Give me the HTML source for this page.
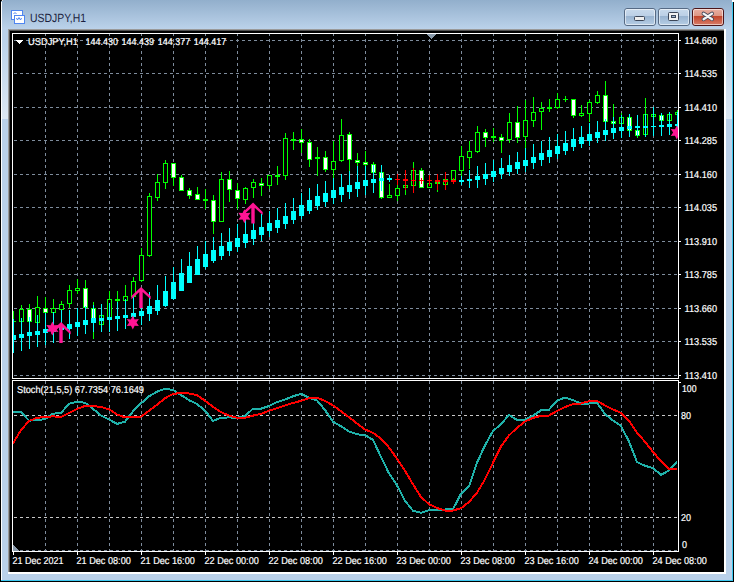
<!DOCTYPE html><html><head><meta charset="utf-8"><style>html,body{margin:0;padding:0;width:736px;height:582px;overflow:hidden;background:#fff}</style></head><body><svg width="736" height="582" viewBox="0 0 736 582" shape-rendering="crispEdges" style="position:absolute;left:0;top:0">
<defs>
<linearGradient id="tb" x1="0" y1="0" x2="0" y2="1">
 <stop offset="0" stop-color="#92AFCC"/><stop offset="1" stop-color="#BBD2EA"/>
</linearGradient>
<linearGradient id="side" x1="0" y1="0" x2="0" y2="1">
 <stop offset="0" stop-color="#BBD2EA"/><stop offset="1" stop-color="#DCE7F2"/>
</linearGradient>
<linearGradient id="btn" x1="0" y1="0" x2="0" y2="1">
 <stop offset="0" stop-color="#C9DAEC"/><stop offset="0.42" stop-color="#BCD0E6"/>
 <stop offset="0.45" stop-color="#98B3D0"/><stop offset="1" stop-color="#B8CFE6"/>
</linearGradient>
<linearGradient id="cbtn" x1="0" y1="0" x2="0" y2="1">
 <stop offset="0" stop-color="#E9B1A5"/><stop offset="0.42" stop-color="#DE9785"/>
 <stop offset="0.45" stop-color="#C2442A"/><stop offset="1" stop-color="#D9806C"/>
</linearGradient>
</defs>
<rect x="0" y="0" width="736" height="582" fill="#FFFFFF"/>
<rect x="0" y="0" width="734" height="582" fill="#BAD1EA"/>
<rect x="1" y="0" width="732" height="29" fill="url(#tb)"/>
<rect x="2" y="40" width="6" height="79" fill="url(#side)"/>
<rect x="726" y="40" width="6" height="79" fill="url(#side)"/>
<rect x="0" y="0" width="1" height="582" fill="#000000"/>
<rect x="1" y="2" width="1" height="579" fill="#FFFFFF"/>
<rect x="733" y="2" width="1" height="580" fill="#000000"/>
<rect x="732" y="2" width="1" height="579" fill="#3CC8F0"/>
<rect x="0" y="581" width="734" height="1" fill="#000000"/>
<rect x="1" y="580" width="732" height="1" fill="#3CC8F0"/>
<rect x="1" y="0" width="1" height="1" fill="#202020"/>
<rect x="2" y="0" width="1" height="1" fill="#E0E0E0"/>
<rect x="732" y="0" width="2" height="2" fill="#FFFFFF"/>
<rect x="8" y="29" width="718" height="545" fill="#FFFFFF"/>
<rect x="8" y="29" width="716" height="543" fill="#9A9A9A"/>
<rect x="9" y="30" width="715" height="542" fill="#505050"/>
<rect x="10" y="31" width="714" height="541" fill="#000000"/>
<g>
<rect x="11" y="10" width="12" height="10" fill="#4F86F0"/>
<rect x="12" y="11" width="10" height="8" fill="#FFFFFF"/>
<rect x="14" y="15" width="11" height="9" fill="#4F86F0"/>
<rect x="15" y="16" width="9" height="7" fill="#FFFFFF"/>
<path d="M13.5 14 l1.5 -1.5 l1.5 1.5 M16.5 18 l1 2 l1.5-2.5 l1.5 2.5 l1-2" stroke="#4F86F0" stroke-width="1" fill="none" shape-rendering="geometricPrecision"/>
</g>
<text x="30" y="22" font-family='"Liberation Sans", sans-serif' font-size="12" fill="#1B1F3E" textLength="56" lengthAdjust="spacingAndGlyphs" text-rendering="geometricPrecision">USDJPY,H1</text>
<rect x="624.5" y="8.5" width="31" height="17" rx="2.5" fill="url(#btn)" stroke="#566A84" stroke-width="1" shape-rendering="geometricPrecision"/>
<rect x="625.5" y="9.5" width="29" height="15" rx="1.5" fill="none" stroke="#FFFFFF" stroke-opacity="0.55" stroke-width="1" shape-rendering="geometricPrecision"/>
<rect x="658.5" y="8.5" width="31" height="17" rx="2.5" fill="url(#btn)" stroke="#566A84" stroke-width="1" shape-rendering="geometricPrecision"/>
<rect x="659.5" y="9.5" width="29" height="15" rx="1.5" fill="none" stroke="#FFFFFF" stroke-opacity="0.55" stroke-width="1" shape-rendering="geometricPrecision"/>
<rect x="692.5" y="8.5" width="31" height="17" rx="2.5" fill="url(#cbtn)" stroke="#4C1519" stroke-width="1" shape-rendering="geometricPrecision"/>
<rect x="693.5" y="9.5" width="29" height="15" rx="1.5" fill="none" stroke="#FFFFFF" stroke-opacity="0.55" stroke-width="1" shape-rendering="geometricPrecision"/>
<rect x="634.5" y="16.5" width="10" height="4" rx="1" fill="#EEEEEE" stroke="#3C4658" stroke-width="1" shape-rendering="geometricPrecision"/>
<rect x="668.5" y="12.5" width="10" height="8" rx="1" fill="#F2F2F2" stroke="#3C4658" stroke-width="1" shape-rendering="geometricPrecision"/>
<rect x="671" y="15" width="5" height="3" fill="#3C4658"/>
<rect x="672" y="16" width="3" height="1" fill="#9FB6D0"/>
<path d="M703.6 13.6 L712 19.2 M712 13.6 L703.6 19.2" stroke="#45485A" stroke-width="4.0" stroke-linecap="round" shape-rendering="geometricPrecision"/>
<path d="M703.6 13.6 L712 19.2 M712 13.6 L703.6 19.2" stroke="#F4F4F4" stroke-width="2.3" stroke-linecap="round" shape-rendering="geometricPrecision"/>
<rect x="12" y="33" width="667" height="1" fill="#FFFFFF"/>
<rect x="12" y="33" width="1" height="346" fill="#FFFFFF"/>
<rect x="678" y="33" width="1" height="346" fill="#FFFFFF"/>
<rect x="12" y="378" width="667" height="1" fill="#FFFFFF"/>
<rect x="12" y="380" width="667" height="1" fill="#FFFFFF"/>
<rect x="12" y="380" width="1" height="172" fill="#FFFFFF"/>
<rect x="678" y="380" width="1" height="172" fill="#FFFFFF"/>
<rect x="12" y="551" width="667" height="1" fill="#FFFFFF"/>
<rect x="14" y="40" width="3" height="1" fill="#7E8C9C"/>
<rect x="20" y="40" width="3" height="1" fill="#7E8C9C"/>
<rect x="26" y="40" width="3" height="1" fill="#7E8C9C"/>
<rect x="32" y="40" width="3" height="1" fill="#7E8C9C"/>
<rect x="38" y="40" width="3" height="1" fill="#7E8C9C"/>
<rect x="44" y="40" width="3" height="1" fill="#7E8C9C"/>
<rect x="50" y="40" width="3" height="1" fill="#7E8C9C"/>
<rect x="56" y="40" width="3" height="1" fill="#7E8C9C"/>
<rect x="62" y="40" width="3" height="1" fill="#7E8C9C"/>
<rect x="68" y="40" width="3" height="1" fill="#7E8C9C"/>
<rect x="74" y="40" width="3" height="1" fill="#7E8C9C"/>
<rect x="80" y="40" width="3" height="1" fill="#7E8C9C"/>
<rect x="86" y="40" width="3" height="1" fill="#7E8C9C"/>
<rect x="92" y="40" width="3" height="1" fill="#7E8C9C"/>
<rect x="98" y="40" width="3" height="1" fill="#7E8C9C"/>
<rect x="104" y="40" width="3" height="1" fill="#7E8C9C"/>
<rect x="110" y="40" width="3" height="1" fill="#7E8C9C"/>
<rect x="116" y="40" width="3" height="1" fill="#7E8C9C"/>
<rect x="122" y="40" width="3" height="1" fill="#7E8C9C"/>
<rect x="128" y="40" width="3" height="1" fill="#7E8C9C"/>
<rect x="134" y="40" width="3" height="1" fill="#7E8C9C"/>
<rect x="140" y="40" width="3" height="1" fill="#7E8C9C"/>
<rect x="146" y="40" width="3" height="1" fill="#7E8C9C"/>
<rect x="152" y="40" width="3" height="1" fill="#7E8C9C"/>
<rect x="158" y="40" width="3" height="1" fill="#7E8C9C"/>
<rect x="164" y="40" width="3" height="1" fill="#7E8C9C"/>
<rect x="170" y="40" width="3" height="1" fill="#7E8C9C"/>
<rect x="176" y="40" width="3" height="1" fill="#7E8C9C"/>
<rect x="182" y="40" width="3" height="1" fill="#7E8C9C"/>
<rect x="188" y="40" width="3" height="1" fill="#7E8C9C"/>
<rect x="194" y="40" width="3" height="1" fill="#7E8C9C"/>
<rect x="200" y="40" width="3" height="1" fill="#7E8C9C"/>
<rect x="206" y="40" width="3" height="1" fill="#7E8C9C"/>
<rect x="212" y="40" width="3" height="1" fill="#7E8C9C"/>
<rect x="218" y="40" width="3" height="1" fill="#7E8C9C"/>
<rect x="224" y="40" width="3" height="1" fill="#7E8C9C"/>
<rect x="230" y="40" width="3" height="1" fill="#7E8C9C"/>
<rect x="236" y="40" width="3" height="1" fill="#7E8C9C"/>
<rect x="242" y="40" width="3" height="1" fill="#7E8C9C"/>
<rect x="248" y="40" width="3" height="1" fill="#7E8C9C"/>
<rect x="254" y="40" width="3" height="1" fill="#7E8C9C"/>
<rect x="260" y="40" width="3" height="1" fill="#7E8C9C"/>
<rect x="266" y="40" width="3" height="1" fill="#7E8C9C"/>
<rect x="272" y="40" width="3" height="1" fill="#7E8C9C"/>
<rect x="278" y="40" width="3" height="1" fill="#7E8C9C"/>
<rect x="284" y="40" width="3" height="1" fill="#7E8C9C"/>
<rect x="290" y="40" width="3" height="1" fill="#7E8C9C"/>
<rect x="296" y="40" width="3" height="1" fill="#7E8C9C"/>
<rect x="302" y="40" width="3" height="1" fill="#7E8C9C"/>
<rect x="308" y="40" width="3" height="1" fill="#7E8C9C"/>
<rect x="314" y="40" width="3" height="1" fill="#7E8C9C"/>
<rect x="320" y="40" width="3" height="1" fill="#7E8C9C"/>
<rect x="326" y="40" width="3" height="1" fill="#7E8C9C"/>
<rect x="332" y="40" width="3" height="1" fill="#7E8C9C"/>
<rect x="338" y="40" width="3" height="1" fill="#7E8C9C"/>
<rect x="344" y="40" width="3" height="1" fill="#7E8C9C"/>
<rect x="350" y="40" width="3" height="1" fill="#7E8C9C"/>
<rect x="356" y="40" width="3" height="1" fill="#7E8C9C"/>
<rect x="362" y="40" width="3" height="1" fill="#7E8C9C"/>
<rect x="368" y="40" width="3" height="1" fill="#7E8C9C"/>
<rect x="374" y="40" width="3" height="1" fill="#7E8C9C"/>
<rect x="380" y="40" width="3" height="1" fill="#7E8C9C"/>
<rect x="386" y="40" width="3" height="1" fill="#7E8C9C"/>
<rect x="392" y="40" width="3" height="1" fill="#7E8C9C"/>
<rect x="398" y="40" width="3" height="1" fill="#7E8C9C"/>
<rect x="404" y="40" width="3" height="1" fill="#7E8C9C"/>
<rect x="410" y="40" width="3" height="1" fill="#7E8C9C"/>
<rect x="416" y="40" width="3" height="1" fill="#7E8C9C"/>
<rect x="422" y="40" width="3" height="1" fill="#7E8C9C"/>
<rect x="428" y="40" width="3" height="1" fill="#7E8C9C"/>
<rect x="434" y="40" width="3" height="1" fill="#7E8C9C"/>
<rect x="440" y="40" width="3" height="1" fill="#7E8C9C"/>
<rect x="446" y="40" width="3" height="1" fill="#7E8C9C"/>
<rect x="452" y="40" width="3" height="1" fill="#7E8C9C"/>
<rect x="458" y="40" width="3" height="1" fill="#7E8C9C"/>
<rect x="464" y="40" width="3" height="1" fill="#7E8C9C"/>
<rect x="470" y="40" width="3" height="1" fill="#7E8C9C"/>
<rect x="476" y="40" width="3" height="1" fill="#7E8C9C"/>
<rect x="482" y="40" width="3" height="1" fill="#7E8C9C"/>
<rect x="488" y="40" width="3" height="1" fill="#7E8C9C"/>
<rect x="494" y="40" width="3" height="1" fill="#7E8C9C"/>
<rect x="500" y="40" width="3" height="1" fill="#7E8C9C"/>
<rect x="506" y="40" width="3" height="1" fill="#7E8C9C"/>
<rect x="512" y="40" width="3" height="1" fill="#7E8C9C"/>
<rect x="518" y="40" width="3" height="1" fill="#7E8C9C"/>
<rect x="524" y="40" width="3" height="1" fill="#7E8C9C"/>
<rect x="530" y="40" width="3" height="1" fill="#7E8C9C"/>
<rect x="536" y="40" width="3" height="1" fill="#7E8C9C"/>
<rect x="542" y="40" width="3" height="1" fill="#7E8C9C"/>
<rect x="548" y="40" width="3" height="1" fill="#7E8C9C"/>
<rect x="554" y="40" width="3" height="1" fill="#7E8C9C"/>
<rect x="560" y="40" width="3" height="1" fill="#7E8C9C"/>
<rect x="566" y="40" width="3" height="1" fill="#7E8C9C"/>
<rect x="572" y="40" width="3" height="1" fill="#7E8C9C"/>
<rect x="578" y="40" width="3" height="1" fill="#7E8C9C"/>
<rect x="584" y="40" width="3" height="1" fill="#7E8C9C"/>
<rect x="590" y="40" width="3" height="1" fill="#7E8C9C"/>
<rect x="596" y="40" width="3" height="1" fill="#7E8C9C"/>
<rect x="602" y="40" width="3" height="1" fill="#7E8C9C"/>
<rect x="608" y="40" width="3" height="1" fill="#7E8C9C"/>
<rect x="614" y="40" width="3" height="1" fill="#7E8C9C"/>
<rect x="620" y="40" width="3" height="1" fill="#7E8C9C"/>
<rect x="626" y="40" width="3" height="1" fill="#7E8C9C"/>
<rect x="632" y="40" width="3" height="1" fill="#7E8C9C"/>
<rect x="638" y="40" width="3" height="1" fill="#7E8C9C"/>
<rect x="644" y="40" width="3" height="1" fill="#7E8C9C"/>
<rect x="650" y="40" width="3" height="1" fill="#7E8C9C"/>
<rect x="656" y="40" width="3" height="1" fill="#7E8C9C"/>
<rect x="662" y="40" width="3" height="1" fill="#7E8C9C"/>
<rect x="668" y="40" width="3" height="1" fill="#7E8C9C"/>
<rect x="674" y="40" width="3" height="1" fill="#7E8C9C"/>
<rect x="14" y="73" width="3" height="1" fill="#7E8C9C"/>
<rect x="20" y="73" width="3" height="1" fill="#7E8C9C"/>
<rect x="26" y="73" width="3" height="1" fill="#7E8C9C"/>
<rect x="32" y="73" width="3" height="1" fill="#7E8C9C"/>
<rect x="38" y="73" width="3" height="1" fill="#7E8C9C"/>
<rect x="44" y="73" width="3" height="1" fill="#7E8C9C"/>
<rect x="50" y="73" width="3" height="1" fill="#7E8C9C"/>
<rect x="56" y="73" width="3" height="1" fill="#7E8C9C"/>
<rect x="62" y="73" width="3" height="1" fill="#7E8C9C"/>
<rect x="68" y="73" width="3" height="1" fill="#7E8C9C"/>
<rect x="74" y="73" width="3" height="1" fill="#7E8C9C"/>
<rect x="80" y="73" width="3" height="1" fill="#7E8C9C"/>
<rect x="86" y="73" width="3" height="1" fill="#7E8C9C"/>
<rect x="92" y="73" width="3" height="1" fill="#7E8C9C"/>
<rect x="98" y="73" width="3" height="1" fill="#7E8C9C"/>
<rect x="104" y="73" width="3" height="1" fill="#7E8C9C"/>
<rect x="110" y="73" width="3" height="1" fill="#7E8C9C"/>
<rect x="116" y="73" width="3" height="1" fill="#7E8C9C"/>
<rect x="122" y="73" width="3" height="1" fill="#7E8C9C"/>
<rect x="128" y="73" width="3" height="1" fill="#7E8C9C"/>
<rect x="134" y="73" width="3" height="1" fill="#7E8C9C"/>
<rect x="140" y="73" width="3" height="1" fill="#7E8C9C"/>
<rect x="146" y="73" width="3" height="1" fill="#7E8C9C"/>
<rect x="152" y="73" width="3" height="1" fill="#7E8C9C"/>
<rect x="158" y="73" width="3" height="1" fill="#7E8C9C"/>
<rect x="164" y="73" width="3" height="1" fill="#7E8C9C"/>
<rect x="170" y="73" width="3" height="1" fill="#7E8C9C"/>
<rect x="176" y="73" width="3" height="1" fill="#7E8C9C"/>
<rect x="182" y="73" width="3" height="1" fill="#7E8C9C"/>
<rect x="188" y="73" width="3" height="1" fill="#7E8C9C"/>
<rect x="194" y="73" width="3" height="1" fill="#7E8C9C"/>
<rect x="200" y="73" width="3" height="1" fill="#7E8C9C"/>
<rect x="206" y="73" width="3" height="1" fill="#7E8C9C"/>
<rect x="212" y="73" width="3" height="1" fill="#7E8C9C"/>
<rect x="218" y="73" width="3" height="1" fill="#7E8C9C"/>
<rect x="224" y="73" width="3" height="1" fill="#7E8C9C"/>
<rect x="230" y="73" width="3" height="1" fill="#7E8C9C"/>
<rect x="236" y="73" width="3" height="1" fill="#7E8C9C"/>
<rect x="242" y="73" width="3" height="1" fill="#7E8C9C"/>
<rect x="248" y="73" width="3" height="1" fill="#7E8C9C"/>
<rect x="254" y="73" width="3" height="1" fill="#7E8C9C"/>
<rect x="260" y="73" width="3" height="1" fill="#7E8C9C"/>
<rect x="266" y="73" width="3" height="1" fill="#7E8C9C"/>
<rect x="272" y="73" width="3" height="1" fill="#7E8C9C"/>
<rect x="278" y="73" width="3" height="1" fill="#7E8C9C"/>
<rect x="284" y="73" width="3" height="1" fill="#7E8C9C"/>
<rect x="290" y="73" width="3" height="1" fill="#7E8C9C"/>
<rect x="296" y="73" width="3" height="1" fill="#7E8C9C"/>
<rect x="302" y="73" width="3" height="1" fill="#7E8C9C"/>
<rect x="308" y="73" width="3" height="1" fill="#7E8C9C"/>
<rect x="314" y="73" width="3" height="1" fill="#7E8C9C"/>
<rect x="320" y="73" width="3" height="1" fill="#7E8C9C"/>
<rect x="326" y="73" width="3" height="1" fill="#7E8C9C"/>
<rect x="332" y="73" width="3" height="1" fill="#7E8C9C"/>
<rect x="338" y="73" width="3" height="1" fill="#7E8C9C"/>
<rect x="344" y="73" width="3" height="1" fill="#7E8C9C"/>
<rect x="350" y="73" width="3" height="1" fill="#7E8C9C"/>
<rect x="356" y="73" width="3" height="1" fill="#7E8C9C"/>
<rect x="362" y="73" width="3" height="1" fill="#7E8C9C"/>
<rect x="368" y="73" width="3" height="1" fill="#7E8C9C"/>
<rect x="374" y="73" width="3" height="1" fill="#7E8C9C"/>
<rect x="380" y="73" width="3" height="1" fill="#7E8C9C"/>
<rect x="386" y="73" width="3" height="1" fill="#7E8C9C"/>
<rect x="392" y="73" width="3" height="1" fill="#7E8C9C"/>
<rect x="398" y="73" width="3" height="1" fill="#7E8C9C"/>
<rect x="404" y="73" width="3" height="1" fill="#7E8C9C"/>
<rect x="410" y="73" width="3" height="1" fill="#7E8C9C"/>
<rect x="416" y="73" width="3" height="1" fill="#7E8C9C"/>
<rect x="422" y="73" width="3" height="1" fill="#7E8C9C"/>
<rect x="428" y="73" width="3" height="1" fill="#7E8C9C"/>
<rect x="434" y="73" width="3" height="1" fill="#7E8C9C"/>
<rect x="440" y="73" width="3" height="1" fill="#7E8C9C"/>
<rect x="446" y="73" width="3" height="1" fill="#7E8C9C"/>
<rect x="452" y="73" width="3" height="1" fill="#7E8C9C"/>
<rect x="458" y="73" width="3" height="1" fill="#7E8C9C"/>
<rect x="464" y="73" width="3" height="1" fill="#7E8C9C"/>
<rect x="470" y="73" width="3" height="1" fill="#7E8C9C"/>
<rect x="476" y="73" width="3" height="1" fill="#7E8C9C"/>
<rect x="482" y="73" width="3" height="1" fill="#7E8C9C"/>
<rect x="488" y="73" width="3" height="1" fill="#7E8C9C"/>
<rect x="494" y="73" width="3" height="1" fill="#7E8C9C"/>
<rect x="500" y="73" width="3" height="1" fill="#7E8C9C"/>
<rect x="506" y="73" width="3" height="1" fill="#7E8C9C"/>
<rect x="512" y="73" width="3" height="1" fill="#7E8C9C"/>
<rect x="518" y="73" width="3" height="1" fill="#7E8C9C"/>
<rect x="524" y="73" width="3" height="1" fill="#7E8C9C"/>
<rect x="530" y="73" width="3" height="1" fill="#7E8C9C"/>
<rect x="536" y="73" width="3" height="1" fill="#7E8C9C"/>
<rect x="542" y="73" width="3" height="1" fill="#7E8C9C"/>
<rect x="548" y="73" width="3" height="1" fill="#7E8C9C"/>
<rect x="554" y="73" width="3" height="1" fill="#7E8C9C"/>
<rect x="560" y="73" width="3" height="1" fill="#7E8C9C"/>
<rect x="566" y="73" width="3" height="1" fill="#7E8C9C"/>
<rect x="572" y="73" width="3" height="1" fill="#7E8C9C"/>
<rect x="578" y="73" width="3" height="1" fill="#7E8C9C"/>
<rect x="584" y="73" width="3" height="1" fill="#7E8C9C"/>
<rect x="590" y="73" width="3" height="1" fill="#7E8C9C"/>
<rect x="596" y="73" width="3" height="1" fill="#7E8C9C"/>
<rect x="602" y="73" width="3" height="1" fill="#7E8C9C"/>
<rect x="608" y="73" width="3" height="1" fill="#7E8C9C"/>
<rect x="614" y="73" width="3" height="1" fill="#7E8C9C"/>
<rect x="620" y="73" width="3" height="1" fill="#7E8C9C"/>
<rect x="626" y="73" width="3" height="1" fill="#7E8C9C"/>
<rect x="632" y="73" width="3" height="1" fill="#7E8C9C"/>
<rect x="638" y="73" width="3" height="1" fill="#7E8C9C"/>
<rect x="644" y="73" width="3" height="1" fill="#7E8C9C"/>
<rect x="650" y="73" width="3" height="1" fill="#7E8C9C"/>
<rect x="656" y="73" width="3" height="1" fill="#7E8C9C"/>
<rect x="662" y="73" width="3" height="1" fill="#7E8C9C"/>
<rect x="668" y="73" width="3" height="1" fill="#7E8C9C"/>
<rect x="674" y="73" width="3" height="1" fill="#7E8C9C"/>
<rect x="14" y="107" width="3" height="1" fill="#7E8C9C"/>
<rect x="20" y="107" width="3" height="1" fill="#7E8C9C"/>
<rect x="26" y="107" width="3" height="1" fill="#7E8C9C"/>
<rect x="32" y="107" width="3" height="1" fill="#7E8C9C"/>
<rect x="38" y="107" width="3" height="1" fill="#7E8C9C"/>
<rect x="44" y="107" width="3" height="1" fill="#7E8C9C"/>
<rect x="50" y="107" width="3" height="1" fill="#7E8C9C"/>
<rect x="56" y="107" width="3" height="1" fill="#7E8C9C"/>
<rect x="62" y="107" width="3" height="1" fill="#7E8C9C"/>
<rect x="68" y="107" width="3" height="1" fill="#7E8C9C"/>
<rect x="74" y="107" width="3" height="1" fill="#7E8C9C"/>
<rect x="80" y="107" width="3" height="1" fill="#7E8C9C"/>
<rect x="86" y="107" width="3" height="1" fill="#7E8C9C"/>
<rect x="92" y="107" width="3" height="1" fill="#7E8C9C"/>
<rect x="98" y="107" width="3" height="1" fill="#7E8C9C"/>
<rect x="104" y="107" width="3" height="1" fill="#7E8C9C"/>
<rect x="110" y="107" width="3" height="1" fill="#7E8C9C"/>
<rect x="116" y="107" width="3" height="1" fill="#7E8C9C"/>
<rect x="122" y="107" width="3" height="1" fill="#7E8C9C"/>
<rect x="128" y="107" width="3" height="1" fill="#7E8C9C"/>
<rect x="134" y="107" width="3" height="1" fill="#7E8C9C"/>
<rect x="140" y="107" width="3" height="1" fill="#7E8C9C"/>
<rect x="146" y="107" width="3" height="1" fill="#7E8C9C"/>
<rect x="152" y="107" width="3" height="1" fill="#7E8C9C"/>
<rect x="158" y="107" width="3" height="1" fill="#7E8C9C"/>
<rect x="164" y="107" width="3" height="1" fill="#7E8C9C"/>
<rect x="170" y="107" width="3" height="1" fill="#7E8C9C"/>
<rect x="176" y="107" width="3" height="1" fill="#7E8C9C"/>
<rect x="182" y="107" width="3" height="1" fill="#7E8C9C"/>
<rect x="188" y="107" width="3" height="1" fill="#7E8C9C"/>
<rect x="194" y="107" width="3" height="1" fill="#7E8C9C"/>
<rect x="200" y="107" width="3" height="1" fill="#7E8C9C"/>
<rect x="206" y="107" width="3" height="1" fill="#7E8C9C"/>
<rect x="212" y="107" width="3" height="1" fill="#7E8C9C"/>
<rect x="218" y="107" width="3" height="1" fill="#7E8C9C"/>
<rect x="224" y="107" width="3" height="1" fill="#7E8C9C"/>
<rect x="230" y="107" width="3" height="1" fill="#7E8C9C"/>
<rect x="236" y="107" width="3" height="1" fill="#7E8C9C"/>
<rect x="242" y="107" width="3" height="1" fill="#7E8C9C"/>
<rect x="248" y="107" width="3" height="1" fill="#7E8C9C"/>
<rect x="254" y="107" width="3" height="1" fill="#7E8C9C"/>
<rect x="260" y="107" width="3" height="1" fill="#7E8C9C"/>
<rect x="266" y="107" width="3" height="1" fill="#7E8C9C"/>
<rect x="272" y="107" width="3" height="1" fill="#7E8C9C"/>
<rect x="278" y="107" width="3" height="1" fill="#7E8C9C"/>
<rect x="284" y="107" width="3" height="1" fill="#7E8C9C"/>
<rect x="290" y="107" width="3" height="1" fill="#7E8C9C"/>
<rect x="296" y="107" width="3" height="1" fill="#7E8C9C"/>
<rect x="302" y="107" width="3" height="1" fill="#7E8C9C"/>
<rect x="308" y="107" width="3" height="1" fill="#7E8C9C"/>
<rect x="314" y="107" width="3" height="1" fill="#7E8C9C"/>
<rect x="320" y="107" width="3" height="1" fill="#7E8C9C"/>
<rect x="326" y="107" width="3" height="1" fill="#7E8C9C"/>
<rect x="332" y="107" width="3" height="1" fill="#7E8C9C"/>
<rect x="338" y="107" width="3" height="1" fill="#7E8C9C"/>
<rect x="344" y="107" width="3" height="1" fill="#7E8C9C"/>
<rect x="350" y="107" width="3" height="1" fill="#7E8C9C"/>
<rect x="356" y="107" width="3" height="1" fill="#7E8C9C"/>
<rect x="362" y="107" width="3" height="1" fill="#7E8C9C"/>
<rect x="368" y="107" width="3" height="1" fill="#7E8C9C"/>
<rect x="374" y="107" width="3" height="1" fill="#7E8C9C"/>
<rect x="380" y="107" width="3" height="1" fill="#7E8C9C"/>
<rect x="386" y="107" width="3" height="1" fill="#7E8C9C"/>
<rect x="392" y="107" width="3" height="1" fill="#7E8C9C"/>
<rect x="398" y="107" width="3" height="1" fill="#7E8C9C"/>
<rect x="404" y="107" width="3" height="1" fill="#7E8C9C"/>
<rect x="410" y="107" width="3" height="1" fill="#7E8C9C"/>
<rect x="416" y="107" width="3" height="1" fill="#7E8C9C"/>
<rect x="422" y="107" width="3" height="1" fill="#7E8C9C"/>
<rect x="428" y="107" width="3" height="1" fill="#7E8C9C"/>
<rect x="434" y="107" width="3" height="1" fill="#7E8C9C"/>
<rect x="440" y="107" width="3" height="1" fill="#7E8C9C"/>
<rect x="446" y="107" width="3" height="1" fill="#7E8C9C"/>
<rect x="452" y="107" width="3" height="1" fill="#7E8C9C"/>
<rect x="458" y="107" width="3" height="1" fill="#7E8C9C"/>
<rect x="464" y="107" width="3" height="1" fill="#7E8C9C"/>
<rect x="470" y="107" width="3" height="1" fill="#7E8C9C"/>
<rect x="476" y="107" width="3" height="1" fill="#7E8C9C"/>
<rect x="482" y="107" width="3" height="1" fill="#7E8C9C"/>
<rect x="488" y="107" width="3" height="1" fill="#7E8C9C"/>
<rect x="494" y="107" width="3" height="1" fill="#7E8C9C"/>
<rect x="500" y="107" width="3" height="1" fill="#7E8C9C"/>
<rect x="506" y="107" width="3" height="1" fill="#7E8C9C"/>
<rect x="512" y="107" width="3" height="1" fill="#7E8C9C"/>
<rect x="518" y="107" width="3" height="1" fill="#7E8C9C"/>
<rect x="524" y="107" width="3" height="1" fill="#7E8C9C"/>
<rect x="530" y="107" width="3" height="1" fill="#7E8C9C"/>
<rect x="536" y="107" width="3" height="1" fill="#7E8C9C"/>
<rect x="542" y="107" width="3" height="1" fill="#7E8C9C"/>
<rect x="548" y="107" width="3" height="1" fill="#7E8C9C"/>
<rect x="554" y="107" width="3" height="1" fill="#7E8C9C"/>
<rect x="560" y="107" width="3" height="1" fill="#7E8C9C"/>
<rect x="566" y="107" width="3" height="1" fill="#7E8C9C"/>
<rect x="572" y="107" width="3" height="1" fill="#7E8C9C"/>
<rect x="578" y="107" width="3" height="1" fill="#7E8C9C"/>
<rect x="584" y="107" width="3" height="1" fill="#7E8C9C"/>
<rect x="590" y="107" width="3" height="1" fill="#7E8C9C"/>
<rect x="596" y="107" width="3" height="1" fill="#7E8C9C"/>
<rect x="602" y="107" width="3" height="1" fill="#7E8C9C"/>
<rect x="608" y="107" width="3" height="1" fill="#7E8C9C"/>
<rect x="614" y="107" width="3" height="1" fill="#7E8C9C"/>
<rect x="620" y="107" width="3" height="1" fill="#7E8C9C"/>
<rect x="626" y="107" width="3" height="1" fill="#7E8C9C"/>
<rect x="632" y="107" width="3" height="1" fill="#7E8C9C"/>
<rect x="638" y="107" width="3" height="1" fill="#7E8C9C"/>
<rect x="644" y="107" width="3" height="1" fill="#7E8C9C"/>
<rect x="650" y="107" width="3" height="1" fill="#7E8C9C"/>
<rect x="656" y="107" width="3" height="1" fill="#7E8C9C"/>
<rect x="662" y="107" width="3" height="1" fill="#7E8C9C"/>
<rect x="668" y="107" width="3" height="1" fill="#7E8C9C"/>
<rect x="674" y="107" width="3" height="1" fill="#7E8C9C"/>
<rect x="14" y="140" width="3" height="1" fill="#7E8C9C"/>
<rect x="20" y="140" width="3" height="1" fill="#7E8C9C"/>
<rect x="26" y="140" width="3" height="1" fill="#7E8C9C"/>
<rect x="32" y="140" width="3" height="1" fill="#7E8C9C"/>
<rect x="38" y="140" width="3" height="1" fill="#7E8C9C"/>
<rect x="44" y="140" width="3" height="1" fill="#7E8C9C"/>
<rect x="50" y="140" width="3" height="1" fill="#7E8C9C"/>
<rect x="56" y="140" width="3" height="1" fill="#7E8C9C"/>
<rect x="62" y="140" width="3" height="1" fill="#7E8C9C"/>
<rect x="68" y="140" width="3" height="1" fill="#7E8C9C"/>
<rect x="74" y="140" width="3" height="1" fill="#7E8C9C"/>
<rect x="80" y="140" width="3" height="1" fill="#7E8C9C"/>
<rect x="86" y="140" width="3" height="1" fill="#7E8C9C"/>
<rect x="92" y="140" width="3" height="1" fill="#7E8C9C"/>
<rect x="98" y="140" width="3" height="1" fill="#7E8C9C"/>
<rect x="104" y="140" width="3" height="1" fill="#7E8C9C"/>
<rect x="110" y="140" width="3" height="1" fill="#7E8C9C"/>
<rect x="116" y="140" width="3" height="1" fill="#7E8C9C"/>
<rect x="122" y="140" width="3" height="1" fill="#7E8C9C"/>
<rect x="128" y="140" width="3" height="1" fill="#7E8C9C"/>
<rect x="134" y="140" width="3" height="1" fill="#7E8C9C"/>
<rect x="140" y="140" width="3" height="1" fill="#7E8C9C"/>
<rect x="146" y="140" width="3" height="1" fill="#7E8C9C"/>
<rect x="152" y="140" width="3" height="1" fill="#7E8C9C"/>
<rect x="158" y="140" width="3" height="1" fill="#7E8C9C"/>
<rect x="164" y="140" width="3" height="1" fill="#7E8C9C"/>
<rect x="170" y="140" width="3" height="1" fill="#7E8C9C"/>
<rect x="176" y="140" width="3" height="1" fill="#7E8C9C"/>
<rect x="182" y="140" width="3" height="1" fill="#7E8C9C"/>
<rect x="188" y="140" width="3" height="1" fill="#7E8C9C"/>
<rect x="194" y="140" width="3" height="1" fill="#7E8C9C"/>
<rect x="200" y="140" width="3" height="1" fill="#7E8C9C"/>
<rect x="206" y="140" width="3" height="1" fill="#7E8C9C"/>
<rect x="212" y="140" width="3" height="1" fill="#7E8C9C"/>
<rect x="218" y="140" width="3" height="1" fill="#7E8C9C"/>
<rect x="224" y="140" width="3" height="1" fill="#7E8C9C"/>
<rect x="230" y="140" width="3" height="1" fill="#7E8C9C"/>
<rect x="236" y="140" width="3" height="1" fill="#7E8C9C"/>
<rect x="242" y="140" width="3" height="1" fill="#7E8C9C"/>
<rect x="248" y="140" width="3" height="1" fill="#7E8C9C"/>
<rect x="254" y="140" width="3" height="1" fill="#7E8C9C"/>
<rect x="260" y="140" width="3" height="1" fill="#7E8C9C"/>
<rect x="266" y="140" width="3" height="1" fill="#7E8C9C"/>
<rect x="272" y="140" width="3" height="1" fill="#7E8C9C"/>
<rect x="278" y="140" width="3" height="1" fill="#7E8C9C"/>
<rect x="284" y="140" width="3" height="1" fill="#7E8C9C"/>
<rect x="290" y="140" width="3" height="1" fill="#7E8C9C"/>
<rect x="296" y="140" width="3" height="1" fill="#7E8C9C"/>
<rect x="302" y="140" width="3" height="1" fill="#7E8C9C"/>
<rect x="308" y="140" width="3" height="1" fill="#7E8C9C"/>
<rect x="314" y="140" width="3" height="1" fill="#7E8C9C"/>
<rect x="320" y="140" width="3" height="1" fill="#7E8C9C"/>
<rect x="326" y="140" width="3" height="1" fill="#7E8C9C"/>
<rect x="332" y="140" width="3" height="1" fill="#7E8C9C"/>
<rect x="338" y="140" width="3" height="1" fill="#7E8C9C"/>
<rect x="344" y="140" width="3" height="1" fill="#7E8C9C"/>
<rect x="350" y="140" width="3" height="1" fill="#7E8C9C"/>
<rect x="356" y="140" width="3" height="1" fill="#7E8C9C"/>
<rect x="362" y="140" width="3" height="1" fill="#7E8C9C"/>
<rect x="368" y="140" width="3" height="1" fill="#7E8C9C"/>
<rect x="374" y="140" width="3" height="1" fill="#7E8C9C"/>
<rect x="380" y="140" width="3" height="1" fill="#7E8C9C"/>
<rect x="386" y="140" width="3" height="1" fill="#7E8C9C"/>
<rect x="392" y="140" width="3" height="1" fill="#7E8C9C"/>
<rect x="398" y="140" width="3" height="1" fill="#7E8C9C"/>
<rect x="404" y="140" width="3" height="1" fill="#7E8C9C"/>
<rect x="410" y="140" width="3" height="1" fill="#7E8C9C"/>
<rect x="416" y="140" width="3" height="1" fill="#7E8C9C"/>
<rect x="422" y="140" width="3" height="1" fill="#7E8C9C"/>
<rect x="428" y="140" width="3" height="1" fill="#7E8C9C"/>
<rect x="434" y="140" width="3" height="1" fill="#7E8C9C"/>
<rect x="440" y="140" width="3" height="1" fill="#7E8C9C"/>
<rect x="446" y="140" width="3" height="1" fill="#7E8C9C"/>
<rect x="452" y="140" width="3" height="1" fill="#7E8C9C"/>
<rect x="458" y="140" width="3" height="1" fill="#7E8C9C"/>
<rect x="464" y="140" width="3" height="1" fill="#7E8C9C"/>
<rect x="470" y="140" width="3" height="1" fill="#7E8C9C"/>
<rect x="476" y="140" width="3" height="1" fill="#7E8C9C"/>
<rect x="482" y="140" width="3" height="1" fill="#7E8C9C"/>
<rect x="488" y="140" width="3" height="1" fill="#7E8C9C"/>
<rect x="494" y="140" width="3" height="1" fill="#7E8C9C"/>
<rect x="500" y="140" width="3" height="1" fill="#7E8C9C"/>
<rect x="506" y="140" width="3" height="1" fill="#7E8C9C"/>
<rect x="512" y="140" width="3" height="1" fill="#7E8C9C"/>
<rect x="518" y="140" width="3" height="1" fill="#7E8C9C"/>
<rect x="524" y="140" width="3" height="1" fill="#7E8C9C"/>
<rect x="530" y="140" width="3" height="1" fill="#7E8C9C"/>
<rect x="536" y="140" width="3" height="1" fill="#7E8C9C"/>
<rect x="542" y="140" width="3" height="1" fill="#7E8C9C"/>
<rect x="548" y="140" width="3" height="1" fill="#7E8C9C"/>
<rect x="554" y="140" width="3" height="1" fill="#7E8C9C"/>
<rect x="560" y="140" width="3" height="1" fill="#7E8C9C"/>
<rect x="566" y="140" width="3" height="1" fill="#7E8C9C"/>
<rect x="572" y="140" width="3" height="1" fill="#7E8C9C"/>
<rect x="578" y="140" width="3" height="1" fill="#7E8C9C"/>
<rect x="584" y="140" width="3" height="1" fill="#7E8C9C"/>
<rect x="590" y="140" width="3" height="1" fill="#7E8C9C"/>
<rect x="596" y="140" width="3" height="1" fill="#7E8C9C"/>
<rect x="602" y="140" width="3" height="1" fill="#7E8C9C"/>
<rect x="608" y="140" width="3" height="1" fill="#7E8C9C"/>
<rect x="614" y="140" width="3" height="1" fill="#7E8C9C"/>
<rect x="620" y="140" width="3" height="1" fill="#7E8C9C"/>
<rect x="626" y="140" width="3" height="1" fill="#7E8C9C"/>
<rect x="632" y="140" width="3" height="1" fill="#7E8C9C"/>
<rect x="638" y="140" width="3" height="1" fill="#7E8C9C"/>
<rect x="644" y="140" width="3" height="1" fill="#7E8C9C"/>
<rect x="650" y="140" width="3" height="1" fill="#7E8C9C"/>
<rect x="656" y="140" width="3" height="1" fill="#7E8C9C"/>
<rect x="662" y="140" width="3" height="1" fill="#7E8C9C"/>
<rect x="668" y="140" width="3" height="1" fill="#7E8C9C"/>
<rect x="674" y="140" width="3" height="1" fill="#7E8C9C"/>
<rect x="14" y="174" width="3" height="1" fill="#7E8C9C"/>
<rect x="20" y="174" width="3" height="1" fill="#7E8C9C"/>
<rect x="26" y="174" width="3" height="1" fill="#7E8C9C"/>
<rect x="32" y="174" width="3" height="1" fill="#7E8C9C"/>
<rect x="38" y="174" width="3" height="1" fill="#7E8C9C"/>
<rect x="44" y="174" width="3" height="1" fill="#7E8C9C"/>
<rect x="50" y="174" width="3" height="1" fill="#7E8C9C"/>
<rect x="56" y="174" width="3" height="1" fill="#7E8C9C"/>
<rect x="62" y="174" width="3" height="1" fill="#7E8C9C"/>
<rect x="68" y="174" width="3" height="1" fill="#7E8C9C"/>
<rect x="74" y="174" width="3" height="1" fill="#7E8C9C"/>
<rect x="80" y="174" width="3" height="1" fill="#7E8C9C"/>
<rect x="86" y="174" width="3" height="1" fill="#7E8C9C"/>
<rect x="92" y="174" width="3" height="1" fill="#7E8C9C"/>
<rect x="98" y="174" width="3" height="1" fill="#7E8C9C"/>
<rect x="104" y="174" width="3" height="1" fill="#7E8C9C"/>
<rect x="110" y="174" width="3" height="1" fill="#7E8C9C"/>
<rect x="116" y="174" width="3" height="1" fill="#7E8C9C"/>
<rect x="122" y="174" width="3" height="1" fill="#7E8C9C"/>
<rect x="128" y="174" width="3" height="1" fill="#7E8C9C"/>
<rect x="134" y="174" width="3" height="1" fill="#7E8C9C"/>
<rect x="140" y="174" width="3" height="1" fill="#7E8C9C"/>
<rect x="146" y="174" width="3" height="1" fill="#7E8C9C"/>
<rect x="152" y="174" width="3" height="1" fill="#7E8C9C"/>
<rect x="158" y="174" width="3" height="1" fill="#7E8C9C"/>
<rect x="164" y="174" width="3" height="1" fill="#7E8C9C"/>
<rect x="170" y="174" width="3" height="1" fill="#7E8C9C"/>
<rect x="176" y="174" width="3" height="1" fill="#7E8C9C"/>
<rect x="182" y="174" width="3" height="1" fill="#7E8C9C"/>
<rect x="188" y="174" width="3" height="1" fill="#7E8C9C"/>
<rect x="194" y="174" width="3" height="1" fill="#7E8C9C"/>
<rect x="200" y="174" width="3" height="1" fill="#7E8C9C"/>
<rect x="206" y="174" width="3" height="1" fill="#7E8C9C"/>
<rect x="212" y="174" width="3" height="1" fill="#7E8C9C"/>
<rect x="218" y="174" width="3" height="1" fill="#7E8C9C"/>
<rect x="224" y="174" width="3" height="1" fill="#7E8C9C"/>
<rect x="230" y="174" width="3" height="1" fill="#7E8C9C"/>
<rect x="236" y="174" width="3" height="1" fill="#7E8C9C"/>
<rect x="242" y="174" width="3" height="1" fill="#7E8C9C"/>
<rect x="248" y="174" width="3" height="1" fill="#7E8C9C"/>
<rect x="254" y="174" width="3" height="1" fill="#7E8C9C"/>
<rect x="260" y="174" width="3" height="1" fill="#7E8C9C"/>
<rect x="266" y="174" width="3" height="1" fill="#7E8C9C"/>
<rect x="272" y="174" width="3" height="1" fill="#7E8C9C"/>
<rect x="278" y="174" width="3" height="1" fill="#7E8C9C"/>
<rect x="284" y="174" width="3" height="1" fill="#7E8C9C"/>
<rect x="290" y="174" width="3" height="1" fill="#7E8C9C"/>
<rect x="296" y="174" width="3" height="1" fill="#7E8C9C"/>
<rect x="302" y="174" width="3" height="1" fill="#7E8C9C"/>
<rect x="308" y="174" width="3" height="1" fill="#7E8C9C"/>
<rect x="314" y="174" width="3" height="1" fill="#7E8C9C"/>
<rect x="320" y="174" width="3" height="1" fill="#7E8C9C"/>
<rect x="326" y="174" width="3" height="1" fill="#7E8C9C"/>
<rect x="332" y="174" width="3" height="1" fill="#7E8C9C"/>
<rect x="338" y="174" width="3" height="1" fill="#7E8C9C"/>
<rect x="344" y="174" width="3" height="1" fill="#7E8C9C"/>
<rect x="350" y="174" width="3" height="1" fill="#7E8C9C"/>
<rect x="356" y="174" width="3" height="1" fill="#7E8C9C"/>
<rect x="362" y="174" width="3" height="1" fill="#7E8C9C"/>
<rect x="368" y="174" width="3" height="1" fill="#7E8C9C"/>
<rect x="374" y="174" width="3" height="1" fill="#7E8C9C"/>
<rect x="380" y="174" width="3" height="1" fill="#7E8C9C"/>
<rect x="386" y="174" width="3" height="1" fill="#7E8C9C"/>
<rect x="392" y="174" width="3" height="1" fill="#7E8C9C"/>
<rect x="398" y="174" width="3" height="1" fill="#7E8C9C"/>
<rect x="404" y="174" width="3" height="1" fill="#7E8C9C"/>
<rect x="410" y="174" width="3" height="1" fill="#7E8C9C"/>
<rect x="416" y="174" width="3" height="1" fill="#7E8C9C"/>
<rect x="422" y="174" width="3" height="1" fill="#7E8C9C"/>
<rect x="428" y="174" width="3" height="1" fill="#7E8C9C"/>
<rect x="434" y="174" width="3" height="1" fill="#7E8C9C"/>
<rect x="440" y="174" width="3" height="1" fill="#7E8C9C"/>
<rect x="446" y="174" width="3" height="1" fill="#7E8C9C"/>
<rect x="452" y="174" width="3" height="1" fill="#7E8C9C"/>
<rect x="458" y="174" width="3" height="1" fill="#7E8C9C"/>
<rect x="464" y="174" width="3" height="1" fill="#7E8C9C"/>
<rect x="470" y="174" width="3" height="1" fill="#7E8C9C"/>
<rect x="476" y="174" width="3" height="1" fill="#7E8C9C"/>
<rect x="482" y="174" width="3" height="1" fill="#7E8C9C"/>
<rect x="488" y="174" width="3" height="1" fill="#7E8C9C"/>
<rect x="494" y="174" width="3" height="1" fill="#7E8C9C"/>
<rect x="500" y="174" width="3" height="1" fill="#7E8C9C"/>
<rect x="506" y="174" width="3" height="1" fill="#7E8C9C"/>
<rect x="512" y="174" width="3" height="1" fill="#7E8C9C"/>
<rect x="518" y="174" width="3" height="1" fill="#7E8C9C"/>
<rect x="524" y="174" width="3" height="1" fill="#7E8C9C"/>
<rect x="530" y="174" width="3" height="1" fill="#7E8C9C"/>
<rect x="536" y="174" width="3" height="1" fill="#7E8C9C"/>
<rect x="542" y="174" width="3" height="1" fill="#7E8C9C"/>
<rect x="548" y="174" width="3" height="1" fill="#7E8C9C"/>
<rect x="554" y="174" width="3" height="1" fill="#7E8C9C"/>
<rect x="560" y="174" width="3" height="1" fill="#7E8C9C"/>
<rect x="566" y="174" width="3" height="1" fill="#7E8C9C"/>
<rect x="572" y="174" width="3" height="1" fill="#7E8C9C"/>
<rect x="578" y="174" width="3" height="1" fill="#7E8C9C"/>
<rect x="584" y="174" width="3" height="1" fill="#7E8C9C"/>
<rect x="590" y="174" width="3" height="1" fill="#7E8C9C"/>
<rect x="596" y="174" width="3" height="1" fill="#7E8C9C"/>
<rect x="602" y="174" width="3" height="1" fill="#7E8C9C"/>
<rect x="608" y="174" width="3" height="1" fill="#7E8C9C"/>
<rect x="614" y="174" width="3" height="1" fill="#7E8C9C"/>
<rect x="620" y="174" width="3" height="1" fill="#7E8C9C"/>
<rect x="626" y="174" width="3" height="1" fill="#7E8C9C"/>
<rect x="632" y="174" width="3" height="1" fill="#7E8C9C"/>
<rect x="638" y="174" width="3" height="1" fill="#7E8C9C"/>
<rect x="644" y="174" width="3" height="1" fill="#7E8C9C"/>
<rect x="650" y="174" width="3" height="1" fill="#7E8C9C"/>
<rect x="656" y="174" width="3" height="1" fill="#7E8C9C"/>
<rect x="662" y="174" width="3" height="1" fill="#7E8C9C"/>
<rect x="668" y="174" width="3" height="1" fill="#7E8C9C"/>
<rect x="674" y="174" width="3" height="1" fill="#7E8C9C"/>
<rect x="14" y="207" width="3" height="1" fill="#7E8C9C"/>
<rect x="20" y="207" width="3" height="1" fill="#7E8C9C"/>
<rect x="26" y="207" width="3" height="1" fill="#7E8C9C"/>
<rect x="32" y="207" width="3" height="1" fill="#7E8C9C"/>
<rect x="38" y="207" width="3" height="1" fill="#7E8C9C"/>
<rect x="44" y="207" width="3" height="1" fill="#7E8C9C"/>
<rect x="50" y="207" width="3" height="1" fill="#7E8C9C"/>
<rect x="56" y="207" width="3" height="1" fill="#7E8C9C"/>
<rect x="62" y="207" width="3" height="1" fill="#7E8C9C"/>
<rect x="68" y="207" width="3" height="1" fill="#7E8C9C"/>
<rect x="74" y="207" width="3" height="1" fill="#7E8C9C"/>
<rect x="80" y="207" width="3" height="1" fill="#7E8C9C"/>
<rect x="86" y="207" width="3" height="1" fill="#7E8C9C"/>
<rect x="92" y="207" width="3" height="1" fill="#7E8C9C"/>
<rect x="98" y="207" width="3" height="1" fill="#7E8C9C"/>
<rect x="104" y="207" width="3" height="1" fill="#7E8C9C"/>
<rect x="110" y="207" width="3" height="1" fill="#7E8C9C"/>
<rect x="116" y="207" width="3" height="1" fill="#7E8C9C"/>
<rect x="122" y="207" width="3" height="1" fill="#7E8C9C"/>
<rect x="128" y="207" width="3" height="1" fill="#7E8C9C"/>
<rect x="134" y="207" width="3" height="1" fill="#7E8C9C"/>
<rect x="140" y="207" width="3" height="1" fill="#7E8C9C"/>
<rect x="146" y="207" width="3" height="1" fill="#7E8C9C"/>
<rect x="152" y="207" width="3" height="1" fill="#7E8C9C"/>
<rect x="158" y="207" width="3" height="1" fill="#7E8C9C"/>
<rect x="164" y="207" width="3" height="1" fill="#7E8C9C"/>
<rect x="170" y="207" width="3" height="1" fill="#7E8C9C"/>
<rect x="176" y="207" width="3" height="1" fill="#7E8C9C"/>
<rect x="182" y="207" width="3" height="1" fill="#7E8C9C"/>
<rect x="188" y="207" width="3" height="1" fill="#7E8C9C"/>
<rect x="194" y="207" width="3" height="1" fill="#7E8C9C"/>
<rect x="200" y="207" width="3" height="1" fill="#7E8C9C"/>
<rect x="206" y="207" width="3" height="1" fill="#7E8C9C"/>
<rect x="212" y="207" width="3" height="1" fill="#7E8C9C"/>
<rect x="218" y="207" width="3" height="1" fill="#7E8C9C"/>
<rect x="224" y="207" width="3" height="1" fill="#7E8C9C"/>
<rect x="230" y="207" width="3" height="1" fill="#7E8C9C"/>
<rect x="236" y="207" width="3" height="1" fill="#7E8C9C"/>
<rect x="242" y="207" width="3" height="1" fill="#7E8C9C"/>
<rect x="248" y="207" width="3" height="1" fill="#7E8C9C"/>
<rect x="254" y="207" width="3" height="1" fill="#7E8C9C"/>
<rect x="260" y="207" width="3" height="1" fill="#7E8C9C"/>
<rect x="266" y="207" width="3" height="1" fill="#7E8C9C"/>
<rect x="272" y="207" width="3" height="1" fill="#7E8C9C"/>
<rect x="278" y="207" width="3" height="1" fill="#7E8C9C"/>
<rect x="284" y="207" width="3" height="1" fill="#7E8C9C"/>
<rect x="290" y="207" width="3" height="1" fill="#7E8C9C"/>
<rect x="296" y="207" width="3" height="1" fill="#7E8C9C"/>
<rect x="302" y="207" width="3" height="1" fill="#7E8C9C"/>
<rect x="308" y="207" width="3" height="1" fill="#7E8C9C"/>
<rect x="314" y="207" width="3" height="1" fill="#7E8C9C"/>
<rect x="320" y="207" width="3" height="1" fill="#7E8C9C"/>
<rect x="326" y="207" width="3" height="1" fill="#7E8C9C"/>
<rect x="332" y="207" width="3" height="1" fill="#7E8C9C"/>
<rect x="338" y="207" width="3" height="1" fill="#7E8C9C"/>
<rect x="344" y="207" width="3" height="1" fill="#7E8C9C"/>
<rect x="350" y="207" width="3" height="1" fill="#7E8C9C"/>
<rect x="356" y="207" width="3" height="1" fill="#7E8C9C"/>
<rect x="362" y="207" width="3" height="1" fill="#7E8C9C"/>
<rect x="368" y="207" width="3" height="1" fill="#7E8C9C"/>
<rect x="374" y="207" width="3" height="1" fill="#7E8C9C"/>
<rect x="380" y="207" width="3" height="1" fill="#7E8C9C"/>
<rect x="386" y="207" width="3" height="1" fill="#7E8C9C"/>
<rect x="392" y="207" width="3" height="1" fill="#7E8C9C"/>
<rect x="398" y="207" width="3" height="1" fill="#7E8C9C"/>
<rect x="404" y="207" width="3" height="1" fill="#7E8C9C"/>
<rect x="410" y="207" width="3" height="1" fill="#7E8C9C"/>
<rect x="416" y="207" width="3" height="1" fill="#7E8C9C"/>
<rect x="422" y="207" width="3" height="1" fill="#7E8C9C"/>
<rect x="428" y="207" width="3" height="1" fill="#7E8C9C"/>
<rect x="434" y="207" width="3" height="1" fill="#7E8C9C"/>
<rect x="440" y="207" width="3" height="1" fill="#7E8C9C"/>
<rect x="446" y="207" width="3" height="1" fill="#7E8C9C"/>
<rect x="452" y="207" width="3" height="1" fill="#7E8C9C"/>
<rect x="458" y="207" width="3" height="1" fill="#7E8C9C"/>
<rect x="464" y="207" width="3" height="1" fill="#7E8C9C"/>
<rect x="470" y="207" width="3" height="1" fill="#7E8C9C"/>
<rect x="476" y="207" width="3" height="1" fill="#7E8C9C"/>
<rect x="482" y="207" width="3" height="1" fill="#7E8C9C"/>
<rect x="488" y="207" width="3" height="1" fill="#7E8C9C"/>
<rect x="494" y="207" width="3" height="1" fill="#7E8C9C"/>
<rect x="500" y="207" width="3" height="1" fill="#7E8C9C"/>
<rect x="506" y="207" width="3" height="1" fill="#7E8C9C"/>
<rect x="512" y="207" width="3" height="1" fill="#7E8C9C"/>
<rect x="518" y="207" width="3" height="1" fill="#7E8C9C"/>
<rect x="524" y="207" width="3" height="1" fill="#7E8C9C"/>
<rect x="530" y="207" width="3" height="1" fill="#7E8C9C"/>
<rect x="536" y="207" width="3" height="1" fill="#7E8C9C"/>
<rect x="542" y="207" width="3" height="1" fill="#7E8C9C"/>
<rect x="548" y="207" width="3" height="1" fill="#7E8C9C"/>
<rect x="554" y="207" width="3" height="1" fill="#7E8C9C"/>
<rect x="560" y="207" width="3" height="1" fill="#7E8C9C"/>
<rect x="566" y="207" width="3" height="1" fill="#7E8C9C"/>
<rect x="572" y="207" width="3" height="1" fill="#7E8C9C"/>
<rect x="578" y="207" width="3" height="1" fill="#7E8C9C"/>
<rect x="584" y="207" width="3" height="1" fill="#7E8C9C"/>
<rect x="590" y="207" width="3" height="1" fill="#7E8C9C"/>
<rect x="596" y="207" width="3" height="1" fill="#7E8C9C"/>
<rect x="602" y="207" width="3" height="1" fill="#7E8C9C"/>
<rect x="608" y="207" width="3" height="1" fill="#7E8C9C"/>
<rect x="614" y="207" width="3" height="1" fill="#7E8C9C"/>
<rect x="620" y="207" width="3" height="1" fill="#7E8C9C"/>
<rect x="626" y="207" width="3" height="1" fill="#7E8C9C"/>
<rect x="632" y="207" width="3" height="1" fill="#7E8C9C"/>
<rect x="638" y="207" width="3" height="1" fill="#7E8C9C"/>
<rect x="644" y="207" width="3" height="1" fill="#7E8C9C"/>
<rect x="650" y="207" width="3" height="1" fill="#7E8C9C"/>
<rect x="656" y="207" width="3" height="1" fill="#7E8C9C"/>
<rect x="662" y="207" width="3" height="1" fill="#7E8C9C"/>
<rect x="668" y="207" width="3" height="1" fill="#7E8C9C"/>
<rect x="674" y="207" width="3" height="1" fill="#7E8C9C"/>
<rect x="14" y="241" width="3" height="1" fill="#7E8C9C"/>
<rect x="20" y="241" width="3" height="1" fill="#7E8C9C"/>
<rect x="26" y="241" width="3" height="1" fill="#7E8C9C"/>
<rect x="32" y="241" width="3" height="1" fill="#7E8C9C"/>
<rect x="38" y="241" width="3" height="1" fill="#7E8C9C"/>
<rect x="44" y="241" width="3" height="1" fill="#7E8C9C"/>
<rect x="50" y="241" width="3" height="1" fill="#7E8C9C"/>
<rect x="56" y="241" width="3" height="1" fill="#7E8C9C"/>
<rect x="62" y="241" width="3" height="1" fill="#7E8C9C"/>
<rect x="68" y="241" width="3" height="1" fill="#7E8C9C"/>
<rect x="74" y="241" width="3" height="1" fill="#7E8C9C"/>
<rect x="80" y="241" width="3" height="1" fill="#7E8C9C"/>
<rect x="86" y="241" width="3" height="1" fill="#7E8C9C"/>
<rect x="92" y="241" width="3" height="1" fill="#7E8C9C"/>
<rect x="98" y="241" width="3" height="1" fill="#7E8C9C"/>
<rect x="104" y="241" width="3" height="1" fill="#7E8C9C"/>
<rect x="110" y="241" width="3" height="1" fill="#7E8C9C"/>
<rect x="116" y="241" width="3" height="1" fill="#7E8C9C"/>
<rect x="122" y="241" width="3" height="1" fill="#7E8C9C"/>
<rect x="128" y="241" width="3" height="1" fill="#7E8C9C"/>
<rect x="134" y="241" width="3" height="1" fill="#7E8C9C"/>
<rect x="140" y="241" width="3" height="1" fill="#7E8C9C"/>
<rect x="146" y="241" width="3" height="1" fill="#7E8C9C"/>
<rect x="152" y="241" width="3" height="1" fill="#7E8C9C"/>
<rect x="158" y="241" width="3" height="1" fill="#7E8C9C"/>
<rect x="164" y="241" width="3" height="1" fill="#7E8C9C"/>
<rect x="170" y="241" width="3" height="1" fill="#7E8C9C"/>
<rect x="176" y="241" width="3" height="1" fill="#7E8C9C"/>
<rect x="182" y="241" width="3" height="1" fill="#7E8C9C"/>
<rect x="188" y="241" width="3" height="1" fill="#7E8C9C"/>
<rect x="194" y="241" width="3" height="1" fill="#7E8C9C"/>
<rect x="200" y="241" width="3" height="1" fill="#7E8C9C"/>
<rect x="206" y="241" width="3" height="1" fill="#7E8C9C"/>
<rect x="212" y="241" width="3" height="1" fill="#7E8C9C"/>
<rect x="218" y="241" width="3" height="1" fill="#7E8C9C"/>
<rect x="224" y="241" width="3" height="1" fill="#7E8C9C"/>
<rect x="230" y="241" width="3" height="1" fill="#7E8C9C"/>
<rect x="236" y="241" width="3" height="1" fill="#7E8C9C"/>
<rect x="242" y="241" width="3" height="1" fill="#7E8C9C"/>
<rect x="248" y="241" width="3" height="1" fill="#7E8C9C"/>
<rect x="254" y="241" width="3" height="1" fill="#7E8C9C"/>
<rect x="260" y="241" width="3" height="1" fill="#7E8C9C"/>
<rect x="266" y="241" width="3" height="1" fill="#7E8C9C"/>
<rect x="272" y="241" width="3" height="1" fill="#7E8C9C"/>
<rect x="278" y="241" width="3" height="1" fill="#7E8C9C"/>
<rect x="284" y="241" width="3" height="1" fill="#7E8C9C"/>
<rect x="290" y="241" width="3" height="1" fill="#7E8C9C"/>
<rect x="296" y="241" width="3" height="1" fill="#7E8C9C"/>
<rect x="302" y="241" width="3" height="1" fill="#7E8C9C"/>
<rect x="308" y="241" width="3" height="1" fill="#7E8C9C"/>
<rect x="314" y="241" width="3" height="1" fill="#7E8C9C"/>
<rect x="320" y="241" width="3" height="1" fill="#7E8C9C"/>
<rect x="326" y="241" width="3" height="1" fill="#7E8C9C"/>
<rect x="332" y="241" width="3" height="1" fill="#7E8C9C"/>
<rect x="338" y="241" width="3" height="1" fill="#7E8C9C"/>
<rect x="344" y="241" width="3" height="1" fill="#7E8C9C"/>
<rect x="350" y="241" width="3" height="1" fill="#7E8C9C"/>
<rect x="356" y="241" width="3" height="1" fill="#7E8C9C"/>
<rect x="362" y="241" width="3" height="1" fill="#7E8C9C"/>
<rect x="368" y="241" width="3" height="1" fill="#7E8C9C"/>
<rect x="374" y="241" width="3" height="1" fill="#7E8C9C"/>
<rect x="380" y="241" width="3" height="1" fill="#7E8C9C"/>
<rect x="386" y="241" width="3" height="1" fill="#7E8C9C"/>
<rect x="392" y="241" width="3" height="1" fill="#7E8C9C"/>
<rect x="398" y="241" width="3" height="1" fill="#7E8C9C"/>
<rect x="404" y="241" width="3" height="1" fill="#7E8C9C"/>
<rect x="410" y="241" width="3" height="1" fill="#7E8C9C"/>
<rect x="416" y="241" width="3" height="1" fill="#7E8C9C"/>
<rect x="422" y="241" width="3" height="1" fill="#7E8C9C"/>
<rect x="428" y="241" width="3" height="1" fill="#7E8C9C"/>
<rect x="434" y="241" width="3" height="1" fill="#7E8C9C"/>
<rect x="440" y="241" width="3" height="1" fill="#7E8C9C"/>
<rect x="446" y="241" width="3" height="1" fill="#7E8C9C"/>
<rect x="452" y="241" width="3" height="1" fill="#7E8C9C"/>
<rect x="458" y="241" width="3" height="1" fill="#7E8C9C"/>
<rect x="464" y="241" width="3" height="1" fill="#7E8C9C"/>
<rect x="470" y="241" width="3" height="1" fill="#7E8C9C"/>
<rect x="476" y="241" width="3" height="1" fill="#7E8C9C"/>
<rect x="482" y="241" width="3" height="1" fill="#7E8C9C"/>
<rect x="488" y="241" width="3" height="1" fill="#7E8C9C"/>
<rect x="494" y="241" width="3" height="1" fill="#7E8C9C"/>
<rect x="500" y="241" width="3" height="1" fill="#7E8C9C"/>
<rect x="506" y="241" width="3" height="1" fill="#7E8C9C"/>
<rect x="512" y="241" width="3" height="1" fill="#7E8C9C"/>
<rect x="518" y="241" width="3" height="1" fill="#7E8C9C"/>
<rect x="524" y="241" width="3" height="1" fill="#7E8C9C"/>
<rect x="530" y="241" width="3" height="1" fill="#7E8C9C"/>
<rect x="536" y="241" width="3" height="1" fill="#7E8C9C"/>
<rect x="542" y="241" width="3" height="1" fill="#7E8C9C"/>
<rect x="548" y="241" width="3" height="1" fill="#7E8C9C"/>
<rect x="554" y="241" width="3" height="1" fill="#7E8C9C"/>
<rect x="560" y="241" width="3" height="1" fill="#7E8C9C"/>
<rect x="566" y="241" width="3" height="1" fill="#7E8C9C"/>
<rect x="572" y="241" width="3" height="1" fill="#7E8C9C"/>
<rect x="578" y="241" width="3" height="1" fill="#7E8C9C"/>
<rect x="584" y="241" width="3" height="1" fill="#7E8C9C"/>
<rect x="590" y="241" width="3" height="1" fill="#7E8C9C"/>
<rect x="596" y="241" width="3" height="1" fill="#7E8C9C"/>
<rect x="602" y="241" width="3" height="1" fill="#7E8C9C"/>
<rect x="608" y="241" width="3" height="1" fill="#7E8C9C"/>
<rect x="614" y="241" width="3" height="1" fill="#7E8C9C"/>
<rect x="620" y="241" width="3" height="1" fill="#7E8C9C"/>
<rect x="626" y="241" width="3" height="1" fill="#7E8C9C"/>
<rect x="632" y="241" width="3" height="1" fill="#7E8C9C"/>
<rect x="638" y="241" width="3" height="1" fill="#7E8C9C"/>
<rect x="644" y="241" width="3" height="1" fill="#7E8C9C"/>
<rect x="650" y="241" width="3" height="1" fill="#7E8C9C"/>
<rect x="656" y="241" width="3" height="1" fill="#7E8C9C"/>
<rect x="662" y="241" width="3" height="1" fill="#7E8C9C"/>
<rect x="668" y="241" width="3" height="1" fill="#7E8C9C"/>
<rect x="674" y="241" width="3" height="1" fill="#7E8C9C"/>
<rect x="14" y="274" width="3" height="1" fill="#7E8C9C"/>
<rect x="20" y="274" width="3" height="1" fill="#7E8C9C"/>
<rect x="26" y="274" width="3" height="1" fill="#7E8C9C"/>
<rect x="32" y="274" width="3" height="1" fill="#7E8C9C"/>
<rect x="38" y="274" width="3" height="1" fill="#7E8C9C"/>
<rect x="44" y="274" width="3" height="1" fill="#7E8C9C"/>
<rect x="50" y="274" width="3" height="1" fill="#7E8C9C"/>
<rect x="56" y="274" width="3" height="1" fill="#7E8C9C"/>
<rect x="62" y="274" width="3" height="1" fill="#7E8C9C"/>
<rect x="68" y="274" width="3" height="1" fill="#7E8C9C"/>
<rect x="74" y="274" width="3" height="1" fill="#7E8C9C"/>
<rect x="80" y="274" width="3" height="1" fill="#7E8C9C"/>
<rect x="86" y="274" width="3" height="1" fill="#7E8C9C"/>
<rect x="92" y="274" width="3" height="1" fill="#7E8C9C"/>
<rect x="98" y="274" width="3" height="1" fill="#7E8C9C"/>
<rect x="104" y="274" width="3" height="1" fill="#7E8C9C"/>
<rect x="110" y="274" width="3" height="1" fill="#7E8C9C"/>
<rect x="116" y="274" width="3" height="1" fill="#7E8C9C"/>
<rect x="122" y="274" width="3" height="1" fill="#7E8C9C"/>
<rect x="128" y="274" width="3" height="1" fill="#7E8C9C"/>
<rect x="134" y="274" width="3" height="1" fill="#7E8C9C"/>
<rect x="140" y="274" width="3" height="1" fill="#7E8C9C"/>
<rect x="146" y="274" width="3" height="1" fill="#7E8C9C"/>
<rect x="152" y="274" width="3" height="1" fill="#7E8C9C"/>
<rect x="158" y="274" width="3" height="1" fill="#7E8C9C"/>
<rect x="164" y="274" width="3" height="1" fill="#7E8C9C"/>
<rect x="170" y="274" width="3" height="1" fill="#7E8C9C"/>
<rect x="176" y="274" width="3" height="1" fill="#7E8C9C"/>
<rect x="182" y="274" width="3" height="1" fill="#7E8C9C"/>
<rect x="188" y="274" width="3" height="1" fill="#7E8C9C"/>
<rect x="194" y="274" width="3" height="1" fill="#7E8C9C"/>
<rect x="200" y="274" width="3" height="1" fill="#7E8C9C"/>
<rect x="206" y="274" width="3" height="1" fill="#7E8C9C"/>
<rect x="212" y="274" width="3" height="1" fill="#7E8C9C"/>
<rect x="218" y="274" width="3" height="1" fill="#7E8C9C"/>
<rect x="224" y="274" width="3" height="1" fill="#7E8C9C"/>
<rect x="230" y="274" width="3" height="1" fill="#7E8C9C"/>
<rect x="236" y="274" width="3" height="1" fill="#7E8C9C"/>
<rect x="242" y="274" width="3" height="1" fill="#7E8C9C"/>
<rect x="248" y="274" width="3" height="1" fill="#7E8C9C"/>
<rect x="254" y="274" width="3" height="1" fill="#7E8C9C"/>
<rect x="260" y="274" width="3" height="1" fill="#7E8C9C"/>
<rect x="266" y="274" width="3" height="1" fill="#7E8C9C"/>
<rect x="272" y="274" width="3" height="1" fill="#7E8C9C"/>
<rect x="278" y="274" width="3" height="1" fill="#7E8C9C"/>
<rect x="284" y="274" width="3" height="1" fill="#7E8C9C"/>
<rect x="290" y="274" width="3" height="1" fill="#7E8C9C"/>
<rect x="296" y="274" width="3" height="1" fill="#7E8C9C"/>
<rect x="302" y="274" width="3" height="1" fill="#7E8C9C"/>
<rect x="308" y="274" width="3" height="1" fill="#7E8C9C"/>
<rect x="314" y="274" width="3" height="1" fill="#7E8C9C"/>
<rect x="320" y="274" width="3" height="1" fill="#7E8C9C"/>
<rect x="326" y="274" width="3" height="1" fill="#7E8C9C"/>
<rect x="332" y="274" width="3" height="1" fill="#7E8C9C"/>
<rect x="338" y="274" width="3" height="1" fill="#7E8C9C"/>
<rect x="344" y="274" width="3" height="1" fill="#7E8C9C"/>
<rect x="350" y="274" width="3" height="1" fill="#7E8C9C"/>
<rect x="356" y="274" width="3" height="1" fill="#7E8C9C"/>
<rect x="362" y="274" width="3" height="1" fill="#7E8C9C"/>
<rect x="368" y="274" width="3" height="1" fill="#7E8C9C"/>
<rect x="374" y="274" width="3" height="1" fill="#7E8C9C"/>
<rect x="380" y="274" width="3" height="1" fill="#7E8C9C"/>
<rect x="386" y="274" width="3" height="1" fill="#7E8C9C"/>
<rect x="392" y="274" width="3" height="1" fill="#7E8C9C"/>
<rect x="398" y="274" width="3" height="1" fill="#7E8C9C"/>
<rect x="404" y="274" width="3" height="1" fill="#7E8C9C"/>
<rect x="410" y="274" width="3" height="1" fill="#7E8C9C"/>
<rect x="416" y="274" width="3" height="1" fill="#7E8C9C"/>
<rect x="422" y="274" width="3" height="1" fill="#7E8C9C"/>
<rect x="428" y="274" width="3" height="1" fill="#7E8C9C"/>
<rect x="434" y="274" width="3" height="1" fill="#7E8C9C"/>
<rect x="440" y="274" width="3" height="1" fill="#7E8C9C"/>
<rect x="446" y="274" width="3" height="1" fill="#7E8C9C"/>
<rect x="452" y="274" width="3" height="1" fill="#7E8C9C"/>
<rect x="458" y="274" width="3" height="1" fill="#7E8C9C"/>
<rect x="464" y="274" width="3" height="1" fill="#7E8C9C"/>
<rect x="470" y="274" width="3" height="1" fill="#7E8C9C"/>
<rect x="476" y="274" width="3" height="1" fill="#7E8C9C"/>
<rect x="482" y="274" width="3" height="1" fill="#7E8C9C"/>
<rect x="488" y="274" width="3" height="1" fill="#7E8C9C"/>
<rect x="494" y="274" width="3" height="1" fill="#7E8C9C"/>
<rect x="500" y="274" width="3" height="1" fill="#7E8C9C"/>
<rect x="506" y="274" width="3" height="1" fill="#7E8C9C"/>
<rect x="512" y="274" width="3" height="1" fill="#7E8C9C"/>
<rect x="518" y="274" width="3" height="1" fill="#7E8C9C"/>
<rect x="524" y="274" width="3" height="1" fill="#7E8C9C"/>
<rect x="530" y="274" width="3" height="1" fill="#7E8C9C"/>
<rect x="536" y="274" width="3" height="1" fill="#7E8C9C"/>
<rect x="542" y="274" width="3" height="1" fill="#7E8C9C"/>
<rect x="548" y="274" width="3" height="1" fill="#7E8C9C"/>
<rect x="554" y="274" width="3" height="1" fill="#7E8C9C"/>
<rect x="560" y="274" width="3" height="1" fill="#7E8C9C"/>
<rect x="566" y="274" width="3" height="1" fill="#7E8C9C"/>
<rect x="572" y="274" width="3" height="1" fill="#7E8C9C"/>
<rect x="578" y="274" width="3" height="1" fill="#7E8C9C"/>
<rect x="584" y="274" width="3" height="1" fill="#7E8C9C"/>
<rect x="590" y="274" width="3" height="1" fill="#7E8C9C"/>
<rect x="596" y="274" width="3" height="1" fill="#7E8C9C"/>
<rect x="602" y="274" width="3" height="1" fill="#7E8C9C"/>
<rect x="608" y="274" width="3" height="1" fill="#7E8C9C"/>
<rect x="614" y="274" width="3" height="1" fill="#7E8C9C"/>
<rect x="620" y="274" width="3" height="1" fill="#7E8C9C"/>
<rect x="626" y="274" width="3" height="1" fill="#7E8C9C"/>
<rect x="632" y="274" width="3" height="1" fill="#7E8C9C"/>
<rect x="638" y="274" width="3" height="1" fill="#7E8C9C"/>
<rect x="644" y="274" width="3" height="1" fill="#7E8C9C"/>
<rect x="650" y="274" width="3" height="1" fill="#7E8C9C"/>
<rect x="656" y="274" width="3" height="1" fill="#7E8C9C"/>
<rect x="662" y="274" width="3" height="1" fill="#7E8C9C"/>
<rect x="668" y="274" width="3" height="1" fill="#7E8C9C"/>
<rect x="674" y="274" width="3" height="1" fill="#7E8C9C"/>
<rect x="14" y="308" width="3" height="1" fill="#7E8C9C"/>
<rect x="20" y="308" width="3" height="1" fill="#7E8C9C"/>
<rect x="26" y="308" width="3" height="1" fill="#7E8C9C"/>
<rect x="32" y="308" width="3" height="1" fill="#7E8C9C"/>
<rect x="38" y="308" width="3" height="1" fill="#7E8C9C"/>
<rect x="44" y="308" width="3" height="1" fill="#7E8C9C"/>
<rect x="50" y="308" width="3" height="1" fill="#7E8C9C"/>
<rect x="56" y="308" width="3" height="1" fill="#7E8C9C"/>
<rect x="62" y="308" width="3" height="1" fill="#7E8C9C"/>
<rect x="68" y="308" width="3" height="1" fill="#7E8C9C"/>
<rect x="74" y="308" width="3" height="1" fill="#7E8C9C"/>
<rect x="80" y="308" width="3" height="1" fill="#7E8C9C"/>
<rect x="86" y="308" width="3" height="1" fill="#7E8C9C"/>
<rect x="92" y="308" width="3" height="1" fill="#7E8C9C"/>
<rect x="98" y="308" width="3" height="1" fill="#7E8C9C"/>
<rect x="104" y="308" width="3" height="1" fill="#7E8C9C"/>
<rect x="110" y="308" width="3" height="1" fill="#7E8C9C"/>
<rect x="116" y="308" width="3" height="1" fill="#7E8C9C"/>
<rect x="122" y="308" width="3" height="1" fill="#7E8C9C"/>
<rect x="128" y="308" width="3" height="1" fill="#7E8C9C"/>
<rect x="134" y="308" width="3" height="1" fill="#7E8C9C"/>
<rect x="140" y="308" width="3" height="1" fill="#7E8C9C"/>
<rect x="146" y="308" width="3" height="1" fill="#7E8C9C"/>
<rect x="152" y="308" width="3" height="1" fill="#7E8C9C"/>
<rect x="158" y="308" width="3" height="1" fill="#7E8C9C"/>
<rect x="164" y="308" width="3" height="1" fill="#7E8C9C"/>
<rect x="170" y="308" width="3" height="1" fill="#7E8C9C"/>
<rect x="176" y="308" width="3" height="1" fill="#7E8C9C"/>
<rect x="182" y="308" width="3" height="1" fill="#7E8C9C"/>
<rect x="188" y="308" width="3" height="1" fill="#7E8C9C"/>
<rect x="194" y="308" width="3" height="1" fill="#7E8C9C"/>
<rect x="200" y="308" width="3" height="1" fill="#7E8C9C"/>
<rect x="206" y="308" width="3" height="1" fill="#7E8C9C"/>
<rect x="212" y="308" width="3" height="1" fill="#7E8C9C"/>
<rect x="218" y="308" width="3" height="1" fill="#7E8C9C"/>
<rect x="224" y="308" width="3" height="1" fill="#7E8C9C"/>
<rect x="230" y="308" width="3" height="1" fill="#7E8C9C"/>
<rect x="236" y="308" width="3" height="1" fill="#7E8C9C"/>
<rect x="242" y="308" width="3" height="1" fill="#7E8C9C"/>
<rect x="248" y="308" width="3" height="1" fill="#7E8C9C"/>
<rect x="254" y="308" width="3" height="1" fill="#7E8C9C"/>
<rect x="260" y="308" width="3" height="1" fill="#7E8C9C"/>
<rect x="266" y="308" width="3" height="1" fill="#7E8C9C"/>
<rect x="272" y="308" width="3" height="1" fill="#7E8C9C"/>
<rect x="278" y="308" width="3" height="1" fill="#7E8C9C"/>
<rect x="284" y="308" width="3" height="1" fill="#7E8C9C"/>
<rect x="290" y="308" width="3" height="1" fill="#7E8C9C"/>
<rect x="296" y="308" width="3" height="1" fill="#7E8C9C"/>
<rect x="302" y="308" width="3" height="1" fill="#7E8C9C"/>
<rect x="308" y="308" width="3" height="1" fill="#7E8C9C"/>
<rect x="314" y="308" width="3" height="1" fill="#7E8C9C"/>
<rect x="320" y="308" width="3" height="1" fill="#7E8C9C"/>
<rect x="326" y="308" width="3" height="1" fill="#7E8C9C"/>
<rect x="332" y="308" width="3" height="1" fill="#7E8C9C"/>
<rect x="338" y="308" width="3" height="1" fill="#7E8C9C"/>
<rect x="344" y="308" width="3" height="1" fill="#7E8C9C"/>
<rect x="350" y="308" width="3" height="1" fill="#7E8C9C"/>
<rect x="356" y="308" width="3" height="1" fill="#7E8C9C"/>
<rect x="362" y="308" width="3" height="1" fill="#7E8C9C"/>
<rect x="368" y="308" width="3" height="1" fill="#7E8C9C"/>
<rect x="374" y="308" width="3" height="1" fill="#7E8C9C"/>
<rect x="380" y="308" width="3" height="1" fill="#7E8C9C"/>
<rect x="386" y="308" width="3" height="1" fill="#7E8C9C"/>
<rect x="392" y="308" width="3" height="1" fill="#7E8C9C"/>
<rect x="398" y="308" width="3" height="1" fill="#7E8C9C"/>
<rect x="404" y="308" width="3" height="1" fill="#7E8C9C"/>
<rect x="410" y="308" width="3" height="1" fill="#7E8C9C"/>
<rect x="416" y="308" width="3" height="1" fill="#7E8C9C"/>
<rect x="422" y="308" width="3" height="1" fill="#7E8C9C"/>
<rect x="428" y="308" width="3" height="1" fill="#7E8C9C"/>
<rect x="434" y="308" width="3" height="1" fill="#7E8C9C"/>
<rect x="440" y="308" width="3" height="1" fill="#7E8C9C"/>
<rect x="446" y="308" width="3" height="1" fill="#7E8C9C"/>
<rect x="452" y="308" width="3" height="1" fill="#7E8C9C"/>
<rect x="458" y="308" width="3" height="1" fill="#7E8C9C"/>
<rect x="464" y="308" width="3" height="1" fill="#7E8C9C"/>
<rect x="470" y="308" width="3" height="1" fill="#7E8C9C"/>
<rect x="476" y="308" width="3" height="1" fill="#7E8C9C"/>
<rect x="482" y="308" width="3" height="1" fill="#7E8C9C"/>
<rect x="488" y="308" width="3" height="1" fill="#7E8C9C"/>
<rect x="494" y="308" width="3" height="1" fill="#7E8C9C"/>
<rect x="500" y="308" width="3" height="1" fill="#7E8C9C"/>
<rect x="506" y="308" width="3" height="1" fill="#7E8C9C"/>
<rect x="512" y="308" width="3" height="1" fill="#7E8C9C"/>
<rect x="518" y="308" width="3" height="1" fill="#7E8C9C"/>
<rect x="524" y="308" width="3" height="1" fill="#7E8C9C"/>
<rect x="530" y="308" width="3" height="1" fill="#7E8C9C"/>
<rect x="536" y="308" width="3" height="1" fill="#7E8C9C"/>
<rect x="542" y="308" width="3" height="1" fill="#7E8C9C"/>
<rect x="548" y="308" width="3" height="1" fill="#7E8C9C"/>
<rect x="554" y="308" width="3" height="1" fill="#7E8C9C"/>
<rect x="560" y="308" width="3" height="1" fill="#7E8C9C"/>
<rect x="566" y="308" width="3" height="1" fill="#7E8C9C"/>
<rect x="572" y="308" width="3" height="1" fill="#7E8C9C"/>
<rect x="578" y="308" width="3" height="1" fill="#7E8C9C"/>
<rect x="584" y="308" width="3" height="1" fill="#7E8C9C"/>
<rect x="590" y="308" width="3" height="1" fill="#7E8C9C"/>
<rect x="596" y="308" width="3" height="1" fill="#7E8C9C"/>
<rect x="602" y="308" width="3" height="1" fill="#7E8C9C"/>
<rect x="608" y="308" width="3" height="1" fill="#7E8C9C"/>
<rect x="614" y="308" width="3" height="1" fill="#7E8C9C"/>
<rect x="620" y="308" width="3" height="1" fill="#7E8C9C"/>
<rect x="626" y="308" width="3" height="1" fill="#7E8C9C"/>
<rect x="632" y="308" width="3" height="1" fill="#7E8C9C"/>
<rect x="638" y="308" width="3" height="1" fill="#7E8C9C"/>
<rect x="644" y="308" width="3" height="1" fill="#7E8C9C"/>
<rect x="650" y="308" width="3" height="1" fill="#7E8C9C"/>
<rect x="656" y="308" width="3" height="1" fill="#7E8C9C"/>
<rect x="662" y="308" width="3" height="1" fill="#7E8C9C"/>
<rect x="668" y="308" width="3" height="1" fill="#7E8C9C"/>
<rect x="674" y="308" width="3" height="1" fill="#7E8C9C"/>
<rect x="14" y="341" width="3" height="1" fill="#7E8C9C"/>
<rect x="20" y="341" width="3" height="1" fill="#7E8C9C"/>
<rect x="26" y="341" width="3" height="1" fill="#7E8C9C"/>
<rect x="32" y="341" width="3" height="1" fill="#7E8C9C"/>
<rect x="38" y="341" width="3" height="1" fill="#7E8C9C"/>
<rect x="44" y="341" width="3" height="1" fill="#7E8C9C"/>
<rect x="50" y="341" width="3" height="1" fill="#7E8C9C"/>
<rect x="56" y="341" width="3" height="1" fill="#7E8C9C"/>
<rect x="62" y="341" width="3" height="1" fill="#7E8C9C"/>
<rect x="68" y="341" width="3" height="1" fill="#7E8C9C"/>
<rect x="74" y="341" width="3" height="1" fill="#7E8C9C"/>
<rect x="80" y="341" width="3" height="1" fill="#7E8C9C"/>
<rect x="86" y="341" width="3" height="1" fill="#7E8C9C"/>
<rect x="92" y="341" width="3" height="1" fill="#7E8C9C"/>
<rect x="98" y="341" width="3" height="1" fill="#7E8C9C"/>
<rect x="104" y="341" width="3" height="1" fill="#7E8C9C"/>
<rect x="110" y="341" width="3" height="1" fill="#7E8C9C"/>
<rect x="116" y="341" width="3" height="1" fill="#7E8C9C"/>
<rect x="122" y="341" width="3" height="1" fill="#7E8C9C"/>
<rect x="128" y="341" width="3" height="1" fill="#7E8C9C"/>
<rect x="134" y="341" width="3" height="1" fill="#7E8C9C"/>
<rect x="140" y="341" width="3" height="1" fill="#7E8C9C"/>
<rect x="146" y="341" width="3" height="1" fill="#7E8C9C"/>
<rect x="152" y="341" width="3" height="1" fill="#7E8C9C"/>
<rect x="158" y="341" width="3" height="1" fill="#7E8C9C"/>
<rect x="164" y="341" width="3" height="1" fill="#7E8C9C"/>
<rect x="170" y="341" width="3" height="1" fill="#7E8C9C"/>
<rect x="176" y="341" width="3" height="1" fill="#7E8C9C"/>
<rect x="182" y="341" width="3" height="1" fill="#7E8C9C"/>
<rect x="188" y="341" width="3" height="1" fill="#7E8C9C"/>
<rect x="194" y="341" width="3" height="1" fill="#7E8C9C"/>
<rect x="200" y="341" width="3" height="1" fill="#7E8C9C"/>
<rect x="206" y="341" width="3" height="1" fill="#7E8C9C"/>
<rect x="212" y="341" width="3" height="1" fill="#7E8C9C"/>
<rect x="218" y="341" width="3" height="1" fill="#7E8C9C"/>
<rect x="224" y="341" width="3" height="1" fill="#7E8C9C"/>
<rect x="230" y="341" width="3" height="1" fill="#7E8C9C"/>
<rect x="236" y="341" width="3" height="1" fill="#7E8C9C"/>
<rect x="242" y="341" width="3" height="1" fill="#7E8C9C"/>
<rect x="248" y="341" width="3" height="1" fill="#7E8C9C"/>
<rect x="254" y="341" width="3" height="1" fill="#7E8C9C"/>
<rect x="260" y="341" width="3" height="1" fill="#7E8C9C"/>
<rect x="266" y="341" width="3" height="1" fill="#7E8C9C"/>
<rect x="272" y="341" width="3" height="1" fill="#7E8C9C"/>
<rect x="278" y="341" width="3" height="1" fill="#7E8C9C"/>
<rect x="284" y="341" width="3" height="1" fill="#7E8C9C"/>
<rect x="290" y="341" width="3" height="1" fill="#7E8C9C"/>
<rect x="296" y="341" width="3" height="1" fill="#7E8C9C"/>
<rect x="302" y="341" width="3" height="1" fill="#7E8C9C"/>
<rect x="308" y="341" width="3" height="1" fill="#7E8C9C"/>
<rect x="314" y="341" width="3" height="1" fill="#7E8C9C"/>
<rect x="320" y="341" width="3" height="1" fill="#7E8C9C"/>
<rect x="326" y="341" width="3" height="1" fill="#7E8C9C"/>
<rect x="332" y="341" width="3" height="1" fill="#7E8C9C"/>
<rect x="338" y="341" width="3" height="1" fill="#7E8C9C"/>
<rect x="344" y="341" width="3" height="1" fill="#7E8C9C"/>
<rect x="350" y="341" width="3" height="1" fill="#7E8C9C"/>
<rect x="356" y="341" width="3" height="1" fill="#7E8C9C"/>
<rect x="362" y="341" width="3" height="1" fill="#7E8C9C"/>
<rect x="368" y="341" width="3" height="1" fill="#7E8C9C"/>
<rect x="374" y="341" width="3" height="1" fill="#7E8C9C"/>
<rect x="380" y="341" width="3" height="1" fill="#7E8C9C"/>
<rect x="386" y="341" width="3" height="1" fill="#7E8C9C"/>
<rect x="392" y="341" width="3" height="1" fill="#7E8C9C"/>
<rect x="398" y="341" width="3" height="1" fill="#7E8C9C"/>
<rect x="404" y="341" width="3" height="1" fill="#7E8C9C"/>
<rect x="410" y="341" width="3" height="1" fill="#7E8C9C"/>
<rect x="416" y="341" width="3" height="1" fill="#7E8C9C"/>
<rect x="422" y="341" width="3" height="1" fill="#7E8C9C"/>
<rect x="428" y="341" width="3" height="1" fill="#7E8C9C"/>
<rect x="434" y="341" width="3" height="1" fill="#7E8C9C"/>
<rect x="440" y="341" width="3" height="1" fill="#7E8C9C"/>
<rect x="446" y="341" width="3" height="1" fill="#7E8C9C"/>
<rect x="452" y="341" width="3" height="1" fill="#7E8C9C"/>
<rect x="458" y="341" width="3" height="1" fill="#7E8C9C"/>
<rect x="464" y="341" width="3" height="1" fill="#7E8C9C"/>
<rect x="470" y="341" width="3" height="1" fill="#7E8C9C"/>
<rect x="476" y="341" width="3" height="1" fill="#7E8C9C"/>
<rect x="482" y="341" width="3" height="1" fill="#7E8C9C"/>
<rect x="488" y="341" width="3" height="1" fill="#7E8C9C"/>
<rect x="494" y="341" width="3" height="1" fill="#7E8C9C"/>
<rect x="500" y="341" width="3" height="1" fill="#7E8C9C"/>
<rect x="506" y="341" width="3" height="1" fill="#7E8C9C"/>
<rect x="512" y="341" width="3" height="1" fill="#7E8C9C"/>
<rect x="518" y="341" width="3" height="1" fill="#7E8C9C"/>
<rect x="524" y="341" width="3" height="1" fill="#7E8C9C"/>
<rect x="530" y="341" width="3" height="1" fill="#7E8C9C"/>
<rect x="536" y="341" width="3" height="1" fill="#7E8C9C"/>
<rect x="542" y="341" width="3" height="1" fill="#7E8C9C"/>
<rect x="548" y="341" width="3" height="1" fill="#7E8C9C"/>
<rect x="554" y="341" width="3" height="1" fill="#7E8C9C"/>
<rect x="560" y="341" width="3" height="1" fill="#7E8C9C"/>
<rect x="566" y="341" width="3" height="1" fill="#7E8C9C"/>
<rect x="572" y="341" width="3" height="1" fill="#7E8C9C"/>
<rect x="578" y="341" width="3" height="1" fill="#7E8C9C"/>
<rect x="584" y="341" width="3" height="1" fill="#7E8C9C"/>
<rect x="590" y="341" width="3" height="1" fill="#7E8C9C"/>
<rect x="596" y="341" width="3" height="1" fill="#7E8C9C"/>
<rect x="602" y="341" width="3" height="1" fill="#7E8C9C"/>
<rect x="608" y="341" width="3" height="1" fill="#7E8C9C"/>
<rect x="614" y="341" width="3" height="1" fill="#7E8C9C"/>
<rect x="620" y="341" width="3" height="1" fill="#7E8C9C"/>
<rect x="626" y="341" width="3" height="1" fill="#7E8C9C"/>
<rect x="632" y="341" width="3" height="1" fill="#7E8C9C"/>
<rect x="638" y="341" width="3" height="1" fill="#7E8C9C"/>
<rect x="644" y="341" width="3" height="1" fill="#7E8C9C"/>
<rect x="650" y="341" width="3" height="1" fill="#7E8C9C"/>
<rect x="656" y="341" width="3" height="1" fill="#7E8C9C"/>
<rect x="662" y="341" width="3" height="1" fill="#7E8C9C"/>
<rect x="668" y="341" width="3" height="1" fill="#7E8C9C"/>
<rect x="674" y="341" width="3" height="1" fill="#7E8C9C"/>
<rect x="14" y="375" width="3" height="1" fill="#7E8C9C"/>
<rect x="20" y="375" width="3" height="1" fill="#7E8C9C"/>
<rect x="26" y="375" width="3" height="1" fill="#7E8C9C"/>
<rect x="32" y="375" width="3" height="1" fill="#7E8C9C"/>
<rect x="38" y="375" width="3" height="1" fill="#7E8C9C"/>
<rect x="44" y="375" width="3" height="1" fill="#7E8C9C"/>
<rect x="50" y="375" width="3" height="1" fill="#7E8C9C"/>
<rect x="56" y="375" width="3" height="1" fill="#7E8C9C"/>
<rect x="62" y="375" width="3" height="1" fill="#7E8C9C"/>
<rect x="68" y="375" width="3" height="1" fill="#7E8C9C"/>
<rect x="74" y="375" width="3" height="1" fill="#7E8C9C"/>
<rect x="80" y="375" width="3" height="1" fill="#7E8C9C"/>
<rect x="86" y="375" width="3" height="1" fill="#7E8C9C"/>
<rect x="92" y="375" width="3" height="1" fill="#7E8C9C"/>
<rect x="98" y="375" width="3" height="1" fill="#7E8C9C"/>
<rect x="104" y="375" width="3" height="1" fill="#7E8C9C"/>
<rect x="110" y="375" width="3" height="1" fill="#7E8C9C"/>
<rect x="116" y="375" width="3" height="1" fill="#7E8C9C"/>
<rect x="122" y="375" width="3" height="1" fill="#7E8C9C"/>
<rect x="128" y="375" width="3" height="1" fill="#7E8C9C"/>
<rect x="134" y="375" width="3" height="1" fill="#7E8C9C"/>
<rect x="140" y="375" width="3" height="1" fill="#7E8C9C"/>
<rect x="146" y="375" width="3" height="1" fill="#7E8C9C"/>
<rect x="152" y="375" width="3" height="1" fill="#7E8C9C"/>
<rect x="158" y="375" width="3" height="1" fill="#7E8C9C"/>
<rect x="164" y="375" width="3" height="1" fill="#7E8C9C"/>
<rect x="170" y="375" width="3" height="1" fill="#7E8C9C"/>
<rect x="176" y="375" width="3" height="1" fill="#7E8C9C"/>
<rect x="182" y="375" width="3" height="1" fill="#7E8C9C"/>
<rect x="188" y="375" width="3" height="1" fill="#7E8C9C"/>
<rect x="194" y="375" width="3" height="1" fill="#7E8C9C"/>
<rect x="200" y="375" width="3" height="1" fill="#7E8C9C"/>
<rect x="206" y="375" width="3" height="1" fill="#7E8C9C"/>
<rect x="212" y="375" width="3" height="1" fill="#7E8C9C"/>
<rect x="218" y="375" width="3" height="1" fill="#7E8C9C"/>
<rect x="224" y="375" width="3" height="1" fill="#7E8C9C"/>
<rect x="230" y="375" width="3" height="1" fill="#7E8C9C"/>
<rect x="236" y="375" width="3" height="1" fill="#7E8C9C"/>
<rect x="242" y="375" width="3" height="1" fill="#7E8C9C"/>
<rect x="248" y="375" width="3" height="1" fill="#7E8C9C"/>
<rect x="254" y="375" width="3" height="1" fill="#7E8C9C"/>
<rect x="260" y="375" width="3" height="1" fill="#7E8C9C"/>
<rect x="266" y="375" width="3" height="1" fill="#7E8C9C"/>
<rect x="272" y="375" width="3" height="1" fill="#7E8C9C"/>
<rect x="278" y="375" width="3" height="1" fill="#7E8C9C"/>
<rect x="284" y="375" width="3" height="1" fill="#7E8C9C"/>
<rect x="290" y="375" width="3" height="1" fill="#7E8C9C"/>
<rect x="296" y="375" width="3" height="1" fill="#7E8C9C"/>
<rect x="302" y="375" width="3" height="1" fill="#7E8C9C"/>
<rect x="308" y="375" width="3" height="1" fill="#7E8C9C"/>
<rect x="314" y="375" width="3" height="1" fill="#7E8C9C"/>
<rect x="320" y="375" width="3" height="1" fill="#7E8C9C"/>
<rect x="326" y="375" width="3" height="1" fill="#7E8C9C"/>
<rect x="332" y="375" width="3" height="1" fill="#7E8C9C"/>
<rect x="338" y="375" width="3" height="1" fill="#7E8C9C"/>
<rect x="344" y="375" width="3" height="1" fill="#7E8C9C"/>
<rect x="350" y="375" width="3" height="1" fill="#7E8C9C"/>
<rect x="356" y="375" width="3" height="1" fill="#7E8C9C"/>
<rect x="362" y="375" width="3" height="1" fill="#7E8C9C"/>
<rect x="368" y="375" width="3" height="1" fill="#7E8C9C"/>
<rect x="374" y="375" width="3" height="1" fill="#7E8C9C"/>
<rect x="380" y="375" width="3" height="1" fill="#7E8C9C"/>
<rect x="386" y="375" width="3" height="1" fill="#7E8C9C"/>
<rect x="392" y="375" width="3" height="1" fill="#7E8C9C"/>
<rect x="398" y="375" width="3" height="1" fill="#7E8C9C"/>
<rect x="404" y="375" width="3" height="1" fill="#7E8C9C"/>
<rect x="410" y="375" width="3" height="1" fill="#7E8C9C"/>
<rect x="416" y="375" width="3" height="1" fill="#7E8C9C"/>
<rect x="422" y="375" width="3" height="1" fill="#7E8C9C"/>
<rect x="428" y="375" width="3" height="1" fill="#7E8C9C"/>
<rect x="434" y="375" width="3" height="1" fill="#7E8C9C"/>
<rect x="440" y="375" width="3" height="1" fill="#7E8C9C"/>
<rect x="446" y="375" width="3" height="1" fill="#7E8C9C"/>
<rect x="452" y="375" width="3" height="1" fill="#7E8C9C"/>
<rect x="458" y="375" width="3" height="1" fill="#7E8C9C"/>
<rect x="464" y="375" width="3" height="1" fill="#7E8C9C"/>
<rect x="470" y="375" width="3" height="1" fill="#7E8C9C"/>
<rect x="476" y="375" width="3" height="1" fill="#7E8C9C"/>
<rect x="482" y="375" width="3" height="1" fill="#7E8C9C"/>
<rect x="488" y="375" width="3" height="1" fill="#7E8C9C"/>
<rect x="494" y="375" width="3" height="1" fill="#7E8C9C"/>
<rect x="500" y="375" width="3" height="1" fill="#7E8C9C"/>
<rect x="506" y="375" width="3" height="1" fill="#7E8C9C"/>
<rect x="512" y="375" width="3" height="1" fill="#7E8C9C"/>
<rect x="518" y="375" width="3" height="1" fill="#7E8C9C"/>
<rect x="524" y="375" width="3" height="1" fill="#7E8C9C"/>
<rect x="530" y="375" width="3" height="1" fill="#7E8C9C"/>
<rect x="536" y="375" width="3" height="1" fill="#7E8C9C"/>
<rect x="542" y="375" width="3" height="1" fill="#7E8C9C"/>
<rect x="548" y="375" width="3" height="1" fill="#7E8C9C"/>
<rect x="554" y="375" width="3" height="1" fill="#7E8C9C"/>
<rect x="560" y="375" width="3" height="1" fill="#7E8C9C"/>
<rect x="566" y="375" width="3" height="1" fill="#7E8C9C"/>
<rect x="572" y="375" width="3" height="1" fill="#7E8C9C"/>
<rect x="578" y="375" width="3" height="1" fill="#7E8C9C"/>
<rect x="584" y="375" width="3" height="1" fill="#7E8C9C"/>
<rect x="590" y="375" width="3" height="1" fill="#7E8C9C"/>
<rect x="596" y="375" width="3" height="1" fill="#7E8C9C"/>
<rect x="602" y="375" width="3" height="1" fill="#7E8C9C"/>
<rect x="608" y="375" width="3" height="1" fill="#7E8C9C"/>
<rect x="614" y="375" width="3" height="1" fill="#7E8C9C"/>
<rect x="620" y="375" width="3" height="1" fill="#7E8C9C"/>
<rect x="626" y="375" width="3" height="1" fill="#7E8C9C"/>
<rect x="632" y="375" width="3" height="1" fill="#7E8C9C"/>
<rect x="638" y="375" width="3" height="1" fill="#7E8C9C"/>
<rect x="644" y="375" width="3" height="1" fill="#7E8C9C"/>
<rect x="650" y="375" width="3" height="1" fill="#7E8C9C"/>
<rect x="656" y="375" width="3" height="1" fill="#7E8C9C"/>
<rect x="662" y="375" width="3" height="1" fill="#7E8C9C"/>
<rect x="668" y="375" width="3" height="1" fill="#7E8C9C"/>
<rect x="674" y="375" width="3" height="1" fill="#7E8C9C"/>
<rect x="45" y="34" width="1" height="2" fill="#7E8C9C"/>
<rect x="45" y="39" width="1" height="3" fill="#7E8C9C"/>
<rect x="45" y="45" width="1" height="3" fill="#7E8C9C"/>
<rect x="45" y="51" width="1" height="3" fill="#7E8C9C"/>
<rect x="45" y="57" width="1" height="3" fill="#7E8C9C"/>
<rect x="45" y="63" width="1" height="3" fill="#7E8C9C"/>
<rect x="45" y="69" width="1" height="3" fill="#7E8C9C"/>
<rect x="45" y="75" width="1" height="3" fill="#7E8C9C"/>
<rect x="45" y="81" width="1" height="3" fill="#7E8C9C"/>
<rect x="45" y="87" width="1" height="3" fill="#7E8C9C"/>
<rect x="45" y="93" width="1" height="3" fill="#7E8C9C"/>
<rect x="45" y="99" width="1" height="3" fill="#7E8C9C"/>
<rect x="45" y="105" width="1" height="3" fill="#7E8C9C"/>
<rect x="45" y="111" width="1" height="3" fill="#7E8C9C"/>
<rect x="45" y="117" width="1" height="3" fill="#7E8C9C"/>
<rect x="45" y="123" width="1" height="3" fill="#7E8C9C"/>
<rect x="45" y="129" width="1" height="3" fill="#7E8C9C"/>
<rect x="45" y="135" width="1" height="3" fill="#7E8C9C"/>
<rect x="45" y="141" width="1" height="3" fill="#7E8C9C"/>
<rect x="45" y="147" width="1" height="3" fill="#7E8C9C"/>
<rect x="45" y="153" width="1" height="3" fill="#7E8C9C"/>
<rect x="45" y="159" width="1" height="3" fill="#7E8C9C"/>
<rect x="45" y="165" width="1" height="3" fill="#7E8C9C"/>
<rect x="45" y="171" width="1" height="3" fill="#7E8C9C"/>
<rect x="45" y="177" width="1" height="3" fill="#7E8C9C"/>
<rect x="45" y="183" width="1" height="3" fill="#7E8C9C"/>
<rect x="45" y="189" width="1" height="3" fill="#7E8C9C"/>
<rect x="45" y="195" width="1" height="3" fill="#7E8C9C"/>
<rect x="45" y="201" width="1" height="3" fill="#7E8C9C"/>
<rect x="45" y="207" width="1" height="3" fill="#7E8C9C"/>
<rect x="45" y="213" width="1" height="3" fill="#7E8C9C"/>
<rect x="45" y="219" width="1" height="3" fill="#7E8C9C"/>
<rect x="45" y="225" width="1" height="3" fill="#7E8C9C"/>
<rect x="45" y="231" width="1" height="3" fill="#7E8C9C"/>
<rect x="45" y="237" width="1" height="3" fill="#7E8C9C"/>
<rect x="45" y="243" width="1" height="3" fill="#7E8C9C"/>
<rect x="45" y="249" width="1" height="3" fill="#7E8C9C"/>
<rect x="45" y="255" width="1" height="3" fill="#7E8C9C"/>
<rect x="45" y="261" width="1" height="3" fill="#7E8C9C"/>
<rect x="45" y="267" width="1" height="3" fill="#7E8C9C"/>
<rect x="45" y="273" width="1" height="3" fill="#7E8C9C"/>
<rect x="45" y="279" width="1" height="3" fill="#7E8C9C"/>
<rect x="45" y="285" width="1" height="3" fill="#7E8C9C"/>
<rect x="45" y="291" width="1" height="3" fill="#7E8C9C"/>
<rect x="45" y="297" width="1" height="3" fill="#7E8C9C"/>
<rect x="45" y="303" width="1" height="3" fill="#7E8C9C"/>
<rect x="45" y="309" width="1" height="3" fill="#7E8C9C"/>
<rect x="45" y="315" width="1" height="3" fill="#7E8C9C"/>
<rect x="45" y="321" width="1" height="3" fill="#7E8C9C"/>
<rect x="45" y="327" width="1" height="3" fill="#7E8C9C"/>
<rect x="45" y="333" width="1" height="3" fill="#7E8C9C"/>
<rect x="45" y="339" width="1" height="3" fill="#7E8C9C"/>
<rect x="45" y="345" width="1" height="3" fill="#7E8C9C"/>
<rect x="45" y="351" width="1" height="3" fill="#7E8C9C"/>
<rect x="45" y="357" width="1" height="3" fill="#7E8C9C"/>
<rect x="45" y="363" width="1" height="3" fill="#7E8C9C"/>
<rect x="45" y="369" width="1" height="3" fill="#7E8C9C"/>
<rect x="45" y="375" width="1" height="3" fill="#7E8C9C"/>
<rect x="45" y="381" width="1" height="3" fill="#7E8C9C"/>
<rect x="45" y="387" width="1" height="3" fill="#7E8C9C"/>
<rect x="45" y="393" width="1" height="3" fill="#7E8C9C"/>
<rect x="45" y="399" width="1" height="3" fill="#7E8C9C"/>
<rect x="45" y="405" width="1" height="3" fill="#7E8C9C"/>
<rect x="45" y="411" width="1" height="3" fill="#7E8C9C"/>
<rect x="45" y="417" width="1" height="3" fill="#7E8C9C"/>
<rect x="45" y="423" width="1" height="3" fill="#7E8C9C"/>
<rect x="45" y="429" width="1" height="3" fill="#7E8C9C"/>
<rect x="45" y="435" width="1" height="3" fill="#7E8C9C"/>
<rect x="45" y="441" width="1" height="3" fill="#7E8C9C"/>
<rect x="45" y="447" width="1" height="3" fill="#7E8C9C"/>
<rect x="45" y="453" width="1" height="3" fill="#7E8C9C"/>
<rect x="45" y="459" width="1" height="3" fill="#7E8C9C"/>
<rect x="45" y="465" width="1" height="3" fill="#7E8C9C"/>
<rect x="45" y="471" width="1" height="3" fill="#7E8C9C"/>
<rect x="45" y="477" width="1" height="3" fill="#7E8C9C"/>
<rect x="45" y="483" width="1" height="3" fill="#7E8C9C"/>
<rect x="45" y="489" width="1" height="3" fill="#7E8C9C"/>
<rect x="45" y="495" width="1" height="3" fill="#7E8C9C"/>
<rect x="45" y="501" width="1" height="3" fill="#7E8C9C"/>
<rect x="45" y="507" width="1" height="3" fill="#7E8C9C"/>
<rect x="45" y="513" width="1" height="3" fill="#7E8C9C"/>
<rect x="45" y="519" width="1" height="3" fill="#7E8C9C"/>
<rect x="45" y="525" width="1" height="3" fill="#7E8C9C"/>
<rect x="45" y="531" width="1" height="3" fill="#7E8C9C"/>
<rect x="45" y="537" width="1" height="3" fill="#7E8C9C"/>
<rect x="45" y="543" width="1" height="3" fill="#7E8C9C"/>
<rect x="45" y="549" width="1" height="2" fill="#7E8C9C"/>
<rect x="77" y="34" width="1" height="2" fill="#7E8C9C"/>
<rect x="77" y="39" width="1" height="3" fill="#7E8C9C"/>
<rect x="77" y="45" width="1" height="3" fill="#7E8C9C"/>
<rect x="77" y="51" width="1" height="3" fill="#7E8C9C"/>
<rect x="77" y="57" width="1" height="3" fill="#7E8C9C"/>
<rect x="77" y="63" width="1" height="3" fill="#7E8C9C"/>
<rect x="77" y="69" width="1" height="3" fill="#7E8C9C"/>
<rect x="77" y="75" width="1" height="3" fill="#7E8C9C"/>
<rect x="77" y="81" width="1" height="3" fill="#7E8C9C"/>
<rect x="77" y="87" width="1" height="3" fill="#7E8C9C"/>
<rect x="77" y="93" width="1" height="3" fill="#7E8C9C"/>
<rect x="77" y="99" width="1" height="3" fill="#7E8C9C"/>
<rect x="77" y="105" width="1" height="3" fill="#7E8C9C"/>
<rect x="77" y="111" width="1" height="3" fill="#7E8C9C"/>
<rect x="77" y="117" width="1" height="3" fill="#7E8C9C"/>
<rect x="77" y="123" width="1" height="3" fill="#7E8C9C"/>
<rect x="77" y="129" width="1" height="3" fill="#7E8C9C"/>
<rect x="77" y="135" width="1" height="3" fill="#7E8C9C"/>
<rect x="77" y="141" width="1" height="3" fill="#7E8C9C"/>
<rect x="77" y="147" width="1" height="3" fill="#7E8C9C"/>
<rect x="77" y="153" width="1" height="3" fill="#7E8C9C"/>
<rect x="77" y="159" width="1" height="3" fill="#7E8C9C"/>
<rect x="77" y="165" width="1" height="3" fill="#7E8C9C"/>
<rect x="77" y="171" width="1" height="3" fill="#7E8C9C"/>
<rect x="77" y="177" width="1" height="3" fill="#7E8C9C"/>
<rect x="77" y="183" width="1" height="3" fill="#7E8C9C"/>
<rect x="77" y="189" width="1" height="3" fill="#7E8C9C"/>
<rect x="77" y="195" width="1" height="3" fill="#7E8C9C"/>
<rect x="77" y="201" width="1" height="3" fill="#7E8C9C"/>
<rect x="77" y="207" width="1" height="3" fill="#7E8C9C"/>
<rect x="77" y="213" width="1" height="3" fill="#7E8C9C"/>
<rect x="77" y="219" width="1" height="3" fill="#7E8C9C"/>
<rect x="77" y="225" width="1" height="3" fill="#7E8C9C"/>
<rect x="77" y="231" width="1" height="3" fill="#7E8C9C"/>
<rect x="77" y="237" width="1" height="3" fill="#7E8C9C"/>
<rect x="77" y="243" width="1" height="3" fill="#7E8C9C"/>
<rect x="77" y="249" width="1" height="3" fill="#7E8C9C"/>
<rect x="77" y="255" width="1" height="3" fill="#7E8C9C"/>
<rect x="77" y="261" width="1" height="3" fill="#7E8C9C"/>
<rect x="77" y="267" width="1" height="3" fill="#7E8C9C"/>
<rect x="77" y="273" width="1" height="3" fill="#7E8C9C"/>
<rect x="77" y="279" width="1" height="3" fill="#7E8C9C"/>
<rect x="77" y="285" width="1" height="3" fill="#7E8C9C"/>
<rect x="77" y="291" width="1" height="3" fill="#7E8C9C"/>
<rect x="77" y="297" width="1" height="3" fill="#7E8C9C"/>
<rect x="77" y="303" width="1" height="3" fill="#7E8C9C"/>
<rect x="77" y="309" width="1" height="3" fill="#7E8C9C"/>
<rect x="77" y="315" width="1" height="3" fill="#7E8C9C"/>
<rect x="77" y="321" width="1" height="3" fill="#7E8C9C"/>
<rect x="77" y="327" width="1" height="3" fill="#7E8C9C"/>
<rect x="77" y="333" width="1" height="3" fill="#7E8C9C"/>
<rect x="77" y="339" width="1" height="3" fill="#7E8C9C"/>
<rect x="77" y="345" width="1" height="3" fill="#7E8C9C"/>
<rect x="77" y="351" width="1" height="3" fill="#7E8C9C"/>
<rect x="77" y="357" width="1" height="3" fill="#7E8C9C"/>
<rect x="77" y="363" width="1" height="3" fill="#7E8C9C"/>
<rect x="77" y="369" width="1" height="3" fill="#7E8C9C"/>
<rect x="77" y="375" width="1" height="3" fill="#7E8C9C"/>
<rect x="77" y="381" width="1" height="3" fill="#7E8C9C"/>
<rect x="77" y="387" width="1" height="3" fill="#7E8C9C"/>
<rect x="77" y="393" width="1" height="3" fill="#7E8C9C"/>
<rect x="77" y="399" width="1" height="3" fill="#7E8C9C"/>
<rect x="77" y="405" width="1" height="3" fill="#7E8C9C"/>
<rect x="77" y="411" width="1" height="3" fill="#7E8C9C"/>
<rect x="77" y="417" width="1" height="3" fill="#7E8C9C"/>
<rect x="77" y="423" width="1" height="3" fill="#7E8C9C"/>
<rect x="77" y="429" width="1" height="3" fill="#7E8C9C"/>
<rect x="77" y="435" width="1" height="3" fill="#7E8C9C"/>
<rect x="77" y="441" width="1" height="3" fill="#7E8C9C"/>
<rect x="77" y="447" width="1" height="3" fill="#7E8C9C"/>
<rect x="77" y="453" width="1" height="3" fill="#7E8C9C"/>
<rect x="77" y="459" width="1" height="3" fill="#7E8C9C"/>
<rect x="77" y="465" width="1" height="3" fill="#7E8C9C"/>
<rect x="77" y="471" width="1" height="3" fill="#7E8C9C"/>
<rect x="77" y="477" width="1" height="3" fill="#7E8C9C"/>
<rect x="77" y="483" width="1" height="3" fill="#7E8C9C"/>
<rect x="77" y="489" width="1" height="3" fill="#7E8C9C"/>
<rect x="77" y="495" width="1" height="3" fill="#7E8C9C"/>
<rect x="77" y="501" width="1" height="3" fill="#7E8C9C"/>
<rect x="77" y="507" width="1" height="3" fill="#7E8C9C"/>
<rect x="77" y="513" width="1" height="3" fill="#7E8C9C"/>
<rect x="77" y="519" width="1" height="3" fill="#7E8C9C"/>
<rect x="77" y="525" width="1" height="3" fill="#7E8C9C"/>
<rect x="77" y="531" width="1" height="3" fill="#7E8C9C"/>
<rect x="77" y="537" width="1" height="3" fill="#7E8C9C"/>
<rect x="77" y="543" width="1" height="3" fill="#7E8C9C"/>
<rect x="77" y="549" width="1" height="2" fill="#7E8C9C"/>
<rect x="109" y="34" width="1" height="2" fill="#7E8C9C"/>
<rect x="109" y="39" width="1" height="3" fill="#7E8C9C"/>
<rect x="109" y="45" width="1" height="3" fill="#7E8C9C"/>
<rect x="109" y="51" width="1" height="3" fill="#7E8C9C"/>
<rect x="109" y="57" width="1" height="3" fill="#7E8C9C"/>
<rect x="109" y="63" width="1" height="3" fill="#7E8C9C"/>
<rect x="109" y="69" width="1" height="3" fill="#7E8C9C"/>
<rect x="109" y="75" width="1" height="3" fill="#7E8C9C"/>
<rect x="109" y="81" width="1" height="3" fill="#7E8C9C"/>
<rect x="109" y="87" width="1" height="3" fill="#7E8C9C"/>
<rect x="109" y="93" width="1" height="3" fill="#7E8C9C"/>
<rect x="109" y="99" width="1" height="3" fill="#7E8C9C"/>
<rect x="109" y="105" width="1" height="3" fill="#7E8C9C"/>
<rect x="109" y="111" width="1" height="3" fill="#7E8C9C"/>
<rect x="109" y="117" width="1" height="3" fill="#7E8C9C"/>
<rect x="109" y="123" width="1" height="3" fill="#7E8C9C"/>
<rect x="109" y="129" width="1" height="3" fill="#7E8C9C"/>
<rect x="109" y="135" width="1" height="3" fill="#7E8C9C"/>
<rect x="109" y="141" width="1" height="3" fill="#7E8C9C"/>
<rect x="109" y="147" width="1" height="3" fill="#7E8C9C"/>
<rect x="109" y="153" width="1" height="3" fill="#7E8C9C"/>
<rect x="109" y="159" width="1" height="3" fill="#7E8C9C"/>
<rect x="109" y="165" width="1" height="3" fill="#7E8C9C"/>
<rect x="109" y="171" width="1" height="3" fill="#7E8C9C"/>
<rect x="109" y="177" width="1" height="3" fill="#7E8C9C"/>
<rect x="109" y="183" width="1" height="3" fill="#7E8C9C"/>
<rect x="109" y="189" width="1" height="3" fill="#7E8C9C"/>
<rect x="109" y="195" width="1" height="3" fill="#7E8C9C"/>
<rect x="109" y="201" width="1" height="3" fill="#7E8C9C"/>
<rect x="109" y="207" width="1" height="3" fill="#7E8C9C"/>
<rect x="109" y="213" width="1" height="3" fill="#7E8C9C"/>
<rect x="109" y="219" width="1" height="3" fill="#7E8C9C"/>
<rect x="109" y="225" width="1" height="3" fill="#7E8C9C"/>
<rect x="109" y="231" width="1" height="3" fill="#7E8C9C"/>
<rect x="109" y="237" width="1" height="3" fill="#7E8C9C"/>
<rect x="109" y="243" width="1" height="3" fill="#7E8C9C"/>
<rect x="109" y="249" width="1" height="3" fill="#7E8C9C"/>
<rect x="109" y="255" width="1" height="3" fill="#7E8C9C"/>
<rect x="109" y="261" width="1" height="3" fill="#7E8C9C"/>
<rect x="109" y="267" width="1" height="3" fill="#7E8C9C"/>
<rect x="109" y="273" width="1" height="3" fill="#7E8C9C"/>
<rect x="109" y="279" width="1" height="3" fill="#7E8C9C"/>
<rect x="109" y="285" width="1" height="3" fill="#7E8C9C"/>
<rect x="109" y="291" width="1" height="3" fill="#7E8C9C"/>
<rect x="109" y="297" width="1" height="3" fill="#7E8C9C"/>
<rect x="109" y="303" width="1" height="3" fill="#7E8C9C"/>
<rect x="109" y="309" width="1" height="3" fill="#7E8C9C"/>
<rect x="109" y="315" width="1" height="3" fill="#7E8C9C"/>
<rect x="109" y="321" width="1" height="3" fill="#7E8C9C"/>
<rect x="109" y="327" width="1" height="3" fill="#7E8C9C"/>
<rect x="109" y="333" width="1" height="3" fill="#7E8C9C"/>
<rect x="109" y="339" width="1" height="3" fill="#7E8C9C"/>
<rect x="109" y="345" width="1" height="3" fill="#7E8C9C"/>
<rect x="109" y="351" width="1" height="3" fill="#7E8C9C"/>
<rect x="109" y="357" width="1" height="3" fill="#7E8C9C"/>
<rect x="109" y="363" width="1" height="3" fill="#7E8C9C"/>
<rect x="109" y="369" width="1" height="3" fill="#7E8C9C"/>
<rect x="109" y="375" width="1" height="3" fill="#7E8C9C"/>
<rect x="109" y="381" width="1" height="3" fill="#7E8C9C"/>
<rect x="109" y="387" width="1" height="3" fill="#7E8C9C"/>
<rect x="109" y="393" width="1" height="3" fill="#7E8C9C"/>
<rect x="109" y="399" width="1" height="3" fill="#7E8C9C"/>
<rect x="109" y="405" width="1" height="3" fill="#7E8C9C"/>
<rect x="109" y="411" width="1" height="3" fill="#7E8C9C"/>
<rect x="109" y="417" width="1" height="3" fill="#7E8C9C"/>
<rect x="109" y="423" width="1" height="3" fill="#7E8C9C"/>
<rect x="109" y="429" width="1" height="3" fill="#7E8C9C"/>
<rect x="109" y="435" width="1" height="3" fill="#7E8C9C"/>
<rect x="109" y="441" width="1" height="3" fill="#7E8C9C"/>
<rect x="109" y="447" width="1" height="3" fill="#7E8C9C"/>
<rect x="109" y="453" width="1" height="3" fill="#7E8C9C"/>
<rect x="109" y="459" width="1" height="3" fill="#7E8C9C"/>
<rect x="109" y="465" width="1" height="3" fill="#7E8C9C"/>
<rect x="109" y="471" width="1" height="3" fill="#7E8C9C"/>
<rect x="109" y="477" width="1" height="3" fill="#7E8C9C"/>
<rect x="109" y="483" width="1" height="3" fill="#7E8C9C"/>
<rect x="109" y="489" width="1" height="3" fill="#7E8C9C"/>
<rect x="109" y="495" width="1" height="3" fill="#7E8C9C"/>
<rect x="109" y="501" width="1" height="3" fill="#7E8C9C"/>
<rect x="109" y="507" width="1" height="3" fill="#7E8C9C"/>
<rect x="109" y="513" width="1" height="3" fill="#7E8C9C"/>
<rect x="109" y="519" width="1" height="3" fill="#7E8C9C"/>
<rect x="109" y="525" width="1" height="3" fill="#7E8C9C"/>
<rect x="109" y="531" width="1" height="3" fill="#7E8C9C"/>
<rect x="109" y="537" width="1" height="3" fill="#7E8C9C"/>
<rect x="109" y="543" width="1" height="3" fill="#7E8C9C"/>
<rect x="109" y="549" width="1" height="2" fill="#7E8C9C"/>
<rect x="141" y="34" width="1" height="2" fill="#7E8C9C"/>
<rect x="141" y="39" width="1" height="3" fill="#7E8C9C"/>
<rect x="141" y="45" width="1" height="3" fill="#7E8C9C"/>
<rect x="141" y="51" width="1" height="3" fill="#7E8C9C"/>
<rect x="141" y="57" width="1" height="3" fill="#7E8C9C"/>
<rect x="141" y="63" width="1" height="3" fill="#7E8C9C"/>
<rect x="141" y="69" width="1" height="3" fill="#7E8C9C"/>
<rect x="141" y="75" width="1" height="3" fill="#7E8C9C"/>
<rect x="141" y="81" width="1" height="3" fill="#7E8C9C"/>
<rect x="141" y="87" width="1" height="3" fill="#7E8C9C"/>
<rect x="141" y="93" width="1" height="3" fill="#7E8C9C"/>
<rect x="141" y="99" width="1" height="3" fill="#7E8C9C"/>
<rect x="141" y="105" width="1" height="3" fill="#7E8C9C"/>
<rect x="141" y="111" width="1" height="3" fill="#7E8C9C"/>
<rect x="141" y="117" width="1" height="3" fill="#7E8C9C"/>
<rect x="141" y="123" width="1" height="3" fill="#7E8C9C"/>
<rect x="141" y="129" width="1" height="3" fill="#7E8C9C"/>
<rect x="141" y="135" width="1" height="3" fill="#7E8C9C"/>
<rect x="141" y="141" width="1" height="3" fill="#7E8C9C"/>
<rect x="141" y="147" width="1" height="3" fill="#7E8C9C"/>
<rect x="141" y="153" width="1" height="3" fill="#7E8C9C"/>
<rect x="141" y="159" width="1" height="3" fill="#7E8C9C"/>
<rect x="141" y="165" width="1" height="3" fill="#7E8C9C"/>
<rect x="141" y="171" width="1" height="3" fill="#7E8C9C"/>
<rect x="141" y="177" width="1" height="3" fill="#7E8C9C"/>
<rect x="141" y="183" width="1" height="3" fill="#7E8C9C"/>
<rect x="141" y="189" width="1" height="3" fill="#7E8C9C"/>
<rect x="141" y="195" width="1" height="3" fill="#7E8C9C"/>
<rect x="141" y="201" width="1" height="3" fill="#7E8C9C"/>
<rect x="141" y="207" width="1" height="3" fill="#7E8C9C"/>
<rect x="141" y="213" width="1" height="3" fill="#7E8C9C"/>
<rect x="141" y="219" width="1" height="3" fill="#7E8C9C"/>
<rect x="141" y="225" width="1" height="3" fill="#7E8C9C"/>
<rect x="141" y="231" width="1" height="3" fill="#7E8C9C"/>
<rect x="141" y="237" width="1" height="3" fill="#7E8C9C"/>
<rect x="141" y="243" width="1" height="3" fill="#7E8C9C"/>
<rect x="141" y="249" width="1" height="3" fill="#7E8C9C"/>
<rect x="141" y="255" width="1" height="3" fill="#7E8C9C"/>
<rect x="141" y="261" width="1" height="3" fill="#7E8C9C"/>
<rect x="141" y="267" width="1" height="3" fill="#7E8C9C"/>
<rect x="141" y="273" width="1" height="3" fill="#7E8C9C"/>
<rect x="141" y="279" width="1" height="3" fill="#7E8C9C"/>
<rect x="141" y="285" width="1" height="3" fill="#7E8C9C"/>
<rect x="141" y="291" width="1" height="3" fill="#7E8C9C"/>
<rect x="141" y="297" width="1" height="3" fill="#7E8C9C"/>
<rect x="141" y="303" width="1" height="3" fill="#7E8C9C"/>
<rect x="141" y="309" width="1" height="3" fill="#7E8C9C"/>
<rect x="141" y="315" width="1" height="3" fill="#7E8C9C"/>
<rect x="141" y="321" width="1" height="3" fill="#7E8C9C"/>
<rect x="141" y="327" width="1" height="3" fill="#7E8C9C"/>
<rect x="141" y="333" width="1" height="3" fill="#7E8C9C"/>
<rect x="141" y="339" width="1" height="3" fill="#7E8C9C"/>
<rect x="141" y="345" width="1" height="3" fill="#7E8C9C"/>
<rect x="141" y="351" width="1" height="3" fill="#7E8C9C"/>
<rect x="141" y="357" width="1" height="3" fill="#7E8C9C"/>
<rect x="141" y="363" width="1" height="3" fill="#7E8C9C"/>
<rect x="141" y="369" width="1" height="3" fill="#7E8C9C"/>
<rect x="141" y="375" width="1" height="3" fill="#7E8C9C"/>
<rect x="141" y="381" width="1" height="3" fill="#7E8C9C"/>
<rect x="141" y="387" width="1" height="3" fill="#7E8C9C"/>
<rect x="141" y="393" width="1" height="3" fill="#7E8C9C"/>
<rect x="141" y="399" width="1" height="3" fill="#7E8C9C"/>
<rect x="141" y="405" width="1" height="3" fill="#7E8C9C"/>
<rect x="141" y="411" width="1" height="3" fill="#7E8C9C"/>
<rect x="141" y="417" width="1" height="3" fill="#7E8C9C"/>
<rect x="141" y="423" width="1" height="3" fill="#7E8C9C"/>
<rect x="141" y="429" width="1" height="3" fill="#7E8C9C"/>
<rect x="141" y="435" width="1" height="3" fill="#7E8C9C"/>
<rect x="141" y="441" width="1" height="3" fill="#7E8C9C"/>
<rect x="141" y="447" width="1" height="3" fill="#7E8C9C"/>
<rect x="141" y="453" width="1" height="3" fill="#7E8C9C"/>
<rect x="141" y="459" width="1" height="3" fill="#7E8C9C"/>
<rect x="141" y="465" width="1" height="3" fill="#7E8C9C"/>
<rect x="141" y="471" width="1" height="3" fill="#7E8C9C"/>
<rect x="141" y="477" width="1" height="3" fill="#7E8C9C"/>
<rect x="141" y="483" width="1" height="3" fill="#7E8C9C"/>
<rect x="141" y="489" width="1" height="3" fill="#7E8C9C"/>
<rect x="141" y="495" width="1" height="3" fill="#7E8C9C"/>
<rect x="141" y="501" width="1" height="3" fill="#7E8C9C"/>
<rect x="141" y="507" width="1" height="3" fill="#7E8C9C"/>
<rect x="141" y="513" width="1" height="3" fill="#7E8C9C"/>
<rect x="141" y="519" width="1" height="3" fill="#7E8C9C"/>
<rect x="141" y="525" width="1" height="3" fill="#7E8C9C"/>
<rect x="141" y="531" width="1" height="3" fill="#7E8C9C"/>
<rect x="141" y="537" width="1" height="3" fill="#7E8C9C"/>
<rect x="141" y="543" width="1" height="3" fill="#7E8C9C"/>
<rect x="141" y="549" width="1" height="2" fill="#7E8C9C"/>
<rect x="173" y="34" width="1" height="2" fill="#7E8C9C"/>
<rect x="173" y="39" width="1" height="3" fill="#7E8C9C"/>
<rect x="173" y="45" width="1" height="3" fill="#7E8C9C"/>
<rect x="173" y="51" width="1" height="3" fill="#7E8C9C"/>
<rect x="173" y="57" width="1" height="3" fill="#7E8C9C"/>
<rect x="173" y="63" width="1" height="3" fill="#7E8C9C"/>
<rect x="173" y="69" width="1" height="3" fill="#7E8C9C"/>
<rect x="173" y="75" width="1" height="3" fill="#7E8C9C"/>
<rect x="173" y="81" width="1" height="3" fill="#7E8C9C"/>
<rect x="173" y="87" width="1" height="3" fill="#7E8C9C"/>
<rect x="173" y="93" width="1" height="3" fill="#7E8C9C"/>
<rect x="173" y="99" width="1" height="3" fill="#7E8C9C"/>
<rect x="173" y="105" width="1" height="3" fill="#7E8C9C"/>
<rect x="173" y="111" width="1" height="3" fill="#7E8C9C"/>
<rect x="173" y="117" width="1" height="3" fill="#7E8C9C"/>
<rect x="173" y="123" width="1" height="3" fill="#7E8C9C"/>
<rect x="173" y="129" width="1" height="3" fill="#7E8C9C"/>
<rect x="173" y="135" width="1" height="3" fill="#7E8C9C"/>
<rect x="173" y="141" width="1" height="3" fill="#7E8C9C"/>
<rect x="173" y="147" width="1" height="3" fill="#7E8C9C"/>
<rect x="173" y="153" width="1" height="3" fill="#7E8C9C"/>
<rect x="173" y="159" width="1" height="3" fill="#7E8C9C"/>
<rect x="173" y="165" width="1" height="3" fill="#7E8C9C"/>
<rect x="173" y="171" width="1" height="3" fill="#7E8C9C"/>
<rect x="173" y="177" width="1" height="3" fill="#7E8C9C"/>
<rect x="173" y="183" width="1" height="3" fill="#7E8C9C"/>
<rect x="173" y="189" width="1" height="3" fill="#7E8C9C"/>
<rect x="173" y="195" width="1" height="3" fill="#7E8C9C"/>
<rect x="173" y="201" width="1" height="3" fill="#7E8C9C"/>
<rect x="173" y="207" width="1" height="3" fill="#7E8C9C"/>
<rect x="173" y="213" width="1" height="3" fill="#7E8C9C"/>
<rect x="173" y="219" width="1" height="3" fill="#7E8C9C"/>
<rect x="173" y="225" width="1" height="3" fill="#7E8C9C"/>
<rect x="173" y="231" width="1" height="3" fill="#7E8C9C"/>
<rect x="173" y="237" width="1" height="3" fill="#7E8C9C"/>
<rect x="173" y="243" width="1" height="3" fill="#7E8C9C"/>
<rect x="173" y="249" width="1" height="3" fill="#7E8C9C"/>
<rect x="173" y="255" width="1" height="3" fill="#7E8C9C"/>
<rect x="173" y="261" width="1" height="3" fill="#7E8C9C"/>
<rect x="173" y="267" width="1" height="3" fill="#7E8C9C"/>
<rect x="173" y="273" width="1" height="3" fill="#7E8C9C"/>
<rect x="173" y="279" width="1" height="3" fill="#7E8C9C"/>
<rect x="173" y="285" width="1" height="3" fill="#7E8C9C"/>
<rect x="173" y="291" width="1" height="3" fill="#7E8C9C"/>
<rect x="173" y="297" width="1" height="3" fill="#7E8C9C"/>
<rect x="173" y="303" width="1" height="3" fill="#7E8C9C"/>
<rect x="173" y="309" width="1" height="3" fill="#7E8C9C"/>
<rect x="173" y="315" width="1" height="3" fill="#7E8C9C"/>
<rect x="173" y="321" width="1" height="3" fill="#7E8C9C"/>
<rect x="173" y="327" width="1" height="3" fill="#7E8C9C"/>
<rect x="173" y="333" width="1" height="3" fill="#7E8C9C"/>
<rect x="173" y="339" width="1" height="3" fill="#7E8C9C"/>
<rect x="173" y="345" width="1" height="3" fill="#7E8C9C"/>
<rect x="173" y="351" width="1" height="3" fill="#7E8C9C"/>
<rect x="173" y="357" width="1" height="3" fill="#7E8C9C"/>
<rect x="173" y="363" width="1" height="3" fill="#7E8C9C"/>
<rect x="173" y="369" width="1" height="3" fill="#7E8C9C"/>
<rect x="173" y="375" width="1" height="3" fill="#7E8C9C"/>
<rect x="173" y="381" width="1" height="3" fill="#7E8C9C"/>
<rect x="173" y="387" width="1" height="3" fill="#7E8C9C"/>
<rect x="173" y="393" width="1" height="3" fill="#7E8C9C"/>
<rect x="173" y="399" width="1" height="3" fill="#7E8C9C"/>
<rect x="173" y="405" width="1" height="3" fill="#7E8C9C"/>
<rect x="173" y="411" width="1" height="3" fill="#7E8C9C"/>
<rect x="173" y="417" width="1" height="3" fill="#7E8C9C"/>
<rect x="173" y="423" width="1" height="3" fill="#7E8C9C"/>
<rect x="173" y="429" width="1" height="3" fill="#7E8C9C"/>
<rect x="173" y="435" width="1" height="3" fill="#7E8C9C"/>
<rect x="173" y="441" width="1" height="3" fill="#7E8C9C"/>
<rect x="173" y="447" width="1" height="3" fill="#7E8C9C"/>
<rect x="173" y="453" width="1" height="3" fill="#7E8C9C"/>
<rect x="173" y="459" width="1" height="3" fill="#7E8C9C"/>
<rect x="173" y="465" width="1" height="3" fill="#7E8C9C"/>
<rect x="173" y="471" width="1" height="3" fill="#7E8C9C"/>
<rect x="173" y="477" width="1" height="3" fill="#7E8C9C"/>
<rect x="173" y="483" width="1" height="3" fill="#7E8C9C"/>
<rect x="173" y="489" width="1" height="3" fill="#7E8C9C"/>
<rect x="173" y="495" width="1" height="3" fill="#7E8C9C"/>
<rect x="173" y="501" width="1" height="3" fill="#7E8C9C"/>
<rect x="173" y="507" width="1" height="3" fill="#7E8C9C"/>
<rect x="173" y="513" width="1" height="3" fill="#7E8C9C"/>
<rect x="173" y="519" width="1" height="3" fill="#7E8C9C"/>
<rect x="173" y="525" width="1" height="3" fill="#7E8C9C"/>
<rect x="173" y="531" width="1" height="3" fill="#7E8C9C"/>
<rect x="173" y="537" width="1" height="3" fill="#7E8C9C"/>
<rect x="173" y="543" width="1" height="3" fill="#7E8C9C"/>
<rect x="173" y="549" width="1" height="2" fill="#7E8C9C"/>
<rect x="205" y="34" width="1" height="2" fill="#7E8C9C"/>
<rect x="205" y="39" width="1" height="3" fill="#7E8C9C"/>
<rect x="205" y="45" width="1" height="3" fill="#7E8C9C"/>
<rect x="205" y="51" width="1" height="3" fill="#7E8C9C"/>
<rect x="205" y="57" width="1" height="3" fill="#7E8C9C"/>
<rect x="205" y="63" width="1" height="3" fill="#7E8C9C"/>
<rect x="205" y="69" width="1" height="3" fill="#7E8C9C"/>
<rect x="205" y="75" width="1" height="3" fill="#7E8C9C"/>
<rect x="205" y="81" width="1" height="3" fill="#7E8C9C"/>
<rect x="205" y="87" width="1" height="3" fill="#7E8C9C"/>
<rect x="205" y="93" width="1" height="3" fill="#7E8C9C"/>
<rect x="205" y="99" width="1" height="3" fill="#7E8C9C"/>
<rect x="205" y="105" width="1" height="3" fill="#7E8C9C"/>
<rect x="205" y="111" width="1" height="3" fill="#7E8C9C"/>
<rect x="205" y="117" width="1" height="3" fill="#7E8C9C"/>
<rect x="205" y="123" width="1" height="3" fill="#7E8C9C"/>
<rect x="205" y="129" width="1" height="3" fill="#7E8C9C"/>
<rect x="205" y="135" width="1" height="3" fill="#7E8C9C"/>
<rect x="205" y="141" width="1" height="3" fill="#7E8C9C"/>
<rect x="205" y="147" width="1" height="3" fill="#7E8C9C"/>
<rect x="205" y="153" width="1" height="3" fill="#7E8C9C"/>
<rect x="205" y="159" width="1" height="3" fill="#7E8C9C"/>
<rect x="205" y="165" width="1" height="3" fill="#7E8C9C"/>
<rect x="205" y="171" width="1" height="3" fill="#7E8C9C"/>
<rect x="205" y="177" width="1" height="3" fill="#7E8C9C"/>
<rect x="205" y="183" width="1" height="3" fill="#7E8C9C"/>
<rect x="205" y="189" width="1" height="3" fill="#7E8C9C"/>
<rect x="205" y="195" width="1" height="3" fill="#7E8C9C"/>
<rect x="205" y="201" width="1" height="3" fill="#7E8C9C"/>
<rect x="205" y="207" width="1" height="3" fill="#7E8C9C"/>
<rect x="205" y="213" width="1" height="3" fill="#7E8C9C"/>
<rect x="205" y="219" width="1" height="3" fill="#7E8C9C"/>
<rect x="205" y="225" width="1" height="3" fill="#7E8C9C"/>
<rect x="205" y="231" width="1" height="3" fill="#7E8C9C"/>
<rect x="205" y="237" width="1" height="3" fill="#7E8C9C"/>
<rect x="205" y="243" width="1" height="3" fill="#7E8C9C"/>
<rect x="205" y="249" width="1" height="3" fill="#7E8C9C"/>
<rect x="205" y="255" width="1" height="3" fill="#7E8C9C"/>
<rect x="205" y="261" width="1" height="3" fill="#7E8C9C"/>
<rect x="205" y="267" width="1" height="3" fill="#7E8C9C"/>
<rect x="205" y="273" width="1" height="3" fill="#7E8C9C"/>
<rect x="205" y="279" width="1" height="3" fill="#7E8C9C"/>
<rect x="205" y="285" width="1" height="3" fill="#7E8C9C"/>
<rect x="205" y="291" width="1" height="3" fill="#7E8C9C"/>
<rect x="205" y="297" width="1" height="3" fill="#7E8C9C"/>
<rect x="205" y="303" width="1" height="3" fill="#7E8C9C"/>
<rect x="205" y="309" width="1" height="3" fill="#7E8C9C"/>
<rect x="205" y="315" width="1" height="3" fill="#7E8C9C"/>
<rect x="205" y="321" width="1" height="3" fill="#7E8C9C"/>
<rect x="205" y="327" width="1" height="3" fill="#7E8C9C"/>
<rect x="205" y="333" width="1" height="3" fill="#7E8C9C"/>
<rect x="205" y="339" width="1" height="3" fill="#7E8C9C"/>
<rect x="205" y="345" width="1" height="3" fill="#7E8C9C"/>
<rect x="205" y="351" width="1" height="3" fill="#7E8C9C"/>
<rect x="205" y="357" width="1" height="3" fill="#7E8C9C"/>
<rect x="205" y="363" width="1" height="3" fill="#7E8C9C"/>
<rect x="205" y="369" width="1" height="3" fill="#7E8C9C"/>
<rect x="205" y="375" width="1" height="3" fill="#7E8C9C"/>
<rect x="205" y="381" width="1" height="3" fill="#7E8C9C"/>
<rect x="205" y="387" width="1" height="3" fill="#7E8C9C"/>
<rect x="205" y="393" width="1" height="3" fill="#7E8C9C"/>
<rect x="205" y="399" width="1" height="3" fill="#7E8C9C"/>
<rect x="205" y="405" width="1" height="3" fill="#7E8C9C"/>
<rect x="205" y="411" width="1" height="3" fill="#7E8C9C"/>
<rect x="205" y="417" width="1" height="3" fill="#7E8C9C"/>
<rect x="205" y="423" width="1" height="3" fill="#7E8C9C"/>
<rect x="205" y="429" width="1" height="3" fill="#7E8C9C"/>
<rect x="205" y="435" width="1" height="3" fill="#7E8C9C"/>
<rect x="205" y="441" width="1" height="3" fill="#7E8C9C"/>
<rect x="205" y="447" width="1" height="3" fill="#7E8C9C"/>
<rect x="205" y="453" width="1" height="3" fill="#7E8C9C"/>
<rect x="205" y="459" width="1" height="3" fill="#7E8C9C"/>
<rect x="205" y="465" width="1" height="3" fill="#7E8C9C"/>
<rect x="205" y="471" width="1" height="3" fill="#7E8C9C"/>
<rect x="205" y="477" width="1" height="3" fill="#7E8C9C"/>
<rect x="205" y="483" width="1" height="3" fill="#7E8C9C"/>
<rect x="205" y="489" width="1" height="3" fill="#7E8C9C"/>
<rect x="205" y="495" width="1" height="3" fill="#7E8C9C"/>
<rect x="205" y="501" width="1" height="3" fill="#7E8C9C"/>
<rect x="205" y="507" width="1" height="3" fill="#7E8C9C"/>
<rect x="205" y="513" width="1" height="3" fill="#7E8C9C"/>
<rect x="205" y="519" width="1" height="3" fill="#7E8C9C"/>
<rect x="205" y="525" width="1" height="3" fill="#7E8C9C"/>
<rect x="205" y="531" width="1" height="3" fill="#7E8C9C"/>
<rect x="205" y="537" width="1" height="3" fill="#7E8C9C"/>
<rect x="205" y="543" width="1" height="3" fill="#7E8C9C"/>
<rect x="205" y="549" width="1" height="2" fill="#7E8C9C"/>
<rect x="237" y="34" width="1" height="2" fill="#7E8C9C"/>
<rect x="237" y="39" width="1" height="3" fill="#7E8C9C"/>
<rect x="237" y="45" width="1" height="3" fill="#7E8C9C"/>
<rect x="237" y="51" width="1" height="3" fill="#7E8C9C"/>
<rect x="237" y="57" width="1" height="3" fill="#7E8C9C"/>
<rect x="237" y="63" width="1" height="3" fill="#7E8C9C"/>
<rect x="237" y="69" width="1" height="3" fill="#7E8C9C"/>
<rect x="237" y="75" width="1" height="3" fill="#7E8C9C"/>
<rect x="237" y="81" width="1" height="3" fill="#7E8C9C"/>
<rect x="237" y="87" width="1" height="3" fill="#7E8C9C"/>
<rect x="237" y="93" width="1" height="3" fill="#7E8C9C"/>
<rect x="237" y="99" width="1" height="3" fill="#7E8C9C"/>
<rect x="237" y="105" width="1" height="3" fill="#7E8C9C"/>
<rect x="237" y="111" width="1" height="3" fill="#7E8C9C"/>
<rect x="237" y="117" width="1" height="3" fill="#7E8C9C"/>
<rect x="237" y="123" width="1" height="3" fill="#7E8C9C"/>
<rect x="237" y="129" width="1" height="3" fill="#7E8C9C"/>
<rect x="237" y="135" width="1" height="3" fill="#7E8C9C"/>
<rect x="237" y="141" width="1" height="3" fill="#7E8C9C"/>
<rect x="237" y="147" width="1" height="3" fill="#7E8C9C"/>
<rect x="237" y="153" width="1" height="3" fill="#7E8C9C"/>
<rect x="237" y="159" width="1" height="3" fill="#7E8C9C"/>
<rect x="237" y="165" width="1" height="3" fill="#7E8C9C"/>
<rect x="237" y="171" width="1" height="3" fill="#7E8C9C"/>
<rect x="237" y="177" width="1" height="3" fill="#7E8C9C"/>
<rect x="237" y="183" width="1" height="3" fill="#7E8C9C"/>
<rect x="237" y="189" width="1" height="3" fill="#7E8C9C"/>
<rect x="237" y="195" width="1" height="3" fill="#7E8C9C"/>
<rect x="237" y="201" width="1" height="3" fill="#7E8C9C"/>
<rect x="237" y="207" width="1" height="3" fill="#7E8C9C"/>
<rect x="237" y="213" width="1" height="3" fill="#7E8C9C"/>
<rect x="237" y="219" width="1" height="3" fill="#7E8C9C"/>
<rect x="237" y="225" width="1" height="3" fill="#7E8C9C"/>
<rect x="237" y="231" width="1" height="3" fill="#7E8C9C"/>
<rect x="237" y="237" width="1" height="3" fill="#7E8C9C"/>
<rect x="237" y="243" width="1" height="3" fill="#7E8C9C"/>
<rect x="237" y="249" width="1" height="3" fill="#7E8C9C"/>
<rect x="237" y="255" width="1" height="3" fill="#7E8C9C"/>
<rect x="237" y="261" width="1" height="3" fill="#7E8C9C"/>
<rect x="237" y="267" width="1" height="3" fill="#7E8C9C"/>
<rect x="237" y="273" width="1" height="3" fill="#7E8C9C"/>
<rect x="237" y="279" width="1" height="3" fill="#7E8C9C"/>
<rect x="237" y="285" width="1" height="3" fill="#7E8C9C"/>
<rect x="237" y="291" width="1" height="3" fill="#7E8C9C"/>
<rect x="237" y="297" width="1" height="3" fill="#7E8C9C"/>
<rect x="237" y="303" width="1" height="3" fill="#7E8C9C"/>
<rect x="237" y="309" width="1" height="3" fill="#7E8C9C"/>
<rect x="237" y="315" width="1" height="3" fill="#7E8C9C"/>
<rect x="237" y="321" width="1" height="3" fill="#7E8C9C"/>
<rect x="237" y="327" width="1" height="3" fill="#7E8C9C"/>
<rect x="237" y="333" width="1" height="3" fill="#7E8C9C"/>
<rect x="237" y="339" width="1" height="3" fill="#7E8C9C"/>
<rect x="237" y="345" width="1" height="3" fill="#7E8C9C"/>
<rect x="237" y="351" width="1" height="3" fill="#7E8C9C"/>
<rect x="237" y="357" width="1" height="3" fill="#7E8C9C"/>
<rect x="237" y="363" width="1" height="3" fill="#7E8C9C"/>
<rect x="237" y="369" width="1" height="3" fill="#7E8C9C"/>
<rect x="237" y="375" width="1" height="3" fill="#7E8C9C"/>
<rect x="237" y="381" width="1" height="3" fill="#7E8C9C"/>
<rect x="237" y="387" width="1" height="3" fill="#7E8C9C"/>
<rect x="237" y="393" width="1" height="3" fill="#7E8C9C"/>
<rect x="237" y="399" width="1" height="3" fill="#7E8C9C"/>
<rect x="237" y="405" width="1" height="3" fill="#7E8C9C"/>
<rect x="237" y="411" width="1" height="3" fill="#7E8C9C"/>
<rect x="237" y="417" width="1" height="3" fill="#7E8C9C"/>
<rect x="237" y="423" width="1" height="3" fill="#7E8C9C"/>
<rect x="237" y="429" width="1" height="3" fill="#7E8C9C"/>
<rect x="237" y="435" width="1" height="3" fill="#7E8C9C"/>
<rect x="237" y="441" width="1" height="3" fill="#7E8C9C"/>
<rect x="237" y="447" width="1" height="3" fill="#7E8C9C"/>
<rect x="237" y="453" width="1" height="3" fill="#7E8C9C"/>
<rect x="237" y="459" width="1" height="3" fill="#7E8C9C"/>
<rect x="237" y="465" width="1" height="3" fill="#7E8C9C"/>
<rect x="237" y="471" width="1" height="3" fill="#7E8C9C"/>
<rect x="237" y="477" width="1" height="3" fill="#7E8C9C"/>
<rect x="237" y="483" width="1" height="3" fill="#7E8C9C"/>
<rect x="237" y="489" width="1" height="3" fill="#7E8C9C"/>
<rect x="237" y="495" width="1" height="3" fill="#7E8C9C"/>
<rect x="237" y="501" width="1" height="3" fill="#7E8C9C"/>
<rect x="237" y="507" width="1" height="3" fill="#7E8C9C"/>
<rect x="237" y="513" width="1" height="3" fill="#7E8C9C"/>
<rect x="237" y="519" width="1" height="3" fill="#7E8C9C"/>
<rect x="237" y="525" width="1" height="3" fill="#7E8C9C"/>
<rect x="237" y="531" width="1" height="3" fill="#7E8C9C"/>
<rect x="237" y="537" width="1" height="3" fill="#7E8C9C"/>
<rect x="237" y="543" width="1" height="3" fill="#7E8C9C"/>
<rect x="237" y="549" width="1" height="2" fill="#7E8C9C"/>
<rect x="269" y="34" width="1" height="2" fill="#7E8C9C"/>
<rect x="269" y="39" width="1" height="3" fill="#7E8C9C"/>
<rect x="269" y="45" width="1" height="3" fill="#7E8C9C"/>
<rect x="269" y="51" width="1" height="3" fill="#7E8C9C"/>
<rect x="269" y="57" width="1" height="3" fill="#7E8C9C"/>
<rect x="269" y="63" width="1" height="3" fill="#7E8C9C"/>
<rect x="269" y="69" width="1" height="3" fill="#7E8C9C"/>
<rect x="269" y="75" width="1" height="3" fill="#7E8C9C"/>
<rect x="269" y="81" width="1" height="3" fill="#7E8C9C"/>
<rect x="269" y="87" width="1" height="3" fill="#7E8C9C"/>
<rect x="269" y="93" width="1" height="3" fill="#7E8C9C"/>
<rect x="269" y="99" width="1" height="3" fill="#7E8C9C"/>
<rect x="269" y="105" width="1" height="3" fill="#7E8C9C"/>
<rect x="269" y="111" width="1" height="3" fill="#7E8C9C"/>
<rect x="269" y="117" width="1" height="3" fill="#7E8C9C"/>
<rect x="269" y="123" width="1" height="3" fill="#7E8C9C"/>
<rect x="269" y="129" width="1" height="3" fill="#7E8C9C"/>
<rect x="269" y="135" width="1" height="3" fill="#7E8C9C"/>
<rect x="269" y="141" width="1" height="3" fill="#7E8C9C"/>
<rect x="269" y="147" width="1" height="3" fill="#7E8C9C"/>
<rect x="269" y="153" width="1" height="3" fill="#7E8C9C"/>
<rect x="269" y="159" width="1" height="3" fill="#7E8C9C"/>
<rect x="269" y="165" width="1" height="3" fill="#7E8C9C"/>
<rect x="269" y="171" width="1" height="3" fill="#7E8C9C"/>
<rect x="269" y="177" width="1" height="3" fill="#7E8C9C"/>
<rect x="269" y="183" width="1" height="3" fill="#7E8C9C"/>
<rect x="269" y="189" width="1" height="3" fill="#7E8C9C"/>
<rect x="269" y="195" width="1" height="3" fill="#7E8C9C"/>
<rect x="269" y="201" width="1" height="3" fill="#7E8C9C"/>
<rect x="269" y="207" width="1" height="3" fill="#7E8C9C"/>
<rect x="269" y="213" width="1" height="3" fill="#7E8C9C"/>
<rect x="269" y="219" width="1" height="3" fill="#7E8C9C"/>
<rect x="269" y="225" width="1" height="3" fill="#7E8C9C"/>
<rect x="269" y="231" width="1" height="3" fill="#7E8C9C"/>
<rect x="269" y="237" width="1" height="3" fill="#7E8C9C"/>
<rect x="269" y="243" width="1" height="3" fill="#7E8C9C"/>
<rect x="269" y="249" width="1" height="3" fill="#7E8C9C"/>
<rect x="269" y="255" width="1" height="3" fill="#7E8C9C"/>
<rect x="269" y="261" width="1" height="3" fill="#7E8C9C"/>
<rect x="269" y="267" width="1" height="3" fill="#7E8C9C"/>
<rect x="269" y="273" width="1" height="3" fill="#7E8C9C"/>
<rect x="269" y="279" width="1" height="3" fill="#7E8C9C"/>
<rect x="269" y="285" width="1" height="3" fill="#7E8C9C"/>
<rect x="269" y="291" width="1" height="3" fill="#7E8C9C"/>
<rect x="269" y="297" width="1" height="3" fill="#7E8C9C"/>
<rect x="269" y="303" width="1" height="3" fill="#7E8C9C"/>
<rect x="269" y="309" width="1" height="3" fill="#7E8C9C"/>
<rect x="269" y="315" width="1" height="3" fill="#7E8C9C"/>
<rect x="269" y="321" width="1" height="3" fill="#7E8C9C"/>
<rect x="269" y="327" width="1" height="3" fill="#7E8C9C"/>
<rect x="269" y="333" width="1" height="3" fill="#7E8C9C"/>
<rect x="269" y="339" width="1" height="3" fill="#7E8C9C"/>
<rect x="269" y="345" width="1" height="3" fill="#7E8C9C"/>
<rect x="269" y="351" width="1" height="3" fill="#7E8C9C"/>
<rect x="269" y="357" width="1" height="3" fill="#7E8C9C"/>
<rect x="269" y="363" width="1" height="3" fill="#7E8C9C"/>
<rect x="269" y="369" width="1" height="3" fill="#7E8C9C"/>
<rect x="269" y="375" width="1" height="3" fill="#7E8C9C"/>
<rect x="269" y="381" width="1" height="3" fill="#7E8C9C"/>
<rect x="269" y="387" width="1" height="3" fill="#7E8C9C"/>
<rect x="269" y="393" width="1" height="3" fill="#7E8C9C"/>
<rect x="269" y="399" width="1" height="3" fill="#7E8C9C"/>
<rect x="269" y="405" width="1" height="3" fill="#7E8C9C"/>
<rect x="269" y="411" width="1" height="3" fill="#7E8C9C"/>
<rect x="269" y="417" width="1" height="3" fill="#7E8C9C"/>
<rect x="269" y="423" width="1" height="3" fill="#7E8C9C"/>
<rect x="269" y="429" width="1" height="3" fill="#7E8C9C"/>
<rect x="269" y="435" width="1" height="3" fill="#7E8C9C"/>
<rect x="269" y="441" width="1" height="3" fill="#7E8C9C"/>
<rect x="269" y="447" width="1" height="3" fill="#7E8C9C"/>
<rect x="269" y="453" width="1" height="3" fill="#7E8C9C"/>
<rect x="269" y="459" width="1" height="3" fill="#7E8C9C"/>
<rect x="269" y="465" width="1" height="3" fill="#7E8C9C"/>
<rect x="269" y="471" width="1" height="3" fill="#7E8C9C"/>
<rect x="269" y="477" width="1" height="3" fill="#7E8C9C"/>
<rect x="269" y="483" width="1" height="3" fill="#7E8C9C"/>
<rect x="269" y="489" width="1" height="3" fill="#7E8C9C"/>
<rect x="269" y="495" width="1" height="3" fill="#7E8C9C"/>
<rect x="269" y="501" width="1" height="3" fill="#7E8C9C"/>
<rect x="269" y="507" width="1" height="3" fill="#7E8C9C"/>
<rect x="269" y="513" width="1" height="3" fill="#7E8C9C"/>
<rect x="269" y="519" width="1" height="3" fill="#7E8C9C"/>
<rect x="269" y="525" width="1" height="3" fill="#7E8C9C"/>
<rect x="269" y="531" width="1" height="3" fill="#7E8C9C"/>
<rect x="269" y="537" width="1" height="3" fill="#7E8C9C"/>
<rect x="269" y="543" width="1" height="3" fill="#7E8C9C"/>
<rect x="269" y="549" width="1" height="2" fill="#7E8C9C"/>
<rect x="301" y="34" width="1" height="2" fill="#7E8C9C"/>
<rect x="301" y="39" width="1" height="3" fill="#7E8C9C"/>
<rect x="301" y="45" width="1" height="3" fill="#7E8C9C"/>
<rect x="301" y="51" width="1" height="3" fill="#7E8C9C"/>
<rect x="301" y="57" width="1" height="3" fill="#7E8C9C"/>
<rect x="301" y="63" width="1" height="3" fill="#7E8C9C"/>
<rect x="301" y="69" width="1" height="3" fill="#7E8C9C"/>
<rect x="301" y="75" width="1" height="3" fill="#7E8C9C"/>
<rect x="301" y="81" width="1" height="3" fill="#7E8C9C"/>
<rect x="301" y="87" width="1" height="3" fill="#7E8C9C"/>
<rect x="301" y="93" width="1" height="3" fill="#7E8C9C"/>
<rect x="301" y="99" width="1" height="3" fill="#7E8C9C"/>
<rect x="301" y="105" width="1" height="3" fill="#7E8C9C"/>
<rect x="301" y="111" width="1" height="3" fill="#7E8C9C"/>
<rect x="301" y="117" width="1" height="3" fill="#7E8C9C"/>
<rect x="301" y="123" width="1" height="3" fill="#7E8C9C"/>
<rect x="301" y="129" width="1" height="3" fill="#7E8C9C"/>
<rect x="301" y="135" width="1" height="3" fill="#7E8C9C"/>
<rect x="301" y="141" width="1" height="3" fill="#7E8C9C"/>
<rect x="301" y="147" width="1" height="3" fill="#7E8C9C"/>
<rect x="301" y="153" width="1" height="3" fill="#7E8C9C"/>
<rect x="301" y="159" width="1" height="3" fill="#7E8C9C"/>
<rect x="301" y="165" width="1" height="3" fill="#7E8C9C"/>
<rect x="301" y="171" width="1" height="3" fill="#7E8C9C"/>
<rect x="301" y="177" width="1" height="3" fill="#7E8C9C"/>
<rect x="301" y="183" width="1" height="3" fill="#7E8C9C"/>
<rect x="301" y="189" width="1" height="3" fill="#7E8C9C"/>
<rect x="301" y="195" width="1" height="3" fill="#7E8C9C"/>
<rect x="301" y="201" width="1" height="3" fill="#7E8C9C"/>
<rect x="301" y="207" width="1" height="3" fill="#7E8C9C"/>
<rect x="301" y="213" width="1" height="3" fill="#7E8C9C"/>
<rect x="301" y="219" width="1" height="3" fill="#7E8C9C"/>
<rect x="301" y="225" width="1" height="3" fill="#7E8C9C"/>
<rect x="301" y="231" width="1" height="3" fill="#7E8C9C"/>
<rect x="301" y="237" width="1" height="3" fill="#7E8C9C"/>
<rect x="301" y="243" width="1" height="3" fill="#7E8C9C"/>
<rect x="301" y="249" width="1" height="3" fill="#7E8C9C"/>
<rect x="301" y="255" width="1" height="3" fill="#7E8C9C"/>
<rect x="301" y="261" width="1" height="3" fill="#7E8C9C"/>
<rect x="301" y="267" width="1" height="3" fill="#7E8C9C"/>
<rect x="301" y="273" width="1" height="3" fill="#7E8C9C"/>
<rect x="301" y="279" width="1" height="3" fill="#7E8C9C"/>
<rect x="301" y="285" width="1" height="3" fill="#7E8C9C"/>
<rect x="301" y="291" width="1" height="3" fill="#7E8C9C"/>
<rect x="301" y="297" width="1" height="3" fill="#7E8C9C"/>
<rect x="301" y="303" width="1" height="3" fill="#7E8C9C"/>
<rect x="301" y="309" width="1" height="3" fill="#7E8C9C"/>
<rect x="301" y="315" width="1" height="3" fill="#7E8C9C"/>
<rect x="301" y="321" width="1" height="3" fill="#7E8C9C"/>
<rect x="301" y="327" width="1" height="3" fill="#7E8C9C"/>
<rect x="301" y="333" width="1" height="3" fill="#7E8C9C"/>
<rect x="301" y="339" width="1" height="3" fill="#7E8C9C"/>
<rect x="301" y="345" width="1" height="3" fill="#7E8C9C"/>
<rect x="301" y="351" width="1" height="3" fill="#7E8C9C"/>
<rect x="301" y="357" width="1" height="3" fill="#7E8C9C"/>
<rect x="301" y="363" width="1" height="3" fill="#7E8C9C"/>
<rect x="301" y="369" width="1" height="3" fill="#7E8C9C"/>
<rect x="301" y="375" width="1" height="3" fill="#7E8C9C"/>
<rect x="301" y="381" width="1" height="3" fill="#7E8C9C"/>
<rect x="301" y="387" width="1" height="3" fill="#7E8C9C"/>
<rect x="301" y="393" width="1" height="3" fill="#7E8C9C"/>
<rect x="301" y="399" width="1" height="3" fill="#7E8C9C"/>
<rect x="301" y="405" width="1" height="3" fill="#7E8C9C"/>
<rect x="301" y="411" width="1" height="3" fill="#7E8C9C"/>
<rect x="301" y="417" width="1" height="3" fill="#7E8C9C"/>
<rect x="301" y="423" width="1" height="3" fill="#7E8C9C"/>
<rect x="301" y="429" width="1" height="3" fill="#7E8C9C"/>
<rect x="301" y="435" width="1" height="3" fill="#7E8C9C"/>
<rect x="301" y="441" width="1" height="3" fill="#7E8C9C"/>
<rect x="301" y="447" width="1" height="3" fill="#7E8C9C"/>
<rect x="301" y="453" width="1" height="3" fill="#7E8C9C"/>
<rect x="301" y="459" width="1" height="3" fill="#7E8C9C"/>
<rect x="301" y="465" width="1" height="3" fill="#7E8C9C"/>
<rect x="301" y="471" width="1" height="3" fill="#7E8C9C"/>
<rect x="301" y="477" width="1" height="3" fill="#7E8C9C"/>
<rect x="301" y="483" width="1" height="3" fill="#7E8C9C"/>
<rect x="301" y="489" width="1" height="3" fill="#7E8C9C"/>
<rect x="301" y="495" width="1" height="3" fill="#7E8C9C"/>
<rect x="301" y="501" width="1" height="3" fill="#7E8C9C"/>
<rect x="301" y="507" width="1" height="3" fill="#7E8C9C"/>
<rect x="301" y="513" width="1" height="3" fill="#7E8C9C"/>
<rect x="301" y="519" width="1" height="3" fill="#7E8C9C"/>
<rect x="301" y="525" width="1" height="3" fill="#7E8C9C"/>
<rect x="301" y="531" width="1" height="3" fill="#7E8C9C"/>
<rect x="301" y="537" width="1" height="3" fill="#7E8C9C"/>
<rect x="301" y="543" width="1" height="3" fill="#7E8C9C"/>
<rect x="301" y="549" width="1" height="2" fill="#7E8C9C"/>
<rect x="333" y="34" width="1" height="2" fill="#7E8C9C"/>
<rect x="333" y="39" width="1" height="3" fill="#7E8C9C"/>
<rect x="333" y="45" width="1" height="3" fill="#7E8C9C"/>
<rect x="333" y="51" width="1" height="3" fill="#7E8C9C"/>
<rect x="333" y="57" width="1" height="3" fill="#7E8C9C"/>
<rect x="333" y="63" width="1" height="3" fill="#7E8C9C"/>
<rect x="333" y="69" width="1" height="3" fill="#7E8C9C"/>
<rect x="333" y="75" width="1" height="3" fill="#7E8C9C"/>
<rect x="333" y="81" width="1" height="3" fill="#7E8C9C"/>
<rect x="333" y="87" width="1" height="3" fill="#7E8C9C"/>
<rect x="333" y="93" width="1" height="3" fill="#7E8C9C"/>
<rect x="333" y="99" width="1" height="3" fill="#7E8C9C"/>
<rect x="333" y="105" width="1" height="3" fill="#7E8C9C"/>
<rect x="333" y="111" width="1" height="3" fill="#7E8C9C"/>
<rect x="333" y="117" width="1" height="3" fill="#7E8C9C"/>
<rect x="333" y="123" width="1" height="3" fill="#7E8C9C"/>
<rect x="333" y="129" width="1" height="3" fill="#7E8C9C"/>
<rect x="333" y="135" width="1" height="3" fill="#7E8C9C"/>
<rect x="333" y="141" width="1" height="3" fill="#7E8C9C"/>
<rect x="333" y="147" width="1" height="3" fill="#7E8C9C"/>
<rect x="333" y="153" width="1" height="3" fill="#7E8C9C"/>
<rect x="333" y="159" width="1" height="3" fill="#7E8C9C"/>
<rect x="333" y="165" width="1" height="3" fill="#7E8C9C"/>
<rect x="333" y="171" width="1" height="3" fill="#7E8C9C"/>
<rect x="333" y="177" width="1" height="3" fill="#7E8C9C"/>
<rect x="333" y="183" width="1" height="3" fill="#7E8C9C"/>
<rect x="333" y="189" width="1" height="3" fill="#7E8C9C"/>
<rect x="333" y="195" width="1" height="3" fill="#7E8C9C"/>
<rect x="333" y="201" width="1" height="3" fill="#7E8C9C"/>
<rect x="333" y="207" width="1" height="3" fill="#7E8C9C"/>
<rect x="333" y="213" width="1" height="3" fill="#7E8C9C"/>
<rect x="333" y="219" width="1" height="3" fill="#7E8C9C"/>
<rect x="333" y="225" width="1" height="3" fill="#7E8C9C"/>
<rect x="333" y="231" width="1" height="3" fill="#7E8C9C"/>
<rect x="333" y="237" width="1" height="3" fill="#7E8C9C"/>
<rect x="333" y="243" width="1" height="3" fill="#7E8C9C"/>
<rect x="333" y="249" width="1" height="3" fill="#7E8C9C"/>
<rect x="333" y="255" width="1" height="3" fill="#7E8C9C"/>
<rect x="333" y="261" width="1" height="3" fill="#7E8C9C"/>
<rect x="333" y="267" width="1" height="3" fill="#7E8C9C"/>
<rect x="333" y="273" width="1" height="3" fill="#7E8C9C"/>
<rect x="333" y="279" width="1" height="3" fill="#7E8C9C"/>
<rect x="333" y="285" width="1" height="3" fill="#7E8C9C"/>
<rect x="333" y="291" width="1" height="3" fill="#7E8C9C"/>
<rect x="333" y="297" width="1" height="3" fill="#7E8C9C"/>
<rect x="333" y="303" width="1" height="3" fill="#7E8C9C"/>
<rect x="333" y="309" width="1" height="3" fill="#7E8C9C"/>
<rect x="333" y="315" width="1" height="3" fill="#7E8C9C"/>
<rect x="333" y="321" width="1" height="3" fill="#7E8C9C"/>
<rect x="333" y="327" width="1" height="3" fill="#7E8C9C"/>
<rect x="333" y="333" width="1" height="3" fill="#7E8C9C"/>
<rect x="333" y="339" width="1" height="3" fill="#7E8C9C"/>
<rect x="333" y="345" width="1" height="3" fill="#7E8C9C"/>
<rect x="333" y="351" width="1" height="3" fill="#7E8C9C"/>
<rect x="333" y="357" width="1" height="3" fill="#7E8C9C"/>
<rect x="333" y="363" width="1" height="3" fill="#7E8C9C"/>
<rect x="333" y="369" width="1" height="3" fill="#7E8C9C"/>
<rect x="333" y="375" width="1" height="3" fill="#7E8C9C"/>
<rect x="333" y="381" width="1" height="3" fill="#7E8C9C"/>
<rect x="333" y="387" width="1" height="3" fill="#7E8C9C"/>
<rect x="333" y="393" width="1" height="3" fill="#7E8C9C"/>
<rect x="333" y="399" width="1" height="3" fill="#7E8C9C"/>
<rect x="333" y="405" width="1" height="3" fill="#7E8C9C"/>
<rect x="333" y="411" width="1" height="3" fill="#7E8C9C"/>
<rect x="333" y="417" width="1" height="3" fill="#7E8C9C"/>
<rect x="333" y="423" width="1" height="3" fill="#7E8C9C"/>
<rect x="333" y="429" width="1" height="3" fill="#7E8C9C"/>
<rect x="333" y="435" width="1" height="3" fill="#7E8C9C"/>
<rect x="333" y="441" width="1" height="3" fill="#7E8C9C"/>
<rect x="333" y="447" width="1" height="3" fill="#7E8C9C"/>
<rect x="333" y="453" width="1" height="3" fill="#7E8C9C"/>
<rect x="333" y="459" width="1" height="3" fill="#7E8C9C"/>
<rect x="333" y="465" width="1" height="3" fill="#7E8C9C"/>
<rect x="333" y="471" width="1" height="3" fill="#7E8C9C"/>
<rect x="333" y="477" width="1" height="3" fill="#7E8C9C"/>
<rect x="333" y="483" width="1" height="3" fill="#7E8C9C"/>
<rect x="333" y="489" width="1" height="3" fill="#7E8C9C"/>
<rect x="333" y="495" width="1" height="3" fill="#7E8C9C"/>
<rect x="333" y="501" width="1" height="3" fill="#7E8C9C"/>
<rect x="333" y="507" width="1" height="3" fill="#7E8C9C"/>
<rect x="333" y="513" width="1" height="3" fill="#7E8C9C"/>
<rect x="333" y="519" width="1" height="3" fill="#7E8C9C"/>
<rect x="333" y="525" width="1" height="3" fill="#7E8C9C"/>
<rect x="333" y="531" width="1" height="3" fill="#7E8C9C"/>
<rect x="333" y="537" width="1" height="3" fill="#7E8C9C"/>
<rect x="333" y="543" width="1" height="3" fill="#7E8C9C"/>
<rect x="333" y="549" width="1" height="2" fill="#7E8C9C"/>
<rect x="365" y="34" width="1" height="2" fill="#7E8C9C"/>
<rect x="365" y="39" width="1" height="3" fill="#7E8C9C"/>
<rect x="365" y="45" width="1" height="3" fill="#7E8C9C"/>
<rect x="365" y="51" width="1" height="3" fill="#7E8C9C"/>
<rect x="365" y="57" width="1" height="3" fill="#7E8C9C"/>
<rect x="365" y="63" width="1" height="3" fill="#7E8C9C"/>
<rect x="365" y="69" width="1" height="3" fill="#7E8C9C"/>
<rect x="365" y="75" width="1" height="3" fill="#7E8C9C"/>
<rect x="365" y="81" width="1" height="3" fill="#7E8C9C"/>
<rect x="365" y="87" width="1" height="3" fill="#7E8C9C"/>
<rect x="365" y="93" width="1" height="3" fill="#7E8C9C"/>
<rect x="365" y="99" width="1" height="3" fill="#7E8C9C"/>
<rect x="365" y="105" width="1" height="3" fill="#7E8C9C"/>
<rect x="365" y="111" width="1" height="3" fill="#7E8C9C"/>
<rect x="365" y="117" width="1" height="3" fill="#7E8C9C"/>
<rect x="365" y="123" width="1" height="3" fill="#7E8C9C"/>
<rect x="365" y="129" width="1" height="3" fill="#7E8C9C"/>
<rect x="365" y="135" width="1" height="3" fill="#7E8C9C"/>
<rect x="365" y="141" width="1" height="3" fill="#7E8C9C"/>
<rect x="365" y="147" width="1" height="3" fill="#7E8C9C"/>
<rect x="365" y="153" width="1" height="3" fill="#7E8C9C"/>
<rect x="365" y="159" width="1" height="3" fill="#7E8C9C"/>
<rect x="365" y="165" width="1" height="3" fill="#7E8C9C"/>
<rect x="365" y="171" width="1" height="3" fill="#7E8C9C"/>
<rect x="365" y="177" width="1" height="3" fill="#7E8C9C"/>
<rect x="365" y="183" width="1" height="3" fill="#7E8C9C"/>
<rect x="365" y="189" width="1" height="3" fill="#7E8C9C"/>
<rect x="365" y="195" width="1" height="3" fill="#7E8C9C"/>
<rect x="365" y="201" width="1" height="3" fill="#7E8C9C"/>
<rect x="365" y="207" width="1" height="3" fill="#7E8C9C"/>
<rect x="365" y="213" width="1" height="3" fill="#7E8C9C"/>
<rect x="365" y="219" width="1" height="3" fill="#7E8C9C"/>
<rect x="365" y="225" width="1" height="3" fill="#7E8C9C"/>
<rect x="365" y="231" width="1" height="3" fill="#7E8C9C"/>
<rect x="365" y="237" width="1" height="3" fill="#7E8C9C"/>
<rect x="365" y="243" width="1" height="3" fill="#7E8C9C"/>
<rect x="365" y="249" width="1" height="3" fill="#7E8C9C"/>
<rect x="365" y="255" width="1" height="3" fill="#7E8C9C"/>
<rect x="365" y="261" width="1" height="3" fill="#7E8C9C"/>
<rect x="365" y="267" width="1" height="3" fill="#7E8C9C"/>
<rect x="365" y="273" width="1" height="3" fill="#7E8C9C"/>
<rect x="365" y="279" width="1" height="3" fill="#7E8C9C"/>
<rect x="365" y="285" width="1" height="3" fill="#7E8C9C"/>
<rect x="365" y="291" width="1" height="3" fill="#7E8C9C"/>
<rect x="365" y="297" width="1" height="3" fill="#7E8C9C"/>
<rect x="365" y="303" width="1" height="3" fill="#7E8C9C"/>
<rect x="365" y="309" width="1" height="3" fill="#7E8C9C"/>
<rect x="365" y="315" width="1" height="3" fill="#7E8C9C"/>
<rect x="365" y="321" width="1" height="3" fill="#7E8C9C"/>
<rect x="365" y="327" width="1" height="3" fill="#7E8C9C"/>
<rect x="365" y="333" width="1" height="3" fill="#7E8C9C"/>
<rect x="365" y="339" width="1" height="3" fill="#7E8C9C"/>
<rect x="365" y="345" width="1" height="3" fill="#7E8C9C"/>
<rect x="365" y="351" width="1" height="3" fill="#7E8C9C"/>
<rect x="365" y="357" width="1" height="3" fill="#7E8C9C"/>
<rect x="365" y="363" width="1" height="3" fill="#7E8C9C"/>
<rect x="365" y="369" width="1" height="3" fill="#7E8C9C"/>
<rect x="365" y="375" width="1" height="3" fill="#7E8C9C"/>
<rect x="365" y="381" width="1" height="3" fill="#7E8C9C"/>
<rect x="365" y="387" width="1" height="3" fill="#7E8C9C"/>
<rect x="365" y="393" width="1" height="3" fill="#7E8C9C"/>
<rect x="365" y="399" width="1" height="3" fill="#7E8C9C"/>
<rect x="365" y="405" width="1" height="3" fill="#7E8C9C"/>
<rect x="365" y="411" width="1" height="3" fill="#7E8C9C"/>
<rect x="365" y="417" width="1" height="3" fill="#7E8C9C"/>
<rect x="365" y="423" width="1" height="3" fill="#7E8C9C"/>
<rect x="365" y="429" width="1" height="3" fill="#7E8C9C"/>
<rect x="365" y="435" width="1" height="3" fill="#7E8C9C"/>
<rect x="365" y="441" width="1" height="3" fill="#7E8C9C"/>
<rect x="365" y="447" width="1" height="3" fill="#7E8C9C"/>
<rect x="365" y="453" width="1" height="3" fill="#7E8C9C"/>
<rect x="365" y="459" width="1" height="3" fill="#7E8C9C"/>
<rect x="365" y="465" width="1" height="3" fill="#7E8C9C"/>
<rect x="365" y="471" width="1" height="3" fill="#7E8C9C"/>
<rect x="365" y="477" width="1" height="3" fill="#7E8C9C"/>
<rect x="365" y="483" width="1" height="3" fill="#7E8C9C"/>
<rect x="365" y="489" width="1" height="3" fill="#7E8C9C"/>
<rect x="365" y="495" width="1" height="3" fill="#7E8C9C"/>
<rect x="365" y="501" width="1" height="3" fill="#7E8C9C"/>
<rect x="365" y="507" width="1" height="3" fill="#7E8C9C"/>
<rect x="365" y="513" width="1" height="3" fill="#7E8C9C"/>
<rect x="365" y="519" width="1" height="3" fill="#7E8C9C"/>
<rect x="365" y="525" width="1" height="3" fill="#7E8C9C"/>
<rect x="365" y="531" width="1" height="3" fill="#7E8C9C"/>
<rect x="365" y="537" width="1" height="3" fill="#7E8C9C"/>
<rect x="365" y="543" width="1" height="3" fill="#7E8C9C"/>
<rect x="365" y="549" width="1" height="2" fill="#7E8C9C"/>
<rect x="397" y="34" width="1" height="2" fill="#7E8C9C"/>
<rect x="397" y="39" width="1" height="3" fill="#7E8C9C"/>
<rect x="397" y="45" width="1" height="3" fill="#7E8C9C"/>
<rect x="397" y="51" width="1" height="3" fill="#7E8C9C"/>
<rect x="397" y="57" width="1" height="3" fill="#7E8C9C"/>
<rect x="397" y="63" width="1" height="3" fill="#7E8C9C"/>
<rect x="397" y="69" width="1" height="3" fill="#7E8C9C"/>
<rect x="397" y="75" width="1" height="3" fill="#7E8C9C"/>
<rect x="397" y="81" width="1" height="3" fill="#7E8C9C"/>
<rect x="397" y="87" width="1" height="3" fill="#7E8C9C"/>
<rect x="397" y="93" width="1" height="3" fill="#7E8C9C"/>
<rect x="397" y="99" width="1" height="3" fill="#7E8C9C"/>
<rect x="397" y="105" width="1" height="3" fill="#7E8C9C"/>
<rect x="397" y="111" width="1" height="3" fill="#7E8C9C"/>
<rect x="397" y="117" width="1" height="3" fill="#7E8C9C"/>
<rect x="397" y="123" width="1" height="3" fill="#7E8C9C"/>
<rect x="397" y="129" width="1" height="3" fill="#7E8C9C"/>
<rect x="397" y="135" width="1" height="3" fill="#7E8C9C"/>
<rect x="397" y="141" width="1" height="3" fill="#7E8C9C"/>
<rect x="397" y="147" width="1" height="3" fill="#7E8C9C"/>
<rect x="397" y="153" width="1" height="3" fill="#7E8C9C"/>
<rect x="397" y="159" width="1" height="3" fill="#7E8C9C"/>
<rect x="397" y="165" width="1" height="3" fill="#7E8C9C"/>
<rect x="397" y="171" width="1" height="3" fill="#7E8C9C"/>
<rect x="397" y="177" width="1" height="3" fill="#7E8C9C"/>
<rect x="397" y="183" width="1" height="3" fill="#7E8C9C"/>
<rect x="397" y="189" width="1" height="3" fill="#7E8C9C"/>
<rect x="397" y="195" width="1" height="3" fill="#7E8C9C"/>
<rect x="397" y="201" width="1" height="3" fill="#7E8C9C"/>
<rect x="397" y="207" width="1" height="3" fill="#7E8C9C"/>
<rect x="397" y="213" width="1" height="3" fill="#7E8C9C"/>
<rect x="397" y="219" width="1" height="3" fill="#7E8C9C"/>
<rect x="397" y="225" width="1" height="3" fill="#7E8C9C"/>
<rect x="397" y="231" width="1" height="3" fill="#7E8C9C"/>
<rect x="397" y="237" width="1" height="3" fill="#7E8C9C"/>
<rect x="397" y="243" width="1" height="3" fill="#7E8C9C"/>
<rect x="397" y="249" width="1" height="3" fill="#7E8C9C"/>
<rect x="397" y="255" width="1" height="3" fill="#7E8C9C"/>
<rect x="397" y="261" width="1" height="3" fill="#7E8C9C"/>
<rect x="397" y="267" width="1" height="3" fill="#7E8C9C"/>
<rect x="397" y="273" width="1" height="3" fill="#7E8C9C"/>
<rect x="397" y="279" width="1" height="3" fill="#7E8C9C"/>
<rect x="397" y="285" width="1" height="3" fill="#7E8C9C"/>
<rect x="397" y="291" width="1" height="3" fill="#7E8C9C"/>
<rect x="397" y="297" width="1" height="3" fill="#7E8C9C"/>
<rect x="397" y="303" width="1" height="3" fill="#7E8C9C"/>
<rect x="397" y="309" width="1" height="3" fill="#7E8C9C"/>
<rect x="397" y="315" width="1" height="3" fill="#7E8C9C"/>
<rect x="397" y="321" width="1" height="3" fill="#7E8C9C"/>
<rect x="397" y="327" width="1" height="3" fill="#7E8C9C"/>
<rect x="397" y="333" width="1" height="3" fill="#7E8C9C"/>
<rect x="397" y="339" width="1" height="3" fill="#7E8C9C"/>
<rect x="397" y="345" width="1" height="3" fill="#7E8C9C"/>
<rect x="397" y="351" width="1" height="3" fill="#7E8C9C"/>
<rect x="397" y="357" width="1" height="3" fill="#7E8C9C"/>
<rect x="397" y="363" width="1" height="3" fill="#7E8C9C"/>
<rect x="397" y="369" width="1" height="3" fill="#7E8C9C"/>
<rect x="397" y="375" width="1" height="3" fill="#7E8C9C"/>
<rect x="397" y="381" width="1" height="3" fill="#7E8C9C"/>
<rect x="397" y="387" width="1" height="3" fill="#7E8C9C"/>
<rect x="397" y="393" width="1" height="3" fill="#7E8C9C"/>
<rect x="397" y="399" width="1" height="3" fill="#7E8C9C"/>
<rect x="397" y="405" width="1" height="3" fill="#7E8C9C"/>
<rect x="397" y="411" width="1" height="3" fill="#7E8C9C"/>
<rect x="397" y="417" width="1" height="3" fill="#7E8C9C"/>
<rect x="397" y="423" width="1" height="3" fill="#7E8C9C"/>
<rect x="397" y="429" width="1" height="3" fill="#7E8C9C"/>
<rect x="397" y="435" width="1" height="3" fill="#7E8C9C"/>
<rect x="397" y="441" width="1" height="3" fill="#7E8C9C"/>
<rect x="397" y="447" width="1" height="3" fill="#7E8C9C"/>
<rect x="397" y="453" width="1" height="3" fill="#7E8C9C"/>
<rect x="397" y="459" width="1" height="3" fill="#7E8C9C"/>
<rect x="397" y="465" width="1" height="3" fill="#7E8C9C"/>
<rect x="397" y="471" width="1" height="3" fill="#7E8C9C"/>
<rect x="397" y="477" width="1" height="3" fill="#7E8C9C"/>
<rect x="397" y="483" width="1" height="3" fill="#7E8C9C"/>
<rect x="397" y="489" width="1" height="3" fill="#7E8C9C"/>
<rect x="397" y="495" width="1" height="3" fill="#7E8C9C"/>
<rect x="397" y="501" width="1" height="3" fill="#7E8C9C"/>
<rect x="397" y="507" width="1" height="3" fill="#7E8C9C"/>
<rect x="397" y="513" width="1" height="3" fill="#7E8C9C"/>
<rect x="397" y="519" width="1" height="3" fill="#7E8C9C"/>
<rect x="397" y="525" width="1" height="3" fill="#7E8C9C"/>
<rect x="397" y="531" width="1" height="3" fill="#7E8C9C"/>
<rect x="397" y="537" width="1" height="3" fill="#7E8C9C"/>
<rect x="397" y="543" width="1" height="3" fill="#7E8C9C"/>
<rect x="397" y="549" width="1" height="2" fill="#7E8C9C"/>
<rect x="429" y="34" width="1" height="2" fill="#7E8C9C"/>
<rect x="429" y="39" width="1" height="3" fill="#7E8C9C"/>
<rect x="429" y="45" width="1" height="3" fill="#7E8C9C"/>
<rect x="429" y="51" width="1" height="3" fill="#7E8C9C"/>
<rect x="429" y="57" width="1" height="3" fill="#7E8C9C"/>
<rect x="429" y="63" width="1" height="3" fill="#7E8C9C"/>
<rect x="429" y="69" width="1" height="3" fill="#7E8C9C"/>
<rect x="429" y="75" width="1" height="3" fill="#7E8C9C"/>
<rect x="429" y="81" width="1" height="3" fill="#7E8C9C"/>
<rect x="429" y="87" width="1" height="3" fill="#7E8C9C"/>
<rect x="429" y="93" width="1" height="3" fill="#7E8C9C"/>
<rect x="429" y="99" width="1" height="3" fill="#7E8C9C"/>
<rect x="429" y="105" width="1" height="3" fill="#7E8C9C"/>
<rect x="429" y="111" width="1" height="3" fill="#7E8C9C"/>
<rect x="429" y="117" width="1" height="3" fill="#7E8C9C"/>
<rect x="429" y="123" width="1" height="3" fill="#7E8C9C"/>
<rect x="429" y="129" width="1" height="3" fill="#7E8C9C"/>
<rect x="429" y="135" width="1" height="3" fill="#7E8C9C"/>
<rect x="429" y="141" width="1" height="3" fill="#7E8C9C"/>
<rect x="429" y="147" width="1" height="3" fill="#7E8C9C"/>
<rect x="429" y="153" width="1" height="3" fill="#7E8C9C"/>
<rect x="429" y="159" width="1" height="3" fill="#7E8C9C"/>
<rect x="429" y="165" width="1" height="3" fill="#7E8C9C"/>
<rect x="429" y="171" width="1" height="3" fill="#7E8C9C"/>
<rect x="429" y="177" width="1" height="3" fill="#7E8C9C"/>
<rect x="429" y="183" width="1" height="3" fill="#7E8C9C"/>
<rect x="429" y="189" width="1" height="3" fill="#7E8C9C"/>
<rect x="429" y="195" width="1" height="3" fill="#7E8C9C"/>
<rect x="429" y="201" width="1" height="3" fill="#7E8C9C"/>
<rect x="429" y="207" width="1" height="3" fill="#7E8C9C"/>
<rect x="429" y="213" width="1" height="3" fill="#7E8C9C"/>
<rect x="429" y="219" width="1" height="3" fill="#7E8C9C"/>
<rect x="429" y="225" width="1" height="3" fill="#7E8C9C"/>
<rect x="429" y="231" width="1" height="3" fill="#7E8C9C"/>
<rect x="429" y="237" width="1" height="3" fill="#7E8C9C"/>
<rect x="429" y="243" width="1" height="3" fill="#7E8C9C"/>
<rect x="429" y="249" width="1" height="3" fill="#7E8C9C"/>
<rect x="429" y="255" width="1" height="3" fill="#7E8C9C"/>
<rect x="429" y="261" width="1" height="3" fill="#7E8C9C"/>
<rect x="429" y="267" width="1" height="3" fill="#7E8C9C"/>
<rect x="429" y="273" width="1" height="3" fill="#7E8C9C"/>
<rect x="429" y="279" width="1" height="3" fill="#7E8C9C"/>
<rect x="429" y="285" width="1" height="3" fill="#7E8C9C"/>
<rect x="429" y="291" width="1" height="3" fill="#7E8C9C"/>
<rect x="429" y="297" width="1" height="3" fill="#7E8C9C"/>
<rect x="429" y="303" width="1" height="3" fill="#7E8C9C"/>
<rect x="429" y="309" width="1" height="3" fill="#7E8C9C"/>
<rect x="429" y="315" width="1" height="3" fill="#7E8C9C"/>
<rect x="429" y="321" width="1" height="3" fill="#7E8C9C"/>
<rect x="429" y="327" width="1" height="3" fill="#7E8C9C"/>
<rect x="429" y="333" width="1" height="3" fill="#7E8C9C"/>
<rect x="429" y="339" width="1" height="3" fill="#7E8C9C"/>
<rect x="429" y="345" width="1" height="3" fill="#7E8C9C"/>
<rect x="429" y="351" width="1" height="3" fill="#7E8C9C"/>
<rect x="429" y="357" width="1" height="3" fill="#7E8C9C"/>
<rect x="429" y="363" width="1" height="3" fill="#7E8C9C"/>
<rect x="429" y="369" width="1" height="3" fill="#7E8C9C"/>
<rect x="429" y="375" width="1" height="3" fill="#7E8C9C"/>
<rect x="429" y="381" width="1" height="3" fill="#7E8C9C"/>
<rect x="429" y="387" width="1" height="3" fill="#7E8C9C"/>
<rect x="429" y="393" width="1" height="3" fill="#7E8C9C"/>
<rect x="429" y="399" width="1" height="3" fill="#7E8C9C"/>
<rect x="429" y="405" width="1" height="3" fill="#7E8C9C"/>
<rect x="429" y="411" width="1" height="3" fill="#7E8C9C"/>
<rect x="429" y="417" width="1" height="3" fill="#7E8C9C"/>
<rect x="429" y="423" width="1" height="3" fill="#7E8C9C"/>
<rect x="429" y="429" width="1" height="3" fill="#7E8C9C"/>
<rect x="429" y="435" width="1" height="3" fill="#7E8C9C"/>
<rect x="429" y="441" width="1" height="3" fill="#7E8C9C"/>
<rect x="429" y="447" width="1" height="3" fill="#7E8C9C"/>
<rect x="429" y="453" width="1" height="3" fill="#7E8C9C"/>
<rect x="429" y="459" width="1" height="3" fill="#7E8C9C"/>
<rect x="429" y="465" width="1" height="3" fill="#7E8C9C"/>
<rect x="429" y="471" width="1" height="3" fill="#7E8C9C"/>
<rect x="429" y="477" width="1" height="3" fill="#7E8C9C"/>
<rect x="429" y="483" width="1" height="3" fill="#7E8C9C"/>
<rect x="429" y="489" width="1" height="3" fill="#7E8C9C"/>
<rect x="429" y="495" width="1" height="3" fill="#7E8C9C"/>
<rect x="429" y="501" width="1" height="3" fill="#7E8C9C"/>
<rect x="429" y="507" width="1" height="3" fill="#7E8C9C"/>
<rect x="429" y="513" width="1" height="3" fill="#7E8C9C"/>
<rect x="429" y="519" width="1" height="3" fill="#7E8C9C"/>
<rect x="429" y="525" width="1" height="3" fill="#7E8C9C"/>
<rect x="429" y="531" width="1" height="3" fill="#7E8C9C"/>
<rect x="429" y="537" width="1" height="3" fill="#7E8C9C"/>
<rect x="429" y="543" width="1" height="3" fill="#7E8C9C"/>
<rect x="429" y="549" width="1" height="2" fill="#7E8C9C"/>
<rect x="461" y="34" width="1" height="2" fill="#7E8C9C"/>
<rect x="461" y="39" width="1" height="3" fill="#7E8C9C"/>
<rect x="461" y="45" width="1" height="3" fill="#7E8C9C"/>
<rect x="461" y="51" width="1" height="3" fill="#7E8C9C"/>
<rect x="461" y="57" width="1" height="3" fill="#7E8C9C"/>
<rect x="461" y="63" width="1" height="3" fill="#7E8C9C"/>
<rect x="461" y="69" width="1" height="3" fill="#7E8C9C"/>
<rect x="461" y="75" width="1" height="3" fill="#7E8C9C"/>
<rect x="461" y="81" width="1" height="3" fill="#7E8C9C"/>
<rect x="461" y="87" width="1" height="3" fill="#7E8C9C"/>
<rect x="461" y="93" width="1" height="3" fill="#7E8C9C"/>
<rect x="461" y="99" width="1" height="3" fill="#7E8C9C"/>
<rect x="461" y="105" width="1" height="3" fill="#7E8C9C"/>
<rect x="461" y="111" width="1" height="3" fill="#7E8C9C"/>
<rect x="461" y="117" width="1" height="3" fill="#7E8C9C"/>
<rect x="461" y="123" width="1" height="3" fill="#7E8C9C"/>
<rect x="461" y="129" width="1" height="3" fill="#7E8C9C"/>
<rect x="461" y="135" width="1" height="3" fill="#7E8C9C"/>
<rect x="461" y="141" width="1" height="3" fill="#7E8C9C"/>
<rect x="461" y="147" width="1" height="3" fill="#7E8C9C"/>
<rect x="461" y="153" width="1" height="3" fill="#7E8C9C"/>
<rect x="461" y="159" width="1" height="3" fill="#7E8C9C"/>
<rect x="461" y="165" width="1" height="3" fill="#7E8C9C"/>
<rect x="461" y="171" width="1" height="3" fill="#7E8C9C"/>
<rect x="461" y="177" width="1" height="3" fill="#7E8C9C"/>
<rect x="461" y="183" width="1" height="3" fill="#7E8C9C"/>
<rect x="461" y="189" width="1" height="3" fill="#7E8C9C"/>
<rect x="461" y="195" width="1" height="3" fill="#7E8C9C"/>
<rect x="461" y="201" width="1" height="3" fill="#7E8C9C"/>
<rect x="461" y="207" width="1" height="3" fill="#7E8C9C"/>
<rect x="461" y="213" width="1" height="3" fill="#7E8C9C"/>
<rect x="461" y="219" width="1" height="3" fill="#7E8C9C"/>
<rect x="461" y="225" width="1" height="3" fill="#7E8C9C"/>
<rect x="461" y="231" width="1" height="3" fill="#7E8C9C"/>
<rect x="461" y="237" width="1" height="3" fill="#7E8C9C"/>
<rect x="461" y="243" width="1" height="3" fill="#7E8C9C"/>
<rect x="461" y="249" width="1" height="3" fill="#7E8C9C"/>
<rect x="461" y="255" width="1" height="3" fill="#7E8C9C"/>
<rect x="461" y="261" width="1" height="3" fill="#7E8C9C"/>
<rect x="461" y="267" width="1" height="3" fill="#7E8C9C"/>
<rect x="461" y="273" width="1" height="3" fill="#7E8C9C"/>
<rect x="461" y="279" width="1" height="3" fill="#7E8C9C"/>
<rect x="461" y="285" width="1" height="3" fill="#7E8C9C"/>
<rect x="461" y="291" width="1" height="3" fill="#7E8C9C"/>
<rect x="461" y="297" width="1" height="3" fill="#7E8C9C"/>
<rect x="461" y="303" width="1" height="3" fill="#7E8C9C"/>
<rect x="461" y="309" width="1" height="3" fill="#7E8C9C"/>
<rect x="461" y="315" width="1" height="3" fill="#7E8C9C"/>
<rect x="461" y="321" width="1" height="3" fill="#7E8C9C"/>
<rect x="461" y="327" width="1" height="3" fill="#7E8C9C"/>
<rect x="461" y="333" width="1" height="3" fill="#7E8C9C"/>
<rect x="461" y="339" width="1" height="3" fill="#7E8C9C"/>
<rect x="461" y="345" width="1" height="3" fill="#7E8C9C"/>
<rect x="461" y="351" width="1" height="3" fill="#7E8C9C"/>
<rect x="461" y="357" width="1" height="3" fill="#7E8C9C"/>
<rect x="461" y="363" width="1" height="3" fill="#7E8C9C"/>
<rect x="461" y="369" width="1" height="3" fill="#7E8C9C"/>
<rect x="461" y="375" width="1" height="3" fill="#7E8C9C"/>
<rect x="461" y="381" width="1" height="3" fill="#7E8C9C"/>
<rect x="461" y="387" width="1" height="3" fill="#7E8C9C"/>
<rect x="461" y="393" width="1" height="3" fill="#7E8C9C"/>
<rect x="461" y="399" width="1" height="3" fill="#7E8C9C"/>
<rect x="461" y="405" width="1" height="3" fill="#7E8C9C"/>
<rect x="461" y="411" width="1" height="3" fill="#7E8C9C"/>
<rect x="461" y="417" width="1" height="3" fill="#7E8C9C"/>
<rect x="461" y="423" width="1" height="3" fill="#7E8C9C"/>
<rect x="461" y="429" width="1" height="3" fill="#7E8C9C"/>
<rect x="461" y="435" width="1" height="3" fill="#7E8C9C"/>
<rect x="461" y="441" width="1" height="3" fill="#7E8C9C"/>
<rect x="461" y="447" width="1" height="3" fill="#7E8C9C"/>
<rect x="461" y="453" width="1" height="3" fill="#7E8C9C"/>
<rect x="461" y="459" width="1" height="3" fill="#7E8C9C"/>
<rect x="461" y="465" width="1" height="3" fill="#7E8C9C"/>
<rect x="461" y="471" width="1" height="3" fill="#7E8C9C"/>
<rect x="461" y="477" width="1" height="3" fill="#7E8C9C"/>
<rect x="461" y="483" width="1" height="3" fill="#7E8C9C"/>
<rect x="461" y="489" width="1" height="3" fill="#7E8C9C"/>
<rect x="461" y="495" width="1" height="3" fill="#7E8C9C"/>
<rect x="461" y="501" width="1" height="3" fill="#7E8C9C"/>
<rect x="461" y="507" width="1" height="3" fill="#7E8C9C"/>
<rect x="461" y="513" width="1" height="3" fill="#7E8C9C"/>
<rect x="461" y="519" width="1" height="3" fill="#7E8C9C"/>
<rect x="461" y="525" width="1" height="3" fill="#7E8C9C"/>
<rect x="461" y="531" width="1" height="3" fill="#7E8C9C"/>
<rect x="461" y="537" width="1" height="3" fill="#7E8C9C"/>
<rect x="461" y="543" width="1" height="3" fill="#7E8C9C"/>
<rect x="461" y="549" width="1" height="2" fill="#7E8C9C"/>
<rect x="493" y="34" width="1" height="2" fill="#7E8C9C"/>
<rect x="493" y="39" width="1" height="3" fill="#7E8C9C"/>
<rect x="493" y="45" width="1" height="3" fill="#7E8C9C"/>
<rect x="493" y="51" width="1" height="3" fill="#7E8C9C"/>
<rect x="493" y="57" width="1" height="3" fill="#7E8C9C"/>
<rect x="493" y="63" width="1" height="3" fill="#7E8C9C"/>
<rect x="493" y="69" width="1" height="3" fill="#7E8C9C"/>
<rect x="493" y="75" width="1" height="3" fill="#7E8C9C"/>
<rect x="493" y="81" width="1" height="3" fill="#7E8C9C"/>
<rect x="493" y="87" width="1" height="3" fill="#7E8C9C"/>
<rect x="493" y="93" width="1" height="3" fill="#7E8C9C"/>
<rect x="493" y="99" width="1" height="3" fill="#7E8C9C"/>
<rect x="493" y="105" width="1" height="3" fill="#7E8C9C"/>
<rect x="493" y="111" width="1" height="3" fill="#7E8C9C"/>
<rect x="493" y="117" width="1" height="3" fill="#7E8C9C"/>
<rect x="493" y="123" width="1" height="3" fill="#7E8C9C"/>
<rect x="493" y="129" width="1" height="3" fill="#7E8C9C"/>
<rect x="493" y="135" width="1" height="3" fill="#7E8C9C"/>
<rect x="493" y="141" width="1" height="3" fill="#7E8C9C"/>
<rect x="493" y="147" width="1" height="3" fill="#7E8C9C"/>
<rect x="493" y="153" width="1" height="3" fill="#7E8C9C"/>
<rect x="493" y="159" width="1" height="3" fill="#7E8C9C"/>
<rect x="493" y="165" width="1" height="3" fill="#7E8C9C"/>
<rect x="493" y="171" width="1" height="3" fill="#7E8C9C"/>
<rect x="493" y="177" width="1" height="3" fill="#7E8C9C"/>
<rect x="493" y="183" width="1" height="3" fill="#7E8C9C"/>
<rect x="493" y="189" width="1" height="3" fill="#7E8C9C"/>
<rect x="493" y="195" width="1" height="3" fill="#7E8C9C"/>
<rect x="493" y="201" width="1" height="3" fill="#7E8C9C"/>
<rect x="493" y="207" width="1" height="3" fill="#7E8C9C"/>
<rect x="493" y="213" width="1" height="3" fill="#7E8C9C"/>
<rect x="493" y="219" width="1" height="3" fill="#7E8C9C"/>
<rect x="493" y="225" width="1" height="3" fill="#7E8C9C"/>
<rect x="493" y="231" width="1" height="3" fill="#7E8C9C"/>
<rect x="493" y="237" width="1" height="3" fill="#7E8C9C"/>
<rect x="493" y="243" width="1" height="3" fill="#7E8C9C"/>
<rect x="493" y="249" width="1" height="3" fill="#7E8C9C"/>
<rect x="493" y="255" width="1" height="3" fill="#7E8C9C"/>
<rect x="493" y="261" width="1" height="3" fill="#7E8C9C"/>
<rect x="493" y="267" width="1" height="3" fill="#7E8C9C"/>
<rect x="493" y="273" width="1" height="3" fill="#7E8C9C"/>
<rect x="493" y="279" width="1" height="3" fill="#7E8C9C"/>
<rect x="493" y="285" width="1" height="3" fill="#7E8C9C"/>
<rect x="493" y="291" width="1" height="3" fill="#7E8C9C"/>
<rect x="493" y="297" width="1" height="3" fill="#7E8C9C"/>
<rect x="493" y="303" width="1" height="3" fill="#7E8C9C"/>
<rect x="493" y="309" width="1" height="3" fill="#7E8C9C"/>
<rect x="493" y="315" width="1" height="3" fill="#7E8C9C"/>
<rect x="493" y="321" width="1" height="3" fill="#7E8C9C"/>
<rect x="493" y="327" width="1" height="3" fill="#7E8C9C"/>
<rect x="493" y="333" width="1" height="3" fill="#7E8C9C"/>
<rect x="493" y="339" width="1" height="3" fill="#7E8C9C"/>
<rect x="493" y="345" width="1" height="3" fill="#7E8C9C"/>
<rect x="493" y="351" width="1" height="3" fill="#7E8C9C"/>
<rect x="493" y="357" width="1" height="3" fill="#7E8C9C"/>
<rect x="493" y="363" width="1" height="3" fill="#7E8C9C"/>
<rect x="493" y="369" width="1" height="3" fill="#7E8C9C"/>
<rect x="493" y="375" width="1" height="3" fill="#7E8C9C"/>
<rect x="493" y="381" width="1" height="3" fill="#7E8C9C"/>
<rect x="493" y="387" width="1" height="3" fill="#7E8C9C"/>
<rect x="493" y="393" width="1" height="3" fill="#7E8C9C"/>
<rect x="493" y="399" width="1" height="3" fill="#7E8C9C"/>
<rect x="493" y="405" width="1" height="3" fill="#7E8C9C"/>
<rect x="493" y="411" width="1" height="3" fill="#7E8C9C"/>
<rect x="493" y="417" width="1" height="3" fill="#7E8C9C"/>
<rect x="493" y="423" width="1" height="3" fill="#7E8C9C"/>
<rect x="493" y="429" width="1" height="3" fill="#7E8C9C"/>
<rect x="493" y="435" width="1" height="3" fill="#7E8C9C"/>
<rect x="493" y="441" width="1" height="3" fill="#7E8C9C"/>
<rect x="493" y="447" width="1" height="3" fill="#7E8C9C"/>
<rect x="493" y="453" width="1" height="3" fill="#7E8C9C"/>
<rect x="493" y="459" width="1" height="3" fill="#7E8C9C"/>
<rect x="493" y="465" width="1" height="3" fill="#7E8C9C"/>
<rect x="493" y="471" width="1" height="3" fill="#7E8C9C"/>
<rect x="493" y="477" width="1" height="3" fill="#7E8C9C"/>
<rect x="493" y="483" width="1" height="3" fill="#7E8C9C"/>
<rect x="493" y="489" width="1" height="3" fill="#7E8C9C"/>
<rect x="493" y="495" width="1" height="3" fill="#7E8C9C"/>
<rect x="493" y="501" width="1" height="3" fill="#7E8C9C"/>
<rect x="493" y="507" width="1" height="3" fill="#7E8C9C"/>
<rect x="493" y="513" width="1" height="3" fill="#7E8C9C"/>
<rect x="493" y="519" width="1" height="3" fill="#7E8C9C"/>
<rect x="493" y="525" width="1" height="3" fill="#7E8C9C"/>
<rect x="493" y="531" width="1" height="3" fill="#7E8C9C"/>
<rect x="493" y="537" width="1" height="3" fill="#7E8C9C"/>
<rect x="493" y="543" width="1" height="3" fill="#7E8C9C"/>
<rect x="493" y="549" width="1" height="2" fill="#7E8C9C"/>
<rect x="525" y="34" width="1" height="2" fill="#7E8C9C"/>
<rect x="525" y="39" width="1" height="3" fill="#7E8C9C"/>
<rect x="525" y="45" width="1" height="3" fill="#7E8C9C"/>
<rect x="525" y="51" width="1" height="3" fill="#7E8C9C"/>
<rect x="525" y="57" width="1" height="3" fill="#7E8C9C"/>
<rect x="525" y="63" width="1" height="3" fill="#7E8C9C"/>
<rect x="525" y="69" width="1" height="3" fill="#7E8C9C"/>
<rect x="525" y="75" width="1" height="3" fill="#7E8C9C"/>
<rect x="525" y="81" width="1" height="3" fill="#7E8C9C"/>
<rect x="525" y="87" width="1" height="3" fill="#7E8C9C"/>
<rect x="525" y="93" width="1" height="3" fill="#7E8C9C"/>
<rect x="525" y="99" width="1" height="3" fill="#7E8C9C"/>
<rect x="525" y="105" width="1" height="3" fill="#7E8C9C"/>
<rect x="525" y="111" width="1" height="3" fill="#7E8C9C"/>
<rect x="525" y="117" width="1" height="3" fill="#7E8C9C"/>
<rect x="525" y="123" width="1" height="3" fill="#7E8C9C"/>
<rect x="525" y="129" width="1" height="3" fill="#7E8C9C"/>
<rect x="525" y="135" width="1" height="3" fill="#7E8C9C"/>
<rect x="525" y="141" width="1" height="3" fill="#7E8C9C"/>
<rect x="525" y="147" width="1" height="3" fill="#7E8C9C"/>
<rect x="525" y="153" width="1" height="3" fill="#7E8C9C"/>
<rect x="525" y="159" width="1" height="3" fill="#7E8C9C"/>
<rect x="525" y="165" width="1" height="3" fill="#7E8C9C"/>
<rect x="525" y="171" width="1" height="3" fill="#7E8C9C"/>
<rect x="525" y="177" width="1" height="3" fill="#7E8C9C"/>
<rect x="525" y="183" width="1" height="3" fill="#7E8C9C"/>
<rect x="525" y="189" width="1" height="3" fill="#7E8C9C"/>
<rect x="525" y="195" width="1" height="3" fill="#7E8C9C"/>
<rect x="525" y="201" width="1" height="3" fill="#7E8C9C"/>
<rect x="525" y="207" width="1" height="3" fill="#7E8C9C"/>
<rect x="525" y="213" width="1" height="3" fill="#7E8C9C"/>
<rect x="525" y="219" width="1" height="3" fill="#7E8C9C"/>
<rect x="525" y="225" width="1" height="3" fill="#7E8C9C"/>
<rect x="525" y="231" width="1" height="3" fill="#7E8C9C"/>
<rect x="525" y="237" width="1" height="3" fill="#7E8C9C"/>
<rect x="525" y="243" width="1" height="3" fill="#7E8C9C"/>
<rect x="525" y="249" width="1" height="3" fill="#7E8C9C"/>
<rect x="525" y="255" width="1" height="3" fill="#7E8C9C"/>
<rect x="525" y="261" width="1" height="3" fill="#7E8C9C"/>
<rect x="525" y="267" width="1" height="3" fill="#7E8C9C"/>
<rect x="525" y="273" width="1" height="3" fill="#7E8C9C"/>
<rect x="525" y="279" width="1" height="3" fill="#7E8C9C"/>
<rect x="525" y="285" width="1" height="3" fill="#7E8C9C"/>
<rect x="525" y="291" width="1" height="3" fill="#7E8C9C"/>
<rect x="525" y="297" width="1" height="3" fill="#7E8C9C"/>
<rect x="525" y="303" width="1" height="3" fill="#7E8C9C"/>
<rect x="525" y="309" width="1" height="3" fill="#7E8C9C"/>
<rect x="525" y="315" width="1" height="3" fill="#7E8C9C"/>
<rect x="525" y="321" width="1" height="3" fill="#7E8C9C"/>
<rect x="525" y="327" width="1" height="3" fill="#7E8C9C"/>
<rect x="525" y="333" width="1" height="3" fill="#7E8C9C"/>
<rect x="525" y="339" width="1" height="3" fill="#7E8C9C"/>
<rect x="525" y="345" width="1" height="3" fill="#7E8C9C"/>
<rect x="525" y="351" width="1" height="3" fill="#7E8C9C"/>
<rect x="525" y="357" width="1" height="3" fill="#7E8C9C"/>
<rect x="525" y="363" width="1" height="3" fill="#7E8C9C"/>
<rect x="525" y="369" width="1" height="3" fill="#7E8C9C"/>
<rect x="525" y="375" width="1" height="3" fill="#7E8C9C"/>
<rect x="525" y="381" width="1" height="3" fill="#7E8C9C"/>
<rect x="525" y="387" width="1" height="3" fill="#7E8C9C"/>
<rect x="525" y="393" width="1" height="3" fill="#7E8C9C"/>
<rect x="525" y="399" width="1" height="3" fill="#7E8C9C"/>
<rect x="525" y="405" width="1" height="3" fill="#7E8C9C"/>
<rect x="525" y="411" width="1" height="3" fill="#7E8C9C"/>
<rect x="525" y="417" width="1" height="3" fill="#7E8C9C"/>
<rect x="525" y="423" width="1" height="3" fill="#7E8C9C"/>
<rect x="525" y="429" width="1" height="3" fill="#7E8C9C"/>
<rect x="525" y="435" width="1" height="3" fill="#7E8C9C"/>
<rect x="525" y="441" width="1" height="3" fill="#7E8C9C"/>
<rect x="525" y="447" width="1" height="3" fill="#7E8C9C"/>
<rect x="525" y="453" width="1" height="3" fill="#7E8C9C"/>
<rect x="525" y="459" width="1" height="3" fill="#7E8C9C"/>
<rect x="525" y="465" width="1" height="3" fill="#7E8C9C"/>
<rect x="525" y="471" width="1" height="3" fill="#7E8C9C"/>
<rect x="525" y="477" width="1" height="3" fill="#7E8C9C"/>
<rect x="525" y="483" width="1" height="3" fill="#7E8C9C"/>
<rect x="525" y="489" width="1" height="3" fill="#7E8C9C"/>
<rect x="525" y="495" width="1" height="3" fill="#7E8C9C"/>
<rect x="525" y="501" width="1" height="3" fill="#7E8C9C"/>
<rect x="525" y="507" width="1" height="3" fill="#7E8C9C"/>
<rect x="525" y="513" width="1" height="3" fill="#7E8C9C"/>
<rect x="525" y="519" width="1" height="3" fill="#7E8C9C"/>
<rect x="525" y="525" width="1" height="3" fill="#7E8C9C"/>
<rect x="525" y="531" width="1" height="3" fill="#7E8C9C"/>
<rect x="525" y="537" width="1" height="3" fill="#7E8C9C"/>
<rect x="525" y="543" width="1" height="3" fill="#7E8C9C"/>
<rect x="525" y="549" width="1" height="2" fill="#7E8C9C"/>
<rect x="557" y="34" width="1" height="2" fill="#7E8C9C"/>
<rect x="557" y="39" width="1" height="3" fill="#7E8C9C"/>
<rect x="557" y="45" width="1" height="3" fill="#7E8C9C"/>
<rect x="557" y="51" width="1" height="3" fill="#7E8C9C"/>
<rect x="557" y="57" width="1" height="3" fill="#7E8C9C"/>
<rect x="557" y="63" width="1" height="3" fill="#7E8C9C"/>
<rect x="557" y="69" width="1" height="3" fill="#7E8C9C"/>
<rect x="557" y="75" width="1" height="3" fill="#7E8C9C"/>
<rect x="557" y="81" width="1" height="3" fill="#7E8C9C"/>
<rect x="557" y="87" width="1" height="3" fill="#7E8C9C"/>
<rect x="557" y="93" width="1" height="3" fill="#7E8C9C"/>
<rect x="557" y="99" width="1" height="3" fill="#7E8C9C"/>
<rect x="557" y="105" width="1" height="3" fill="#7E8C9C"/>
<rect x="557" y="111" width="1" height="3" fill="#7E8C9C"/>
<rect x="557" y="117" width="1" height="3" fill="#7E8C9C"/>
<rect x="557" y="123" width="1" height="3" fill="#7E8C9C"/>
<rect x="557" y="129" width="1" height="3" fill="#7E8C9C"/>
<rect x="557" y="135" width="1" height="3" fill="#7E8C9C"/>
<rect x="557" y="141" width="1" height="3" fill="#7E8C9C"/>
<rect x="557" y="147" width="1" height="3" fill="#7E8C9C"/>
<rect x="557" y="153" width="1" height="3" fill="#7E8C9C"/>
<rect x="557" y="159" width="1" height="3" fill="#7E8C9C"/>
<rect x="557" y="165" width="1" height="3" fill="#7E8C9C"/>
<rect x="557" y="171" width="1" height="3" fill="#7E8C9C"/>
<rect x="557" y="177" width="1" height="3" fill="#7E8C9C"/>
<rect x="557" y="183" width="1" height="3" fill="#7E8C9C"/>
<rect x="557" y="189" width="1" height="3" fill="#7E8C9C"/>
<rect x="557" y="195" width="1" height="3" fill="#7E8C9C"/>
<rect x="557" y="201" width="1" height="3" fill="#7E8C9C"/>
<rect x="557" y="207" width="1" height="3" fill="#7E8C9C"/>
<rect x="557" y="213" width="1" height="3" fill="#7E8C9C"/>
<rect x="557" y="219" width="1" height="3" fill="#7E8C9C"/>
<rect x="557" y="225" width="1" height="3" fill="#7E8C9C"/>
<rect x="557" y="231" width="1" height="3" fill="#7E8C9C"/>
<rect x="557" y="237" width="1" height="3" fill="#7E8C9C"/>
<rect x="557" y="243" width="1" height="3" fill="#7E8C9C"/>
<rect x="557" y="249" width="1" height="3" fill="#7E8C9C"/>
<rect x="557" y="255" width="1" height="3" fill="#7E8C9C"/>
<rect x="557" y="261" width="1" height="3" fill="#7E8C9C"/>
<rect x="557" y="267" width="1" height="3" fill="#7E8C9C"/>
<rect x="557" y="273" width="1" height="3" fill="#7E8C9C"/>
<rect x="557" y="279" width="1" height="3" fill="#7E8C9C"/>
<rect x="557" y="285" width="1" height="3" fill="#7E8C9C"/>
<rect x="557" y="291" width="1" height="3" fill="#7E8C9C"/>
<rect x="557" y="297" width="1" height="3" fill="#7E8C9C"/>
<rect x="557" y="303" width="1" height="3" fill="#7E8C9C"/>
<rect x="557" y="309" width="1" height="3" fill="#7E8C9C"/>
<rect x="557" y="315" width="1" height="3" fill="#7E8C9C"/>
<rect x="557" y="321" width="1" height="3" fill="#7E8C9C"/>
<rect x="557" y="327" width="1" height="3" fill="#7E8C9C"/>
<rect x="557" y="333" width="1" height="3" fill="#7E8C9C"/>
<rect x="557" y="339" width="1" height="3" fill="#7E8C9C"/>
<rect x="557" y="345" width="1" height="3" fill="#7E8C9C"/>
<rect x="557" y="351" width="1" height="3" fill="#7E8C9C"/>
<rect x="557" y="357" width="1" height="3" fill="#7E8C9C"/>
<rect x="557" y="363" width="1" height="3" fill="#7E8C9C"/>
<rect x="557" y="369" width="1" height="3" fill="#7E8C9C"/>
<rect x="557" y="375" width="1" height="3" fill="#7E8C9C"/>
<rect x="557" y="381" width="1" height="3" fill="#7E8C9C"/>
<rect x="557" y="387" width="1" height="3" fill="#7E8C9C"/>
<rect x="557" y="393" width="1" height="3" fill="#7E8C9C"/>
<rect x="557" y="399" width="1" height="3" fill="#7E8C9C"/>
<rect x="557" y="405" width="1" height="3" fill="#7E8C9C"/>
<rect x="557" y="411" width="1" height="3" fill="#7E8C9C"/>
<rect x="557" y="417" width="1" height="3" fill="#7E8C9C"/>
<rect x="557" y="423" width="1" height="3" fill="#7E8C9C"/>
<rect x="557" y="429" width="1" height="3" fill="#7E8C9C"/>
<rect x="557" y="435" width="1" height="3" fill="#7E8C9C"/>
<rect x="557" y="441" width="1" height="3" fill="#7E8C9C"/>
<rect x="557" y="447" width="1" height="3" fill="#7E8C9C"/>
<rect x="557" y="453" width="1" height="3" fill="#7E8C9C"/>
<rect x="557" y="459" width="1" height="3" fill="#7E8C9C"/>
<rect x="557" y="465" width="1" height="3" fill="#7E8C9C"/>
<rect x="557" y="471" width="1" height="3" fill="#7E8C9C"/>
<rect x="557" y="477" width="1" height="3" fill="#7E8C9C"/>
<rect x="557" y="483" width="1" height="3" fill="#7E8C9C"/>
<rect x="557" y="489" width="1" height="3" fill="#7E8C9C"/>
<rect x="557" y="495" width="1" height="3" fill="#7E8C9C"/>
<rect x="557" y="501" width="1" height="3" fill="#7E8C9C"/>
<rect x="557" y="507" width="1" height="3" fill="#7E8C9C"/>
<rect x="557" y="513" width="1" height="3" fill="#7E8C9C"/>
<rect x="557" y="519" width="1" height="3" fill="#7E8C9C"/>
<rect x="557" y="525" width="1" height="3" fill="#7E8C9C"/>
<rect x="557" y="531" width="1" height="3" fill="#7E8C9C"/>
<rect x="557" y="537" width="1" height="3" fill="#7E8C9C"/>
<rect x="557" y="543" width="1" height="3" fill="#7E8C9C"/>
<rect x="557" y="549" width="1" height="2" fill="#7E8C9C"/>
<rect x="589" y="34" width="1" height="2" fill="#7E8C9C"/>
<rect x="589" y="39" width="1" height="3" fill="#7E8C9C"/>
<rect x="589" y="45" width="1" height="3" fill="#7E8C9C"/>
<rect x="589" y="51" width="1" height="3" fill="#7E8C9C"/>
<rect x="589" y="57" width="1" height="3" fill="#7E8C9C"/>
<rect x="589" y="63" width="1" height="3" fill="#7E8C9C"/>
<rect x="589" y="69" width="1" height="3" fill="#7E8C9C"/>
<rect x="589" y="75" width="1" height="3" fill="#7E8C9C"/>
<rect x="589" y="81" width="1" height="3" fill="#7E8C9C"/>
<rect x="589" y="87" width="1" height="3" fill="#7E8C9C"/>
<rect x="589" y="93" width="1" height="3" fill="#7E8C9C"/>
<rect x="589" y="99" width="1" height="3" fill="#7E8C9C"/>
<rect x="589" y="105" width="1" height="3" fill="#7E8C9C"/>
<rect x="589" y="111" width="1" height="3" fill="#7E8C9C"/>
<rect x="589" y="117" width="1" height="3" fill="#7E8C9C"/>
<rect x="589" y="123" width="1" height="3" fill="#7E8C9C"/>
<rect x="589" y="129" width="1" height="3" fill="#7E8C9C"/>
<rect x="589" y="135" width="1" height="3" fill="#7E8C9C"/>
<rect x="589" y="141" width="1" height="3" fill="#7E8C9C"/>
<rect x="589" y="147" width="1" height="3" fill="#7E8C9C"/>
<rect x="589" y="153" width="1" height="3" fill="#7E8C9C"/>
<rect x="589" y="159" width="1" height="3" fill="#7E8C9C"/>
<rect x="589" y="165" width="1" height="3" fill="#7E8C9C"/>
<rect x="589" y="171" width="1" height="3" fill="#7E8C9C"/>
<rect x="589" y="177" width="1" height="3" fill="#7E8C9C"/>
<rect x="589" y="183" width="1" height="3" fill="#7E8C9C"/>
<rect x="589" y="189" width="1" height="3" fill="#7E8C9C"/>
<rect x="589" y="195" width="1" height="3" fill="#7E8C9C"/>
<rect x="589" y="201" width="1" height="3" fill="#7E8C9C"/>
<rect x="589" y="207" width="1" height="3" fill="#7E8C9C"/>
<rect x="589" y="213" width="1" height="3" fill="#7E8C9C"/>
<rect x="589" y="219" width="1" height="3" fill="#7E8C9C"/>
<rect x="589" y="225" width="1" height="3" fill="#7E8C9C"/>
<rect x="589" y="231" width="1" height="3" fill="#7E8C9C"/>
<rect x="589" y="237" width="1" height="3" fill="#7E8C9C"/>
<rect x="589" y="243" width="1" height="3" fill="#7E8C9C"/>
<rect x="589" y="249" width="1" height="3" fill="#7E8C9C"/>
<rect x="589" y="255" width="1" height="3" fill="#7E8C9C"/>
<rect x="589" y="261" width="1" height="3" fill="#7E8C9C"/>
<rect x="589" y="267" width="1" height="3" fill="#7E8C9C"/>
<rect x="589" y="273" width="1" height="3" fill="#7E8C9C"/>
<rect x="589" y="279" width="1" height="3" fill="#7E8C9C"/>
<rect x="589" y="285" width="1" height="3" fill="#7E8C9C"/>
<rect x="589" y="291" width="1" height="3" fill="#7E8C9C"/>
<rect x="589" y="297" width="1" height="3" fill="#7E8C9C"/>
<rect x="589" y="303" width="1" height="3" fill="#7E8C9C"/>
<rect x="589" y="309" width="1" height="3" fill="#7E8C9C"/>
<rect x="589" y="315" width="1" height="3" fill="#7E8C9C"/>
<rect x="589" y="321" width="1" height="3" fill="#7E8C9C"/>
<rect x="589" y="327" width="1" height="3" fill="#7E8C9C"/>
<rect x="589" y="333" width="1" height="3" fill="#7E8C9C"/>
<rect x="589" y="339" width="1" height="3" fill="#7E8C9C"/>
<rect x="589" y="345" width="1" height="3" fill="#7E8C9C"/>
<rect x="589" y="351" width="1" height="3" fill="#7E8C9C"/>
<rect x="589" y="357" width="1" height="3" fill="#7E8C9C"/>
<rect x="589" y="363" width="1" height="3" fill="#7E8C9C"/>
<rect x="589" y="369" width="1" height="3" fill="#7E8C9C"/>
<rect x="589" y="375" width="1" height="3" fill="#7E8C9C"/>
<rect x="589" y="381" width="1" height="3" fill="#7E8C9C"/>
<rect x="589" y="387" width="1" height="3" fill="#7E8C9C"/>
<rect x="589" y="393" width="1" height="3" fill="#7E8C9C"/>
<rect x="589" y="399" width="1" height="3" fill="#7E8C9C"/>
<rect x="589" y="405" width="1" height="3" fill="#7E8C9C"/>
<rect x="589" y="411" width="1" height="3" fill="#7E8C9C"/>
<rect x="589" y="417" width="1" height="3" fill="#7E8C9C"/>
<rect x="589" y="423" width="1" height="3" fill="#7E8C9C"/>
<rect x="589" y="429" width="1" height="3" fill="#7E8C9C"/>
<rect x="589" y="435" width="1" height="3" fill="#7E8C9C"/>
<rect x="589" y="441" width="1" height="3" fill="#7E8C9C"/>
<rect x="589" y="447" width="1" height="3" fill="#7E8C9C"/>
<rect x="589" y="453" width="1" height="3" fill="#7E8C9C"/>
<rect x="589" y="459" width="1" height="3" fill="#7E8C9C"/>
<rect x="589" y="465" width="1" height="3" fill="#7E8C9C"/>
<rect x="589" y="471" width="1" height="3" fill="#7E8C9C"/>
<rect x="589" y="477" width="1" height="3" fill="#7E8C9C"/>
<rect x="589" y="483" width="1" height="3" fill="#7E8C9C"/>
<rect x="589" y="489" width="1" height="3" fill="#7E8C9C"/>
<rect x="589" y="495" width="1" height="3" fill="#7E8C9C"/>
<rect x="589" y="501" width="1" height="3" fill="#7E8C9C"/>
<rect x="589" y="507" width="1" height="3" fill="#7E8C9C"/>
<rect x="589" y="513" width="1" height="3" fill="#7E8C9C"/>
<rect x="589" y="519" width="1" height="3" fill="#7E8C9C"/>
<rect x="589" y="525" width="1" height="3" fill="#7E8C9C"/>
<rect x="589" y="531" width="1" height="3" fill="#7E8C9C"/>
<rect x="589" y="537" width="1" height="3" fill="#7E8C9C"/>
<rect x="589" y="543" width="1" height="3" fill="#7E8C9C"/>
<rect x="589" y="549" width="1" height="2" fill="#7E8C9C"/>
<rect x="621" y="34" width="1" height="2" fill="#7E8C9C"/>
<rect x="621" y="39" width="1" height="3" fill="#7E8C9C"/>
<rect x="621" y="45" width="1" height="3" fill="#7E8C9C"/>
<rect x="621" y="51" width="1" height="3" fill="#7E8C9C"/>
<rect x="621" y="57" width="1" height="3" fill="#7E8C9C"/>
<rect x="621" y="63" width="1" height="3" fill="#7E8C9C"/>
<rect x="621" y="69" width="1" height="3" fill="#7E8C9C"/>
<rect x="621" y="75" width="1" height="3" fill="#7E8C9C"/>
<rect x="621" y="81" width="1" height="3" fill="#7E8C9C"/>
<rect x="621" y="87" width="1" height="3" fill="#7E8C9C"/>
<rect x="621" y="93" width="1" height="3" fill="#7E8C9C"/>
<rect x="621" y="99" width="1" height="3" fill="#7E8C9C"/>
<rect x="621" y="105" width="1" height="3" fill="#7E8C9C"/>
<rect x="621" y="111" width="1" height="3" fill="#7E8C9C"/>
<rect x="621" y="117" width="1" height="3" fill="#7E8C9C"/>
<rect x="621" y="123" width="1" height="3" fill="#7E8C9C"/>
<rect x="621" y="129" width="1" height="3" fill="#7E8C9C"/>
<rect x="621" y="135" width="1" height="3" fill="#7E8C9C"/>
<rect x="621" y="141" width="1" height="3" fill="#7E8C9C"/>
<rect x="621" y="147" width="1" height="3" fill="#7E8C9C"/>
<rect x="621" y="153" width="1" height="3" fill="#7E8C9C"/>
<rect x="621" y="159" width="1" height="3" fill="#7E8C9C"/>
<rect x="621" y="165" width="1" height="3" fill="#7E8C9C"/>
<rect x="621" y="171" width="1" height="3" fill="#7E8C9C"/>
<rect x="621" y="177" width="1" height="3" fill="#7E8C9C"/>
<rect x="621" y="183" width="1" height="3" fill="#7E8C9C"/>
<rect x="621" y="189" width="1" height="3" fill="#7E8C9C"/>
<rect x="621" y="195" width="1" height="3" fill="#7E8C9C"/>
<rect x="621" y="201" width="1" height="3" fill="#7E8C9C"/>
<rect x="621" y="207" width="1" height="3" fill="#7E8C9C"/>
<rect x="621" y="213" width="1" height="3" fill="#7E8C9C"/>
<rect x="621" y="219" width="1" height="3" fill="#7E8C9C"/>
<rect x="621" y="225" width="1" height="3" fill="#7E8C9C"/>
<rect x="621" y="231" width="1" height="3" fill="#7E8C9C"/>
<rect x="621" y="237" width="1" height="3" fill="#7E8C9C"/>
<rect x="621" y="243" width="1" height="3" fill="#7E8C9C"/>
<rect x="621" y="249" width="1" height="3" fill="#7E8C9C"/>
<rect x="621" y="255" width="1" height="3" fill="#7E8C9C"/>
<rect x="621" y="261" width="1" height="3" fill="#7E8C9C"/>
<rect x="621" y="267" width="1" height="3" fill="#7E8C9C"/>
<rect x="621" y="273" width="1" height="3" fill="#7E8C9C"/>
<rect x="621" y="279" width="1" height="3" fill="#7E8C9C"/>
<rect x="621" y="285" width="1" height="3" fill="#7E8C9C"/>
<rect x="621" y="291" width="1" height="3" fill="#7E8C9C"/>
<rect x="621" y="297" width="1" height="3" fill="#7E8C9C"/>
<rect x="621" y="303" width="1" height="3" fill="#7E8C9C"/>
<rect x="621" y="309" width="1" height="3" fill="#7E8C9C"/>
<rect x="621" y="315" width="1" height="3" fill="#7E8C9C"/>
<rect x="621" y="321" width="1" height="3" fill="#7E8C9C"/>
<rect x="621" y="327" width="1" height="3" fill="#7E8C9C"/>
<rect x="621" y="333" width="1" height="3" fill="#7E8C9C"/>
<rect x="621" y="339" width="1" height="3" fill="#7E8C9C"/>
<rect x="621" y="345" width="1" height="3" fill="#7E8C9C"/>
<rect x="621" y="351" width="1" height="3" fill="#7E8C9C"/>
<rect x="621" y="357" width="1" height="3" fill="#7E8C9C"/>
<rect x="621" y="363" width="1" height="3" fill="#7E8C9C"/>
<rect x="621" y="369" width="1" height="3" fill="#7E8C9C"/>
<rect x="621" y="375" width="1" height="3" fill="#7E8C9C"/>
<rect x="621" y="381" width="1" height="3" fill="#7E8C9C"/>
<rect x="621" y="387" width="1" height="3" fill="#7E8C9C"/>
<rect x="621" y="393" width="1" height="3" fill="#7E8C9C"/>
<rect x="621" y="399" width="1" height="3" fill="#7E8C9C"/>
<rect x="621" y="405" width="1" height="3" fill="#7E8C9C"/>
<rect x="621" y="411" width="1" height="3" fill="#7E8C9C"/>
<rect x="621" y="417" width="1" height="3" fill="#7E8C9C"/>
<rect x="621" y="423" width="1" height="3" fill="#7E8C9C"/>
<rect x="621" y="429" width="1" height="3" fill="#7E8C9C"/>
<rect x="621" y="435" width="1" height="3" fill="#7E8C9C"/>
<rect x="621" y="441" width="1" height="3" fill="#7E8C9C"/>
<rect x="621" y="447" width="1" height="3" fill="#7E8C9C"/>
<rect x="621" y="453" width="1" height="3" fill="#7E8C9C"/>
<rect x="621" y="459" width="1" height="3" fill="#7E8C9C"/>
<rect x="621" y="465" width="1" height="3" fill="#7E8C9C"/>
<rect x="621" y="471" width="1" height="3" fill="#7E8C9C"/>
<rect x="621" y="477" width="1" height="3" fill="#7E8C9C"/>
<rect x="621" y="483" width="1" height="3" fill="#7E8C9C"/>
<rect x="621" y="489" width="1" height="3" fill="#7E8C9C"/>
<rect x="621" y="495" width="1" height="3" fill="#7E8C9C"/>
<rect x="621" y="501" width="1" height="3" fill="#7E8C9C"/>
<rect x="621" y="507" width="1" height="3" fill="#7E8C9C"/>
<rect x="621" y="513" width="1" height="3" fill="#7E8C9C"/>
<rect x="621" y="519" width="1" height="3" fill="#7E8C9C"/>
<rect x="621" y="525" width="1" height="3" fill="#7E8C9C"/>
<rect x="621" y="531" width="1" height="3" fill="#7E8C9C"/>
<rect x="621" y="537" width="1" height="3" fill="#7E8C9C"/>
<rect x="621" y="543" width="1" height="3" fill="#7E8C9C"/>
<rect x="621" y="549" width="1" height="2" fill="#7E8C9C"/>
<rect x="653" y="34" width="1" height="2" fill="#7E8C9C"/>
<rect x="653" y="39" width="1" height="3" fill="#7E8C9C"/>
<rect x="653" y="45" width="1" height="3" fill="#7E8C9C"/>
<rect x="653" y="51" width="1" height="3" fill="#7E8C9C"/>
<rect x="653" y="57" width="1" height="3" fill="#7E8C9C"/>
<rect x="653" y="63" width="1" height="3" fill="#7E8C9C"/>
<rect x="653" y="69" width="1" height="3" fill="#7E8C9C"/>
<rect x="653" y="75" width="1" height="3" fill="#7E8C9C"/>
<rect x="653" y="81" width="1" height="3" fill="#7E8C9C"/>
<rect x="653" y="87" width="1" height="3" fill="#7E8C9C"/>
<rect x="653" y="93" width="1" height="3" fill="#7E8C9C"/>
<rect x="653" y="99" width="1" height="3" fill="#7E8C9C"/>
<rect x="653" y="105" width="1" height="3" fill="#7E8C9C"/>
<rect x="653" y="111" width="1" height="3" fill="#7E8C9C"/>
<rect x="653" y="117" width="1" height="3" fill="#7E8C9C"/>
<rect x="653" y="123" width="1" height="3" fill="#7E8C9C"/>
<rect x="653" y="129" width="1" height="3" fill="#7E8C9C"/>
<rect x="653" y="135" width="1" height="3" fill="#7E8C9C"/>
<rect x="653" y="141" width="1" height="3" fill="#7E8C9C"/>
<rect x="653" y="147" width="1" height="3" fill="#7E8C9C"/>
<rect x="653" y="153" width="1" height="3" fill="#7E8C9C"/>
<rect x="653" y="159" width="1" height="3" fill="#7E8C9C"/>
<rect x="653" y="165" width="1" height="3" fill="#7E8C9C"/>
<rect x="653" y="171" width="1" height="3" fill="#7E8C9C"/>
<rect x="653" y="177" width="1" height="3" fill="#7E8C9C"/>
<rect x="653" y="183" width="1" height="3" fill="#7E8C9C"/>
<rect x="653" y="189" width="1" height="3" fill="#7E8C9C"/>
<rect x="653" y="195" width="1" height="3" fill="#7E8C9C"/>
<rect x="653" y="201" width="1" height="3" fill="#7E8C9C"/>
<rect x="653" y="207" width="1" height="3" fill="#7E8C9C"/>
<rect x="653" y="213" width="1" height="3" fill="#7E8C9C"/>
<rect x="653" y="219" width="1" height="3" fill="#7E8C9C"/>
<rect x="653" y="225" width="1" height="3" fill="#7E8C9C"/>
<rect x="653" y="231" width="1" height="3" fill="#7E8C9C"/>
<rect x="653" y="237" width="1" height="3" fill="#7E8C9C"/>
<rect x="653" y="243" width="1" height="3" fill="#7E8C9C"/>
<rect x="653" y="249" width="1" height="3" fill="#7E8C9C"/>
<rect x="653" y="255" width="1" height="3" fill="#7E8C9C"/>
<rect x="653" y="261" width="1" height="3" fill="#7E8C9C"/>
<rect x="653" y="267" width="1" height="3" fill="#7E8C9C"/>
<rect x="653" y="273" width="1" height="3" fill="#7E8C9C"/>
<rect x="653" y="279" width="1" height="3" fill="#7E8C9C"/>
<rect x="653" y="285" width="1" height="3" fill="#7E8C9C"/>
<rect x="653" y="291" width="1" height="3" fill="#7E8C9C"/>
<rect x="653" y="297" width="1" height="3" fill="#7E8C9C"/>
<rect x="653" y="303" width="1" height="3" fill="#7E8C9C"/>
<rect x="653" y="309" width="1" height="3" fill="#7E8C9C"/>
<rect x="653" y="315" width="1" height="3" fill="#7E8C9C"/>
<rect x="653" y="321" width="1" height="3" fill="#7E8C9C"/>
<rect x="653" y="327" width="1" height="3" fill="#7E8C9C"/>
<rect x="653" y="333" width="1" height="3" fill="#7E8C9C"/>
<rect x="653" y="339" width="1" height="3" fill="#7E8C9C"/>
<rect x="653" y="345" width="1" height="3" fill="#7E8C9C"/>
<rect x="653" y="351" width="1" height="3" fill="#7E8C9C"/>
<rect x="653" y="357" width="1" height="3" fill="#7E8C9C"/>
<rect x="653" y="363" width="1" height="3" fill="#7E8C9C"/>
<rect x="653" y="369" width="1" height="3" fill="#7E8C9C"/>
<rect x="653" y="375" width="1" height="3" fill="#7E8C9C"/>
<rect x="653" y="381" width="1" height="3" fill="#7E8C9C"/>
<rect x="653" y="387" width="1" height="3" fill="#7E8C9C"/>
<rect x="653" y="393" width="1" height="3" fill="#7E8C9C"/>
<rect x="653" y="399" width="1" height="3" fill="#7E8C9C"/>
<rect x="653" y="405" width="1" height="3" fill="#7E8C9C"/>
<rect x="653" y="411" width="1" height="3" fill="#7E8C9C"/>
<rect x="653" y="417" width="1" height="3" fill="#7E8C9C"/>
<rect x="653" y="423" width="1" height="3" fill="#7E8C9C"/>
<rect x="653" y="429" width="1" height="3" fill="#7E8C9C"/>
<rect x="653" y="435" width="1" height="3" fill="#7E8C9C"/>
<rect x="653" y="441" width="1" height="3" fill="#7E8C9C"/>
<rect x="653" y="447" width="1" height="3" fill="#7E8C9C"/>
<rect x="653" y="453" width="1" height="3" fill="#7E8C9C"/>
<rect x="653" y="459" width="1" height="3" fill="#7E8C9C"/>
<rect x="653" y="465" width="1" height="3" fill="#7E8C9C"/>
<rect x="653" y="471" width="1" height="3" fill="#7E8C9C"/>
<rect x="653" y="477" width="1" height="3" fill="#7E8C9C"/>
<rect x="653" y="483" width="1" height="3" fill="#7E8C9C"/>
<rect x="653" y="489" width="1" height="3" fill="#7E8C9C"/>
<rect x="653" y="495" width="1" height="3" fill="#7E8C9C"/>
<rect x="653" y="501" width="1" height="3" fill="#7E8C9C"/>
<rect x="653" y="507" width="1" height="3" fill="#7E8C9C"/>
<rect x="653" y="513" width="1" height="3" fill="#7E8C9C"/>
<rect x="653" y="519" width="1" height="3" fill="#7E8C9C"/>
<rect x="653" y="525" width="1" height="3" fill="#7E8C9C"/>
<rect x="653" y="531" width="1" height="3" fill="#7E8C9C"/>
<rect x="653" y="537" width="1" height="3" fill="#7E8C9C"/>
<rect x="653" y="543" width="1" height="3" fill="#7E8C9C"/>
<rect x="653" y="549" width="1" height="2" fill="#7E8C9C"/>
<rect x="14" y="550" width="3" height="1" fill="#7E8C9C"/>
<rect x="20" y="550" width="3" height="1" fill="#7E8C9C"/>
<rect x="26" y="550" width="3" height="1" fill="#7E8C9C"/>
<rect x="32" y="550" width="3" height="1" fill="#7E8C9C"/>
<rect x="38" y="550" width="3" height="1" fill="#7E8C9C"/>
<rect x="44" y="550" width="3" height="1" fill="#7E8C9C"/>
<rect x="50" y="550" width="3" height="1" fill="#7E8C9C"/>
<rect x="56" y="550" width="3" height="1" fill="#7E8C9C"/>
<rect x="62" y="550" width="3" height="1" fill="#7E8C9C"/>
<rect x="68" y="550" width="3" height="1" fill="#7E8C9C"/>
<rect x="74" y="550" width="3" height="1" fill="#7E8C9C"/>
<rect x="80" y="550" width="3" height="1" fill="#7E8C9C"/>
<rect x="86" y="550" width="3" height="1" fill="#7E8C9C"/>
<rect x="92" y="550" width="3" height="1" fill="#7E8C9C"/>
<rect x="98" y="550" width="3" height="1" fill="#7E8C9C"/>
<rect x="104" y="550" width="3" height="1" fill="#7E8C9C"/>
<rect x="110" y="550" width="3" height="1" fill="#7E8C9C"/>
<rect x="116" y="550" width="3" height="1" fill="#7E8C9C"/>
<rect x="122" y="550" width="3" height="1" fill="#7E8C9C"/>
<rect x="128" y="550" width="3" height="1" fill="#7E8C9C"/>
<rect x="134" y="550" width="3" height="1" fill="#7E8C9C"/>
<rect x="140" y="550" width="3" height="1" fill="#7E8C9C"/>
<rect x="146" y="550" width="3" height="1" fill="#7E8C9C"/>
<rect x="152" y="550" width="3" height="1" fill="#7E8C9C"/>
<rect x="158" y="550" width="3" height="1" fill="#7E8C9C"/>
<rect x="164" y="550" width="3" height="1" fill="#7E8C9C"/>
<rect x="170" y="550" width="3" height="1" fill="#7E8C9C"/>
<rect x="176" y="550" width="3" height="1" fill="#7E8C9C"/>
<rect x="182" y="550" width="3" height="1" fill="#7E8C9C"/>
<rect x="188" y="550" width="3" height="1" fill="#7E8C9C"/>
<rect x="194" y="550" width="3" height="1" fill="#7E8C9C"/>
<rect x="200" y="550" width="3" height="1" fill="#7E8C9C"/>
<rect x="206" y="550" width="3" height="1" fill="#7E8C9C"/>
<rect x="212" y="550" width="3" height="1" fill="#7E8C9C"/>
<rect x="218" y="550" width="3" height="1" fill="#7E8C9C"/>
<rect x="224" y="550" width="3" height="1" fill="#7E8C9C"/>
<rect x="230" y="550" width="3" height="1" fill="#7E8C9C"/>
<rect x="236" y="550" width="3" height="1" fill="#7E8C9C"/>
<rect x="242" y="550" width="3" height="1" fill="#7E8C9C"/>
<rect x="248" y="550" width="3" height="1" fill="#7E8C9C"/>
<rect x="254" y="550" width="3" height="1" fill="#7E8C9C"/>
<rect x="260" y="550" width="3" height="1" fill="#7E8C9C"/>
<rect x="266" y="550" width="3" height="1" fill="#7E8C9C"/>
<rect x="272" y="550" width="3" height="1" fill="#7E8C9C"/>
<rect x="278" y="550" width="3" height="1" fill="#7E8C9C"/>
<rect x="284" y="550" width="3" height="1" fill="#7E8C9C"/>
<rect x="290" y="550" width="3" height="1" fill="#7E8C9C"/>
<rect x="296" y="550" width="3" height="1" fill="#7E8C9C"/>
<rect x="302" y="550" width="3" height="1" fill="#7E8C9C"/>
<rect x="308" y="550" width="3" height="1" fill="#7E8C9C"/>
<rect x="314" y="550" width="3" height="1" fill="#7E8C9C"/>
<rect x="320" y="550" width="3" height="1" fill="#7E8C9C"/>
<rect x="326" y="550" width="3" height="1" fill="#7E8C9C"/>
<rect x="332" y="550" width="3" height="1" fill="#7E8C9C"/>
<rect x="338" y="550" width="3" height="1" fill="#7E8C9C"/>
<rect x="344" y="550" width="3" height="1" fill="#7E8C9C"/>
<rect x="350" y="550" width="3" height="1" fill="#7E8C9C"/>
<rect x="356" y="550" width="3" height="1" fill="#7E8C9C"/>
<rect x="362" y="550" width="3" height="1" fill="#7E8C9C"/>
<rect x="368" y="550" width="3" height="1" fill="#7E8C9C"/>
<rect x="374" y="550" width="3" height="1" fill="#7E8C9C"/>
<rect x="380" y="550" width="3" height="1" fill="#7E8C9C"/>
<rect x="386" y="550" width="3" height="1" fill="#7E8C9C"/>
<rect x="392" y="550" width="3" height="1" fill="#7E8C9C"/>
<rect x="398" y="550" width="3" height="1" fill="#7E8C9C"/>
<rect x="404" y="550" width="3" height="1" fill="#7E8C9C"/>
<rect x="410" y="550" width="3" height="1" fill="#7E8C9C"/>
<rect x="416" y="550" width="3" height="1" fill="#7E8C9C"/>
<rect x="422" y="550" width="3" height="1" fill="#7E8C9C"/>
<rect x="428" y="550" width="3" height="1" fill="#7E8C9C"/>
<rect x="434" y="550" width="3" height="1" fill="#7E8C9C"/>
<rect x="440" y="550" width="3" height="1" fill="#7E8C9C"/>
<rect x="446" y="550" width="3" height="1" fill="#7E8C9C"/>
<rect x="452" y="550" width="3" height="1" fill="#7E8C9C"/>
<rect x="458" y="550" width="3" height="1" fill="#7E8C9C"/>
<rect x="464" y="550" width="3" height="1" fill="#7E8C9C"/>
<rect x="470" y="550" width="3" height="1" fill="#7E8C9C"/>
<rect x="476" y="550" width="3" height="1" fill="#7E8C9C"/>
<rect x="482" y="550" width="3" height="1" fill="#7E8C9C"/>
<rect x="488" y="550" width="3" height="1" fill="#7E8C9C"/>
<rect x="494" y="550" width="3" height="1" fill="#7E8C9C"/>
<rect x="500" y="550" width="3" height="1" fill="#7E8C9C"/>
<rect x="506" y="550" width="3" height="1" fill="#7E8C9C"/>
<rect x="512" y="550" width="3" height="1" fill="#7E8C9C"/>
<rect x="518" y="550" width="3" height="1" fill="#7E8C9C"/>
<rect x="524" y="550" width="3" height="1" fill="#7E8C9C"/>
<rect x="530" y="550" width="3" height="1" fill="#7E8C9C"/>
<rect x="536" y="550" width="3" height="1" fill="#7E8C9C"/>
<rect x="542" y="550" width="3" height="1" fill="#7E8C9C"/>
<rect x="548" y="550" width="3" height="1" fill="#7E8C9C"/>
<rect x="554" y="550" width="3" height="1" fill="#7E8C9C"/>
<rect x="560" y="550" width="3" height="1" fill="#7E8C9C"/>
<rect x="566" y="550" width="3" height="1" fill="#7E8C9C"/>
<rect x="572" y="550" width="3" height="1" fill="#7E8C9C"/>
<rect x="578" y="550" width="3" height="1" fill="#7E8C9C"/>
<rect x="584" y="550" width="3" height="1" fill="#7E8C9C"/>
<rect x="590" y="550" width="3" height="1" fill="#7E8C9C"/>
<rect x="596" y="550" width="3" height="1" fill="#7E8C9C"/>
<rect x="602" y="550" width="3" height="1" fill="#7E8C9C"/>
<rect x="608" y="550" width="3" height="1" fill="#7E8C9C"/>
<rect x="614" y="550" width="3" height="1" fill="#7E8C9C"/>
<rect x="620" y="550" width="3" height="1" fill="#7E8C9C"/>
<rect x="626" y="550" width="3" height="1" fill="#7E8C9C"/>
<rect x="632" y="550" width="3" height="1" fill="#7E8C9C"/>
<rect x="638" y="550" width="3" height="1" fill="#7E8C9C"/>
<rect x="644" y="550" width="3" height="1" fill="#7E8C9C"/>
<rect x="650" y="550" width="3" height="1" fill="#7E8C9C"/>
<rect x="656" y="550" width="3" height="1" fill="#7E8C9C"/>
<rect x="662" y="550" width="3" height="1" fill="#7E8C9C"/>
<rect x="668" y="550" width="3" height="1" fill="#7E8C9C"/>
<rect x="674" y="550" width="3" height="1" fill="#7E8C9C"/>
<rect x="14" y="415" width="3" height="1" fill="#C8C8C8"/>
<rect x="20" y="415" width="3" height="1" fill="#C8C8C8"/>
<rect x="26" y="415" width="3" height="1" fill="#C8C8C8"/>
<rect x="32" y="415" width="3" height="1" fill="#C8C8C8"/>
<rect x="38" y="415" width="3" height="1" fill="#C8C8C8"/>
<rect x="44" y="415" width="3" height="1" fill="#C8C8C8"/>
<rect x="50" y="415" width="3" height="1" fill="#C8C8C8"/>
<rect x="56" y="415" width="3" height="1" fill="#C8C8C8"/>
<rect x="62" y="415" width="3" height="1" fill="#C8C8C8"/>
<rect x="68" y="415" width="3" height="1" fill="#C8C8C8"/>
<rect x="74" y="415" width="3" height="1" fill="#C8C8C8"/>
<rect x="80" y="415" width="3" height="1" fill="#C8C8C8"/>
<rect x="86" y="415" width="3" height="1" fill="#C8C8C8"/>
<rect x="92" y="415" width="3" height="1" fill="#C8C8C8"/>
<rect x="98" y="415" width="3" height="1" fill="#C8C8C8"/>
<rect x="104" y="415" width="3" height="1" fill="#C8C8C8"/>
<rect x="110" y="415" width="3" height="1" fill="#C8C8C8"/>
<rect x="116" y="415" width="3" height="1" fill="#C8C8C8"/>
<rect x="122" y="415" width="3" height="1" fill="#C8C8C8"/>
<rect x="128" y="415" width="3" height="1" fill="#C8C8C8"/>
<rect x="134" y="415" width="3" height="1" fill="#C8C8C8"/>
<rect x="140" y="415" width="3" height="1" fill="#C8C8C8"/>
<rect x="146" y="415" width="3" height="1" fill="#C8C8C8"/>
<rect x="152" y="415" width="3" height="1" fill="#C8C8C8"/>
<rect x="158" y="415" width="3" height="1" fill="#C8C8C8"/>
<rect x="164" y="415" width="3" height="1" fill="#C8C8C8"/>
<rect x="170" y="415" width="3" height="1" fill="#C8C8C8"/>
<rect x="176" y="415" width="3" height="1" fill="#C8C8C8"/>
<rect x="182" y="415" width="3" height="1" fill="#C8C8C8"/>
<rect x="188" y="415" width="3" height="1" fill="#C8C8C8"/>
<rect x="194" y="415" width="3" height="1" fill="#C8C8C8"/>
<rect x="200" y="415" width="3" height="1" fill="#C8C8C8"/>
<rect x="206" y="415" width="3" height="1" fill="#C8C8C8"/>
<rect x="212" y="415" width="3" height="1" fill="#C8C8C8"/>
<rect x="218" y="415" width="3" height="1" fill="#C8C8C8"/>
<rect x="224" y="415" width="3" height="1" fill="#C8C8C8"/>
<rect x="230" y="415" width="3" height="1" fill="#C8C8C8"/>
<rect x="236" y="415" width="3" height="1" fill="#C8C8C8"/>
<rect x="242" y="415" width="3" height="1" fill="#C8C8C8"/>
<rect x="248" y="415" width="3" height="1" fill="#C8C8C8"/>
<rect x="254" y="415" width="3" height="1" fill="#C8C8C8"/>
<rect x="260" y="415" width="3" height="1" fill="#C8C8C8"/>
<rect x="266" y="415" width="3" height="1" fill="#C8C8C8"/>
<rect x="272" y="415" width="3" height="1" fill="#C8C8C8"/>
<rect x="278" y="415" width="3" height="1" fill="#C8C8C8"/>
<rect x="284" y="415" width="3" height="1" fill="#C8C8C8"/>
<rect x="290" y="415" width="3" height="1" fill="#C8C8C8"/>
<rect x="296" y="415" width="3" height="1" fill="#C8C8C8"/>
<rect x="302" y="415" width="3" height="1" fill="#C8C8C8"/>
<rect x="308" y="415" width="3" height="1" fill="#C8C8C8"/>
<rect x="314" y="415" width="3" height="1" fill="#C8C8C8"/>
<rect x="320" y="415" width="3" height="1" fill="#C8C8C8"/>
<rect x="326" y="415" width="3" height="1" fill="#C8C8C8"/>
<rect x="332" y="415" width="3" height="1" fill="#C8C8C8"/>
<rect x="338" y="415" width="3" height="1" fill="#C8C8C8"/>
<rect x="344" y="415" width="3" height="1" fill="#C8C8C8"/>
<rect x="350" y="415" width="3" height="1" fill="#C8C8C8"/>
<rect x="356" y="415" width="3" height="1" fill="#C8C8C8"/>
<rect x="362" y="415" width="3" height="1" fill="#C8C8C8"/>
<rect x="368" y="415" width="3" height="1" fill="#C8C8C8"/>
<rect x="374" y="415" width="3" height="1" fill="#C8C8C8"/>
<rect x="380" y="415" width="3" height="1" fill="#C8C8C8"/>
<rect x="386" y="415" width="3" height="1" fill="#C8C8C8"/>
<rect x="392" y="415" width="3" height="1" fill="#C8C8C8"/>
<rect x="398" y="415" width="3" height="1" fill="#C8C8C8"/>
<rect x="404" y="415" width="3" height="1" fill="#C8C8C8"/>
<rect x="410" y="415" width="3" height="1" fill="#C8C8C8"/>
<rect x="416" y="415" width="3" height="1" fill="#C8C8C8"/>
<rect x="422" y="415" width="3" height="1" fill="#C8C8C8"/>
<rect x="428" y="415" width="3" height="1" fill="#C8C8C8"/>
<rect x="434" y="415" width="3" height="1" fill="#C8C8C8"/>
<rect x="440" y="415" width="3" height="1" fill="#C8C8C8"/>
<rect x="446" y="415" width="3" height="1" fill="#C8C8C8"/>
<rect x="452" y="415" width="3" height="1" fill="#C8C8C8"/>
<rect x="458" y="415" width="3" height="1" fill="#C8C8C8"/>
<rect x="464" y="415" width="3" height="1" fill="#C8C8C8"/>
<rect x="470" y="415" width="3" height="1" fill="#C8C8C8"/>
<rect x="476" y="415" width="3" height="1" fill="#C8C8C8"/>
<rect x="482" y="415" width="3" height="1" fill="#C8C8C8"/>
<rect x="488" y="415" width="3" height="1" fill="#C8C8C8"/>
<rect x="494" y="415" width="3" height="1" fill="#C8C8C8"/>
<rect x="500" y="415" width="3" height="1" fill="#C8C8C8"/>
<rect x="506" y="415" width="3" height="1" fill="#C8C8C8"/>
<rect x="512" y="415" width="3" height="1" fill="#C8C8C8"/>
<rect x="518" y="415" width="3" height="1" fill="#C8C8C8"/>
<rect x="524" y="415" width="3" height="1" fill="#C8C8C8"/>
<rect x="530" y="415" width="3" height="1" fill="#C8C8C8"/>
<rect x="536" y="415" width="3" height="1" fill="#C8C8C8"/>
<rect x="542" y="415" width="3" height="1" fill="#C8C8C8"/>
<rect x="548" y="415" width="3" height="1" fill="#C8C8C8"/>
<rect x="554" y="415" width="3" height="1" fill="#C8C8C8"/>
<rect x="560" y="415" width="3" height="1" fill="#C8C8C8"/>
<rect x="566" y="415" width="3" height="1" fill="#C8C8C8"/>
<rect x="572" y="415" width="3" height="1" fill="#C8C8C8"/>
<rect x="578" y="415" width="3" height="1" fill="#C8C8C8"/>
<rect x="584" y="415" width="3" height="1" fill="#C8C8C8"/>
<rect x="590" y="415" width="3" height="1" fill="#C8C8C8"/>
<rect x="596" y="415" width="3" height="1" fill="#C8C8C8"/>
<rect x="602" y="415" width="3" height="1" fill="#C8C8C8"/>
<rect x="608" y="415" width="3" height="1" fill="#C8C8C8"/>
<rect x="614" y="415" width="3" height="1" fill="#C8C8C8"/>
<rect x="620" y="415" width="3" height="1" fill="#C8C8C8"/>
<rect x="626" y="415" width="3" height="1" fill="#C8C8C8"/>
<rect x="632" y="415" width="3" height="1" fill="#C8C8C8"/>
<rect x="638" y="415" width="3" height="1" fill="#C8C8C8"/>
<rect x="644" y="415" width="3" height="1" fill="#C8C8C8"/>
<rect x="650" y="415" width="3" height="1" fill="#C8C8C8"/>
<rect x="656" y="415" width="3" height="1" fill="#C8C8C8"/>
<rect x="662" y="415" width="3" height="1" fill="#C8C8C8"/>
<rect x="668" y="415" width="3" height="1" fill="#C8C8C8"/>
<rect x="674" y="415" width="3" height="1" fill="#C8C8C8"/>
<rect x="14" y="517" width="3" height="1" fill="#C8C8C8"/>
<rect x="20" y="517" width="3" height="1" fill="#C8C8C8"/>
<rect x="26" y="517" width="3" height="1" fill="#C8C8C8"/>
<rect x="32" y="517" width="3" height="1" fill="#C8C8C8"/>
<rect x="38" y="517" width="3" height="1" fill="#C8C8C8"/>
<rect x="44" y="517" width="3" height="1" fill="#C8C8C8"/>
<rect x="50" y="517" width="3" height="1" fill="#C8C8C8"/>
<rect x="56" y="517" width="3" height="1" fill="#C8C8C8"/>
<rect x="62" y="517" width="3" height="1" fill="#C8C8C8"/>
<rect x="68" y="517" width="3" height="1" fill="#C8C8C8"/>
<rect x="74" y="517" width="3" height="1" fill="#C8C8C8"/>
<rect x="80" y="517" width="3" height="1" fill="#C8C8C8"/>
<rect x="86" y="517" width="3" height="1" fill="#C8C8C8"/>
<rect x="92" y="517" width="3" height="1" fill="#C8C8C8"/>
<rect x="98" y="517" width="3" height="1" fill="#C8C8C8"/>
<rect x="104" y="517" width="3" height="1" fill="#C8C8C8"/>
<rect x="110" y="517" width="3" height="1" fill="#C8C8C8"/>
<rect x="116" y="517" width="3" height="1" fill="#C8C8C8"/>
<rect x="122" y="517" width="3" height="1" fill="#C8C8C8"/>
<rect x="128" y="517" width="3" height="1" fill="#C8C8C8"/>
<rect x="134" y="517" width="3" height="1" fill="#C8C8C8"/>
<rect x="140" y="517" width="3" height="1" fill="#C8C8C8"/>
<rect x="146" y="517" width="3" height="1" fill="#C8C8C8"/>
<rect x="152" y="517" width="3" height="1" fill="#C8C8C8"/>
<rect x="158" y="517" width="3" height="1" fill="#C8C8C8"/>
<rect x="164" y="517" width="3" height="1" fill="#C8C8C8"/>
<rect x="170" y="517" width="3" height="1" fill="#C8C8C8"/>
<rect x="176" y="517" width="3" height="1" fill="#C8C8C8"/>
<rect x="182" y="517" width="3" height="1" fill="#C8C8C8"/>
<rect x="188" y="517" width="3" height="1" fill="#C8C8C8"/>
<rect x="194" y="517" width="3" height="1" fill="#C8C8C8"/>
<rect x="200" y="517" width="3" height="1" fill="#C8C8C8"/>
<rect x="206" y="517" width="3" height="1" fill="#C8C8C8"/>
<rect x="212" y="517" width="3" height="1" fill="#C8C8C8"/>
<rect x="218" y="517" width="3" height="1" fill="#C8C8C8"/>
<rect x="224" y="517" width="3" height="1" fill="#C8C8C8"/>
<rect x="230" y="517" width="3" height="1" fill="#C8C8C8"/>
<rect x="236" y="517" width="3" height="1" fill="#C8C8C8"/>
<rect x="242" y="517" width="3" height="1" fill="#C8C8C8"/>
<rect x="248" y="517" width="3" height="1" fill="#C8C8C8"/>
<rect x="254" y="517" width="3" height="1" fill="#C8C8C8"/>
<rect x="260" y="517" width="3" height="1" fill="#C8C8C8"/>
<rect x="266" y="517" width="3" height="1" fill="#C8C8C8"/>
<rect x="272" y="517" width="3" height="1" fill="#C8C8C8"/>
<rect x="278" y="517" width="3" height="1" fill="#C8C8C8"/>
<rect x="284" y="517" width="3" height="1" fill="#C8C8C8"/>
<rect x="290" y="517" width="3" height="1" fill="#C8C8C8"/>
<rect x="296" y="517" width="3" height="1" fill="#C8C8C8"/>
<rect x="302" y="517" width="3" height="1" fill="#C8C8C8"/>
<rect x="308" y="517" width="3" height="1" fill="#C8C8C8"/>
<rect x="314" y="517" width="3" height="1" fill="#C8C8C8"/>
<rect x="320" y="517" width="3" height="1" fill="#C8C8C8"/>
<rect x="326" y="517" width="3" height="1" fill="#C8C8C8"/>
<rect x="332" y="517" width="3" height="1" fill="#C8C8C8"/>
<rect x="338" y="517" width="3" height="1" fill="#C8C8C8"/>
<rect x="344" y="517" width="3" height="1" fill="#C8C8C8"/>
<rect x="350" y="517" width="3" height="1" fill="#C8C8C8"/>
<rect x="356" y="517" width="3" height="1" fill="#C8C8C8"/>
<rect x="362" y="517" width="3" height="1" fill="#C8C8C8"/>
<rect x="368" y="517" width="3" height="1" fill="#C8C8C8"/>
<rect x="374" y="517" width="3" height="1" fill="#C8C8C8"/>
<rect x="380" y="517" width="3" height="1" fill="#C8C8C8"/>
<rect x="386" y="517" width="3" height="1" fill="#C8C8C8"/>
<rect x="392" y="517" width="3" height="1" fill="#C8C8C8"/>
<rect x="398" y="517" width="3" height="1" fill="#C8C8C8"/>
<rect x="404" y="517" width="3" height="1" fill="#C8C8C8"/>
<rect x="410" y="517" width="3" height="1" fill="#C8C8C8"/>
<rect x="416" y="517" width="3" height="1" fill="#C8C8C8"/>
<rect x="422" y="517" width="3" height="1" fill="#C8C8C8"/>
<rect x="428" y="517" width="3" height="1" fill="#C8C8C8"/>
<rect x="434" y="517" width="3" height="1" fill="#C8C8C8"/>
<rect x="440" y="517" width="3" height="1" fill="#C8C8C8"/>
<rect x="446" y="517" width="3" height="1" fill="#C8C8C8"/>
<rect x="452" y="517" width="3" height="1" fill="#C8C8C8"/>
<rect x="458" y="517" width="3" height="1" fill="#C8C8C8"/>
<rect x="464" y="517" width="3" height="1" fill="#C8C8C8"/>
<rect x="470" y="517" width="3" height="1" fill="#C8C8C8"/>
<rect x="476" y="517" width="3" height="1" fill="#C8C8C8"/>
<rect x="482" y="517" width="3" height="1" fill="#C8C8C8"/>
<rect x="488" y="517" width="3" height="1" fill="#C8C8C8"/>
<rect x="494" y="517" width="3" height="1" fill="#C8C8C8"/>
<rect x="500" y="517" width="3" height="1" fill="#C8C8C8"/>
<rect x="506" y="517" width="3" height="1" fill="#C8C8C8"/>
<rect x="512" y="517" width="3" height="1" fill="#C8C8C8"/>
<rect x="518" y="517" width="3" height="1" fill="#C8C8C8"/>
<rect x="524" y="517" width="3" height="1" fill="#C8C8C8"/>
<rect x="530" y="517" width="3" height="1" fill="#C8C8C8"/>
<rect x="536" y="517" width="3" height="1" fill="#C8C8C8"/>
<rect x="542" y="517" width="3" height="1" fill="#C8C8C8"/>
<rect x="548" y="517" width="3" height="1" fill="#C8C8C8"/>
<rect x="554" y="517" width="3" height="1" fill="#C8C8C8"/>
<rect x="560" y="517" width="3" height="1" fill="#C8C8C8"/>
<rect x="566" y="517" width="3" height="1" fill="#C8C8C8"/>
<rect x="572" y="517" width="3" height="1" fill="#C8C8C8"/>
<rect x="578" y="517" width="3" height="1" fill="#C8C8C8"/>
<rect x="584" y="517" width="3" height="1" fill="#C8C8C8"/>
<rect x="590" y="517" width="3" height="1" fill="#C8C8C8"/>
<rect x="596" y="517" width="3" height="1" fill="#C8C8C8"/>
<rect x="602" y="517" width="3" height="1" fill="#C8C8C8"/>
<rect x="608" y="517" width="3" height="1" fill="#C8C8C8"/>
<rect x="614" y="517" width="3" height="1" fill="#C8C8C8"/>
<rect x="620" y="517" width="3" height="1" fill="#C8C8C8"/>
<rect x="626" y="517" width="3" height="1" fill="#C8C8C8"/>
<rect x="632" y="517" width="3" height="1" fill="#C8C8C8"/>
<rect x="638" y="517" width="3" height="1" fill="#C8C8C8"/>
<rect x="644" y="517" width="3" height="1" fill="#C8C8C8"/>
<rect x="650" y="517" width="3" height="1" fill="#C8C8C8"/>
<rect x="656" y="517" width="3" height="1" fill="#C8C8C8"/>
<rect x="662" y="517" width="3" height="1" fill="#C8C8C8"/>
<rect x="668" y="517" width="3" height="1" fill="#C8C8C8"/>
<rect x="674" y="517" width="3" height="1" fill="#C8C8C8"/>
<rect x="679" y="40" width="2" height="1" fill="#FFFFFF"/>
<rect x="679" y="73" width="2" height="1" fill="#FFFFFF"/>
<rect x="679" y="107" width="2" height="1" fill="#FFFFFF"/>
<rect x="679" y="140" width="2" height="1" fill="#FFFFFF"/>
<rect x="679" y="174" width="2" height="1" fill="#FFFFFF"/>
<rect x="679" y="207" width="2" height="1" fill="#FFFFFF"/>
<rect x="679" y="241" width="2" height="1" fill="#FFFFFF"/>
<rect x="679" y="274" width="2" height="1" fill="#FFFFFF"/>
<rect x="679" y="308" width="2" height="1" fill="#FFFFFF"/>
<rect x="679" y="341" width="2" height="1" fill="#FFFFFF"/>
<rect x="679" y="375" width="2" height="1" fill="#FFFFFF"/>
<rect x="679" y="382" width="2" height="1" fill="#FFFFFF"/>
<rect x="13" y="552" width="1" height="3" fill="#FFFFFF"/>
<rect x="77" y="552" width="1" height="3" fill="#FFFFFF"/>
<rect x="141" y="552" width="1" height="3" fill="#FFFFFF"/>
<rect x="205" y="552" width="1" height="3" fill="#FFFFFF"/>
<rect x="269" y="552" width="1" height="3" fill="#FFFFFF"/>
<rect x="333" y="552" width="1" height="3" fill="#FFFFFF"/>
<rect x="397" y="552" width="1" height="3" fill="#FFFFFF"/>
<rect x="461" y="552" width="1" height="3" fill="#FFFFFF"/>
<rect x="525" y="552" width="1" height="3" fill="#FFFFFF"/>
<rect x="589" y="552" width="1" height="3" fill="#FFFFFF"/>
<rect x="653" y="552" width="1" height="3" fill="#FFFFFF"/>
<path d="M426 34 L436 34 L431 39 Z" fill="#8A9AAA"/>
<path d="M13 545 L13 551 L19 551 Z" fill="#8A9AAA"/>
<clipPath id="mc"><rect x="13" y="34" width="665" height="344"/></clipPath>
<clipPath id="sc"><rect x="13" y="381" width="665" height="170"/></clipPath>
<g clip-path="url(#mc)">
<rect x="13" y="311" width="1" height="11" fill="#00FF00"/>
<rect x="11" y="321" width="5" height="1" fill="#00FF00"/>
<rect x="21" y="305" width="1" height="17" fill="#00FF00"/>
<rect x="19" y="309" width="5" height="13" fill="#00FF00"/>
<rect x="20" y="310" width="3" height="11" fill="#000000"/>
<rect x="29" y="304" width="1" height="18" fill="#00FF00"/>
<rect x="27" y="309" width="5" height="13" fill="#00FF00"/>
<rect x="28" y="310" width="3" height="11" fill="#FFFFFF"/>
<rect x="37" y="296" width="1" height="27" fill="#00FF00"/>
<rect x="35" y="307" width="5" height="16" fill="#00FF00"/>
<rect x="36" y="308" width="3" height="14" fill="#000000"/>
<rect x="45" y="297" width="1" height="16" fill="#00FF00"/>
<rect x="43" y="308" width="5" height="5" fill="#00FF00"/>
<rect x="44" y="309" width="3" height="3" fill="#FFFFFF"/>
<rect x="53" y="299" width="1" height="14" fill="#00FF00"/>
<rect x="51" y="308" width="5" height="5" fill="#00FF00"/>
<rect x="52" y="309" width="3" height="3" fill="#000000"/>
<rect x="61" y="301" width="1" height="9" fill="#00FF00"/>
<rect x="59" y="304" width="5" height="6" fill="#00FF00"/>
<rect x="60" y="305" width="3" height="4" fill="#000000"/>
<rect x="69" y="285" width="1" height="23" fill="#00FF00"/>
<rect x="67" y="290" width="5" height="14" fill="#00FF00"/>
<rect x="68" y="291" width="3" height="12" fill="#000000"/>
<rect x="77" y="279" width="1" height="15" fill="#00FF00"/>
<rect x="75" y="288" width="5" height="3" fill="#00FF00"/>
<rect x="76" y="289" width="3" height="1" fill="#000000"/>
<rect x="85" y="280" width="1" height="28" fill="#00FF00"/>
<rect x="83" y="288" width="5" height="20" fill="#00FF00"/>
<rect x="84" y="289" width="3" height="18" fill="#FFFFFF"/>
<rect x="93" y="302" width="1" height="37" fill="#00FF00"/>
<rect x="91" y="308" width="5" height="15" fill="#00FF00"/>
<rect x="92" y="309" width="3" height="13" fill="#FFFFFF"/>
<rect x="101" y="304" width="1" height="21" fill="#00FF00"/>
<rect x="99" y="315" width="5" height="10" fill="#00FF00"/>
<rect x="100" y="316" width="3" height="8" fill="#000000"/>
<rect x="109" y="291" width="1" height="27" fill="#00FF00"/>
<rect x="107" y="299" width="5" height="19" fill="#00FF00"/>
<rect x="108" y="300" width="3" height="17" fill="#000000"/>
<rect x="117" y="291" width="1" height="11" fill="#00FF00"/>
<rect x="115" y="299" width="5" height="2" fill="#00FF00"/>
<rect x="125" y="285" width="1" height="16" fill="#00FF00"/>
<rect x="123" y="296" width="5" height="5" fill="#00FF00"/>
<rect x="124" y="297" width="3" height="3" fill="#000000"/>
<rect x="133" y="277" width="1" height="20" fill="#00FF00"/>
<rect x="131" y="281" width="5" height="16" fill="#00FF00"/>
<rect x="132" y="282" width="3" height="14" fill="#000000"/>
<rect x="141" y="248" width="1" height="34" fill="#00FF00"/>
<rect x="139" y="255" width="5" height="26" fill="#00FF00"/>
<rect x="140" y="256" width="3" height="24" fill="#000000"/>
<rect x="149" y="193" width="1" height="64" fill="#00FF00"/>
<rect x="147" y="196" width="5" height="60" fill="#00FF00"/>
<rect x="148" y="197" width="3" height="58" fill="#000000"/>
<rect x="157" y="174" width="1" height="27" fill="#00FF00"/>
<rect x="155" y="182" width="5" height="16" fill="#00FF00"/>
<rect x="156" y="183" width="3" height="14" fill="#000000"/>
<rect x="165" y="160" width="1" height="29" fill="#00FF00"/>
<rect x="163" y="163" width="5" height="20" fill="#00FF00"/>
<rect x="164" y="164" width="3" height="18" fill="#000000"/>
<rect x="173" y="163" width="1" height="23" fill="#00FF00"/>
<rect x="171" y="163" width="5" height="15" fill="#00FF00"/>
<rect x="172" y="164" width="3" height="13" fill="#FFFFFF"/>
<rect x="181" y="175" width="1" height="16" fill="#00FF00"/>
<rect x="179" y="177" width="5" height="14" fill="#00FF00"/>
<rect x="180" y="178" width="3" height="12" fill="#FFFFFF"/>
<rect x="189" y="188" width="1" height="11" fill="#00FF00"/>
<rect x="187" y="190" width="5" height="6" fill="#00FF00"/>
<rect x="188" y="191" width="3" height="4" fill="#FFFFFF"/>
<rect x="197" y="187" width="1" height="13" fill="#00FF00"/>
<rect x="195" y="194" width="5" height="6" fill="#00FF00"/>
<rect x="196" y="195" width="3" height="4" fill="#FFFFFF"/>
<rect x="205" y="189" width="1" height="20" fill="#00FF00"/>
<rect x="203" y="199" width="5" height="2" fill="#00FF00"/>
<rect x="213" y="195" width="1" height="39" fill="#00FF00"/>
<rect x="211" y="200" width="5" height="22" fill="#00FF00"/>
<rect x="212" y="201" width="3" height="20" fill="#FFFFFF"/>
<rect x="221" y="172" width="1" height="50" fill="#00FF00"/>
<rect x="219" y="179" width="5" height="43" fill="#00FF00"/>
<rect x="220" y="180" width="3" height="41" fill="#000000"/>
<rect x="229" y="171" width="1" height="31" fill="#00FF00"/>
<rect x="227" y="179" width="5" height="11" fill="#00FF00"/>
<rect x="228" y="180" width="3" height="9" fill="#FFFFFF"/>
<rect x="237" y="183" width="1" height="26" fill="#00FF00"/>
<rect x="235" y="190" width="5" height="9" fill="#00FF00"/>
<rect x="236" y="191" width="3" height="7" fill="#FFFFFF"/>
<rect x="245" y="187" width="1" height="17" fill="#00FF00"/>
<rect x="243" y="188" width="5" height="12" fill="#00FF00"/>
<rect x="244" y="189" width="3" height="10" fill="#000000"/>
<rect x="253" y="179" width="1" height="19" fill="#00FF00"/>
<rect x="251" y="182" width="5" height="6" fill="#00FF00"/>
<rect x="252" y="183" width="3" height="4" fill="#000000"/>
<rect x="261" y="178" width="1" height="18" fill="#00FF00"/>
<rect x="259" y="183" width="5" height="3" fill="#00FF00"/>
<rect x="260" y="184" width="3" height="1" fill="#FFFFFF"/>
<rect x="269" y="175" width="1" height="14" fill="#00FF00"/>
<rect x="267" y="175" width="5" height="11" fill="#00FF00"/>
<rect x="268" y="176" width="3" height="9" fill="#000000"/>
<rect x="277" y="166" width="1" height="19" fill="#00FF00"/>
<rect x="275" y="175" width="5" height="2" fill="#00FF00"/>
<rect x="285" y="133" width="1" height="47" fill="#00FF00"/>
<rect x="283" y="138" width="5" height="38" fill="#00FF00"/>
<rect x="284" y="139" width="3" height="36" fill="#000000"/>
<rect x="293" y="132" width="1" height="18" fill="#00FF00"/>
<rect x="291" y="139" width="5" height="2" fill="#00FF00"/>
<rect x="301" y="129" width="1" height="24" fill="#00FF00"/>
<rect x="299" y="139" width="5" height="4" fill="#00FF00"/>
<rect x="300" y="140" width="3" height="2" fill="#FFFFFF"/>
<rect x="309" y="139" width="1" height="28" fill="#00FF00"/>
<rect x="307" y="142" width="5" height="18" fill="#00FF00"/>
<rect x="308" y="143" width="3" height="16" fill="#FFFFFF"/>
<rect x="317" y="147" width="1" height="29" fill="#00FF00"/>
<rect x="315" y="157" width="5" height="2" fill="#00FF00"/>
<rect x="325" y="151" width="1" height="21" fill="#00FF00"/>
<rect x="323" y="157" width="5" height="13" fill="#00FF00"/>
<rect x="324" y="158" width="3" height="11" fill="#FFFFFF"/>
<rect x="333" y="141" width="1" height="37" fill="#00FF00"/>
<rect x="331" y="161" width="5" height="9" fill="#00FF00"/>
<rect x="332" y="162" width="3" height="7" fill="#000000"/>
<rect x="341" y="119" width="1" height="43" fill="#00FF00"/>
<rect x="339" y="135" width="5" height="26" fill="#00FF00"/>
<rect x="340" y="136" width="3" height="24" fill="#000000"/>
<rect x="349" y="132" width="1" height="39" fill="#00FF00"/>
<rect x="347" y="134" width="5" height="26" fill="#00FF00"/>
<rect x="348" y="135" width="3" height="24" fill="#FFFFFF"/>
<rect x="357" y="153" width="1" height="15" fill="#00FF00"/>
<rect x="355" y="160" width="5" height="3" fill="#00FF00"/>
<rect x="356" y="161" width="3" height="1" fill="#FFFFFF"/>
<rect x="365" y="151" width="1" height="15" fill="#00FF00"/>
<rect x="363" y="162" width="5" height="3" fill="#00FF00"/>
<rect x="364" y="163" width="3" height="1" fill="#FFFFFF"/>
<rect x="373" y="162" width="1" height="11" fill="#00FF00"/>
<rect x="371" y="164" width="5" height="9" fill="#00FF00"/>
<rect x="372" y="165" width="3" height="7" fill="#FFFFFF"/>
<rect x="381" y="172" width="1" height="27" fill="#00FF00"/>
<rect x="379" y="172" width="5" height="26" fill="#00FF00"/>
<rect x="380" y="173" width="3" height="24" fill="#FFFFFF"/>
<rect x="389" y="184" width="1" height="14" fill="#00FF00"/>
<rect x="387" y="195" width="5" height="3" fill="#00FF00"/>
<rect x="388" y="196" width="3" height="1" fill="#000000"/>
<rect x="397" y="185" width="1" height="16" fill="#00FF00"/>
<rect x="395" y="188" width="5" height="8" fill="#00FF00"/>
<rect x="396" y="189" width="3" height="6" fill="#000000"/>
<rect x="405" y="175" width="1" height="20" fill="#00FF00"/>
<rect x="403" y="185" width="5" height="3" fill="#00FF00"/>
<rect x="404" y="186" width="3" height="1" fill="#000000"/>
<rect x="413" y="162" width="1" height="24" fill="#00FF00"/>
<rect x="411" y="170" width="5" height="16" fill="#00FF00"/>
<rect x="412" y="171" width="3" height="14" fill="#000000"/>
<rect x="421" y="168" width="1" height="20" fill="#00FF00"/>
<rect x="419" y="170" width="5" height="18" fill="#00FF00"/>
<rect x="420" y="171" width="3" height="16" fill="#FFFFFF"/>
<rect x="429" y="176" width="1" height="12" fill="#00FF00"/>
<rect x="427" y="183" width="5" height="5" fill="#00FF00"/>
<rect x="428" y="184" width="3" height="3" fill="#000000"/>
<rect x="437" y="176" width="1" height="16" fill="#00FF00"/>
<rect x="435" y="182" width="5" height="2" fill="#00FF00"/>
<rect x="445" y="176" width="1" height="9" fill="#00FF00"/>
<rect x="443" y="179" width="5" height="6" fill="#00FF00"/>
<rect x="444" y="180" width="3" height="4" fill="#000000"/>
<rect x="453" y="170" width="1" height="10" fill="#00FF00"/>
<rect x="451" y="170" width="5" height="10" fill="#00FF00"/>
<rect x="452" y="171" width="3" height="8" fill="#000000"/>
<rect x="461" y="146" width="1" height="30" fill="#00FF00"/>
<rect x="459" y="156" width="5" height="15" fill="#00FF00"/>
<rect x="460" y="157" width="3" height="13" fill="#000000"/>
<rect x="469" y="141" width="1" height="28" fill="#00FF00"/>
<rect x="467" y="151" width="5" height="7" fill="#00FF00"/>
<rect x="468" y="152" width="3" height="5" fill="#000000"/>
<rect x="477" y="126" width="1" height="27" fill="#00FF00"/>
<rect x="475" y="132" width="5" height="20" fill="#00FF00"/>
<rect x="476" y="133" width="3" height="18" fill="#000000"/>
<rect x="485" y="129" width="1" height="18" fill="#00FF00"/>
<rect x="483" y="132" width="5" height="6" fill="#00FF00"/>
<rect x="484" y="133" width="3" height="4" fill="#FFFFFF"/>
<rect x="493" y="128" width="1" height="14" fill="#00FF00"/>
<rect x="491" y="136" width="5" height="2" fill="#00FF00"/>
<rect x="501" y="134" width="1" height="19" fill="#00FF00"/>
<rect x="499" y="137" width="5" height="4" fill="#00FF00"/>
<rect x="500" y="138" width="3" height="2" fill="#FFFFFF"/>
<rect x="509" y="113" width="1" height="30" fill="#00FF00"/>
<rect x="507" y="122" width="5" height="18" fill="#00FF00"/>
<rect x="508" y="123" width="3" height="16" fill="#000000"/>
<rect x="517" y="106" width="1" height="37" fill="#00FF00"/>
<rect x="515" y="122" width="5" height="16" fill="#00FF00"/>
<rect x="516" y="123" width="3" height="14" fill="#FFFFFF"/>
<rect x="525" y="100" width="1" height="48" fill="#00FF00"/>
<rect x="523" y="120" width="5" height="17" fill="#00FF00"/>
<rect x="524" y="121" width="3" height="15" fill="#000000"/>
<rect x="533" y="97" width="1" height="30" fill="#00FF00"/>
<rect x="531" y="112" width="5" height="9" fill="#00FF00"/>
<rect x="532" y="113" width="3" height="7" fill="#000000"/>
<rect x="541" y="102" width="1" height="28" fill="#00FF00"/>
<rect x="539" y="108" width="5" height="4" fill="#00FF00"/>
<rect x="540" y="109" width="3" height="2" fill="#000000"/>
<rect x="549" y="99" width="1" height="13" fill="#00FF00"/>
<rect x="547" y="107" width="5" height="2" fill="#00FF00"/>
<rect x="557" y="93" width="1" height="16" fill="#00FF00"/>
<rect x="555" y="99" width="5" height="9" fill="#00FF00"/>
<rect x="556" y="100" width="3" height="7" fill="#000000"/>
<rect x="565" y="96" width="1" height="6" fill="#00FF00"/>
<rect x="563" y="99" width="5" height="1" fill="#00FF00"/>
<rect x="573" y="99" width="1" height="19" fill="#00FF00"/>
<rect x="571" y="99" width="5" height="17" fill="#00FF00"/>
<rect x="572" y="100" width="3" height="15" fill="#FFFFFF"/>
<rect x="581" y="105" width="1" height="12" fill="#00FF00"/>
<rect x="579" y="113" width="5" height="3" fill="#00FF00"/>
<rect x="580" y="114" width="3" height="1" fill="#000000"/>
<rect x="589" y="100" width="1" height="22" fill="#00FF00"/>
<rect x="587" y="102" width="5" height="12" fill="#00FF00"/>
<rect x="588" y="103" width="3" height="10" fill="#000000"/>
<rect x="597" y="91" width="1" height="13" fill="#00FF00"/>
<rect x="595" y="95" width="5" height="8" fill="#00FF00"/>
<rect x="596" y="96" width="3" height="6" fill="#000000"/>
<rect x="605" y="81" width="1" height="41" fill="#00FF00"/>
<rect x="603" y="95" width="5" height="27" fill="#00FF00"/>
<rect x="604" y="96" width="3" height="25" fill="#FFFFFF"/>
<rect x="613" y="104" width="1" height="20" fill="#00FF00"/>
<rect x="611" y="121" width="5" height="3" fill="#00FF00"/>
<rect x="612" y="122" width="3" height="1" fill="#FFFFFF"/>
<rect x="621" y="113" width="1" height="11" fill="#00FF00"/>
<rect x="619" y="117" width="5" height="7" fill="#00FF00"/>
<rect x="620" y="118" width="3" height="5" fill="#000000"/>
<rect x="629" y="114" width="1" height="17" fill="#00FF00"/>
<rect x="627" y="117" width="5" height="14" fill="#00FF00"/>
<rect x="628" y="118" width="3" height="12" fill="#FFFFFF"/>
<rect x="637" y="115" width="1" height="23" fill="#00FF00"/>
<rect x="635" y="130" width="5" height="6" fill="#00FF00"/>
<rect x="636" y="131" width="3" height="4" fill="#FFFFFF"/>
<rect x="645" y="98" width="1" height="39" fill="#00FF00"/>
<rect x="643" y="114" width="5" height="21" fill="#00FF00"/>
<rect x="644" y="115" width="3" height="19" fill="#000000"/>
<rect x="653" y="107" width="1" height="10" fill="#00FF00"/>
<rect x="651" y="114" width="5" height="3" fill="#00FF00"/>
<rect x="652" y="115" width="3" height="1" fill="#000000"/>
<rect x="661" y="113" width="1" height="9" fill="#00FF00"/>
<rect x="659" y="115" width="5" height="6" fill="#00FF00"/>
<rect x="660" y="116" width="3" height="4" fill="#FFFFFF"/>
<rect x="669" y="112" width="1" height="10" fill="#00FF00"/>
<rect x="667" y="114" width="5" height="7" fill="#00FF00"/>
<rect x="668" y="115" width="3" height="5" fill="#000000"/>
<rect x="677" y="110" width="1" height="5" fill="#00FF00"/>
<rect x="675" y="112" width="5" height="3" fill="#00FF00"/>
<rect x="676" y="113" width="3" height="1" fill="#000000"/>
<rect x="13" y="319" width="1" height="34" fill="#00FFFF"/>
<rect x="11" y="335" width="5" height="5" fill="#00FFFF"/>
<rect x="21" y="318" width="1" height="33" fill="#00FFFF"/>
<rect x="19" y="334" width="5" height="4" fill="#00FFFF"/>
<rect x="29" y="317" width="1" height="32" fill="#00FFFF"/>
<rect x="27" y="332" width="5" height="4" fill="#00FFFF"/>
<rect x="37" y="315" width="1" height="32" fill="#00FFFF"/>
<rect x="35" y="331" width="5" height="4" fill="#00FFFF"/>
<rect x="45" y="313" width="1" height="32" fill="#00FFFF"/>
<rect x="43" y="329" width="5" height="4" fill="#00FFFF"/>
<rect x="53" y="312" width="1" height="31" fill="#00FFFF"/>
<rect x="51" y="328" width="5" height="4" fill="#00FFFF"/>
<rect x="61" y="310" width="1" height="31" fill="#00FFFF"/>
<rect x="59" y="326" width="5" height="4" fill="#00FFFF"/>
<rect x="69" y="310" width="1" height="29" fill="#00FFFF"/>
<rect x="67" y="324" width="5" height="5" fill="#00FFFF"/>
<rect x="77" y="308" width="1" height="28" fill="#00FFFF"/>
<rect x="75" y="322" width="5" height="5" fill="#00FFFF"/>
<rect x="85" y="306" width="1" height="28" fill="#00FFFF"/>
<rect x="83" y="320" width="5" height="5" fill="#00FFFF"/>
<rect x="93" y="305" width="1" height="27" fill="#00FFFF"/>
<rect x="91" y="318" width="5" height="5" fill="#00FFFF"/>
<rect x="101" y="304" width="1" height="28" fill="#00FFFF"/>
<rect x="99" y="318" width="5" height="3" fill="#00FFFF"/>
<rect x="109" y="303" width="1" height="29" fill="#00FFFF"/>
<rect x="107" y="317" width="5" height="3" fill="#00FFFF"/>
<rect x="117" y="302" width="1" height="29" fill="#00FFFF"/>
<rect x="115" y="316" width="5" height="3" fill="#00FFFF"/>
<rect x="125" y="299" width="1" height="30" fill="#00FFFF"/>
<rect x="123" y="315" width="5" height="3" fill="#00FFFF"/>
<rect x="133" y="296" width="1" height="31" fill="#00FFFF"/>
<rect x="131" y="313" width="5" height="4" fill="#00FFFF"/>
<rect x="141" y="292" width="1" height="33" fill="#00FFFF"/>
<rect x="139" y="311" width="5" height="5" fill="#00FFFF"/>
<rect x="149" y="292" width="1" height="29" fill="#00FFFF"/>
<rect x="147" y="306" width="5" height="8" fill="#00FFFF"/>
<rect x="157" y="285" width="1" height="30" fill="#00FFFF"/>
<rect x="155" y="300" width="5" height="11" fill="#00FFFF"/>
<rect x="165" y="276" width="1" height="31" fill="#00FFFF"/>
<rect x="163" y="291" width="5" height="15" fill="#00FFFF"/>
<rect x="173" y="267" width="1" height="33" fill="#00FFFF"/>
<rect x="171" y="282" width="5" height="17" fill="#00FFFF"/>
<rect x="181" y="259" width="1" height="32" fill="#00FFFF"/>
<rect x="179" y="273" width="5" height="18" fill="#00FFFF"/>
<rect x="189" y="252" width="1" height="31" fill="#00FFFF"/>
<rect x="187" y="266" width="5" height="17" fill="#00FFFF"/>
<rect x="197" y="246" width="1" height="29" fill="#00FFFF"/>
<rect x="195" y="259" width="5" height="16" fill="#00FFFF"/>
<rect x="205" y="241" width="1" height="28" fill="#00FFFF"/>
<rect x="203" y="254" width="5" height="13" fill="#00FFFF"/>
<rect x="213" y="237" width="1" height="26" fill="#00FFFF"/>
<rect x="211" y="250" width="5" height="11" fill="#00FFFF"/>
<rect x="221" y="233" width="1" height="27" fill="#00FFFF"/>
<rect x="219" y="246" width="5" height="10" fill="#00FFFF"/>
<rect x="229" y="228" width="1" height="28" fill="#00FFFF"/>
<rect x="227" y="242" width="5" height="9" fill="#00FFFF"/>
<rect x="237" y="224" width="1" height="28" fill="#00FFFF"/>
<rect x="235" y="238" width="5" height="9" fill="#00FFFF"/>
<rect x="245" y="219" width="1" height="29" fill="#00FFFF"/>
<rect x="243" y="234" width="5" height="9" fill="#00FFFF"/>
<rect x="253" y="216" width="1" height="29" fill="#00FFFF"/>
<rect x="251" y="230" width="5" height="9" fill="#00FFFF"/>
<rect x="261" y="214" width="1" height="27" fill="#00FFFF"/>
<rect x="259" y="227" width="5" height="8" fill="#00FFFF"/>
<rect x="269" y="211" width="1" height="26" fill="#00FFFF"/>
<rect x="267" y="223" width="5" height="8" fill="#00FFFF"/>
<rect x="277" y="208" width="1" height="25" fill="#00FFFF"/>
<rect x="275" y="220" width="5" height="8" fill="#00FFFF"/>
<rect x="285" y="203" width="1" height="26" fill="#00FFFF"/>
<rect x="283" y="216" width="5" height="8" fill="#00FFFF"/>
<rect x="293" y="198" width="1" height="26" fill="#00FFFF"/>
<rect x="291" y="211" width="5" height="9" fill="#00FFFF"/>
<rect x="301" y="193" width="1" height="26" fill="#00FFFF"/>
<rect x="299" y="205" width="5" height="11" fill="#00FFFF"/>
<rect x="309" y="188" width="1" height="26" fill="#00FFFF"/>
<rect x="307" y="200" width="5" height="11" fill="#00FFFF"/>
<rect x="317" y="184" width="1" height="26" fill="#00FFFF"/>
<rect x="315" y="196" width="5" height="10" fill="#00FFFF"/>
<rect x="325" y="181" width="1" height="26" fill="#00FFFF"/>
<rect x="323" y="193" width="5" height="9" fill="#00FFFF"/>
<rect x="333" y="178" width="1" height="26" fill="#00FFFF"/>
<rect x="331" y="190" width="5" height="8" fill="#00FFFF"/>
<rect x="341" y="174" width="1" height="28" fill="#00FFFF"/>
<rect x="339" y="187" width="5" height="8" fill="#00FFFF"/>
<rect x="349" y="171" width="1" height="28" fill="#00FFFF"/>
<rect x="347" y="185" width="5" height="7" fill="#00FFFF"/>
<rect x="357" y="166" width="1" height="31" fill="#00FFFF"/>
<rect x="355" y="182" width="5" height="7" fill="#00FFFF"/>
<rect x="365" y="166" width="1" height="29" fill="#00FFFF"/>
<rect x="363" y="180" width="5" height="6" fill="#00FFFF"/>
<rect x="373" y="165" width="1" height="28" fill="#00FFFF"/>
<rect x="371" y="179" width="5" height="4" fill="#00FFFF"/>
<rect x="381" y="165" width="1" height="26" fill="#00FFFF"/>
<rect x="379" y="178" width="5" height="3" fill="#00FFFF"/>
<rect x="389" y="175" width="1" height="7" fill="#00FFFF"/>
<rect x="387" y="178" width="5" height="2" fill="#00FFFF"/>
<rect x="397" y="174" width="1" height="11" fill="#FF0000"/>
<rect x="395" y="179" width="5" height="1" fill="#FF0000"/>
<rect x="405" y="170" width="1" height="20" fill="#FF0000"/>
<rect x="403" y="179" width="5" height="2" fill="#FF0000"/>
<rect x="413" y="168" width="1" height="25" fill="#FF0000"/>
<rect x="411" y="180" width="5" height="1" fill="#FF0000"/>
<rect x="421" y="178" width="1" height="6" fill="#FF0000"/>
<rect x="419" y="180" width="5" height="1" fill="#FF0000"/>
<rect x="429" y="175" width="1" height="11" fill="#FF0000"/>
<rect x="427" y="180" width="5" height="1" fill="#FF0000"/>
<rect x="437" y="174" width="1" height="16" fill="#FF0000"/>
<rect x="435" y="180" width="5" height="2" fill="#FF0000"/>
<rect x="445" y="172" width="1" height="18" fill="#FF0000"/>
<rect x="443" y="180" width="5" height="2" fill="#FF0000"/>
<rect x="453" y="178" width="1" height="6" fill="#FF0000"/>
<rect x="451" y="180" width="5" height="2" fill="#FF0000"/>
<rect x="461" y="176" width="1" height="9" fill="#00FFFF"/>
<rect x="459" y="180" width="5" height="2" fill="#00FFFF"/>
<rect x="469" y="170" width="1" height="18" fill="#00FFFF"/>
<rect x="467" y="179" width="5" height="2" fill="#00FFFF"/>
<rect x="477" y="166" width="1" height="22" fill="#00FFFF"/>
<rect x="475" y="176" width="5" height="4" fill="#00FFFF"/>
<rect x="485" y="163" width="1" height="22" fill="#00FFFF"/>
<rect x="483" y="174" width="5" height="5" fill="#00FFFF"/>
<rect x="493" y="160" width="1" height="22" fill="#00FFFF"/>
<rect x="491" y="171" width="5" height="6" fill="#00FFFF"/>
<rect x="501" y="158" width="1" height="21" fill="#00FFFF"/>
<rect x="499" y="168" width="5" height="6" fill="#00FFFF"/>
<rect x="509" y="155" width="1" height="21" fill="#00FFFF"/>
<rect x="507" y="165" width="5" height="7" fill="#00FFFF"/>
<rect x="517" y="152" width="1" height="22" fill="#00FFFF"/>
<rect x="515" y="162" width="5" height="7" fill="#00FFFF"/>
<rect x="525" y="148" width="1" height="24" fill="#00FFFF"/>
<rect x="523" y="160" width="5" height="6" fill="#00FFFF"/>
<rect x="533" y="144" width="1" height="25" fill="#00FFFF"/>
<rect x="531" y="157" width="5" height="6" fill="#00FFFF"/>
<rect x="541" y="141" width="1" height="25" fill="#00FFFF"/>
<rect x="539" y="153" width="5" height="7" fill="#00FFFF"/>
<rect x="549" y="137" width="1" height="26" fill="#00FFFF"/>
<rect x="547" y="150" width="5" height="7" fill="#00FFFF"/>
<rect x="557" y="134" width="1" height="25" fill="#00FFFF"/>
<rect x="555" y="146" width="5" height="8" fill="#00FFFF"/>
<rect x="565" y="131" width="1" height="24" fill="#00FFFF"/>
<rect x="563" y="143" width="5" height="8" fill="#00FFFF"/>
<rect x="573" y="128" width="1" height="23" fill="#00FFFF"/>
<rect x="571" y="139" width="5" height="8" fill="#00FFFF"/>
<rect x="581" y="126" width="1" height="22" fill="#00FFFF"/>
<rect x="579" y="137" width="5" height="7" fill="#00FFFF"/>
<rect x="589" y="123" width="1" height="23" fill="#00FFFF"/>
<rect x="587" y="134" width="5" height="7" fill="#00FFFF"/>
<rect x="597" y="121" width="1" height="22" fill="#00FFFF"/>
<rect x="595" y="132" width="5" height="6" fill="#00FFFF"/>
<rect x="605" y="119" width="1" height="22" fill="#00FFFF"/>
<rect x="603" y="130" width="5" height="5" fill="#00FFFF"/>
<rect x="613" y="117" width="1" height="22" fill="#00FFFF"/>
<rect x="611" y="128" width="5" height="5" fill="#00FFFF"/>
<rect x="621" y="115" width="1" height="23" fill="#00FFFF"/>
<rect x="619" y="127" width="5" height="4" fill="#00FFFF"/>
<rect x="629" y="114" width="1" height="23" fill="#00FFFF"/>
<rect x="627" y="126" width="5" height="3" fill="#00FFFF"/>
<rect x="637" y="115" width="1" height="21" fill="#00FFFF"/>
<rect x="635" y="126" width="5" height="2" fill="#00FFFF"/>
<rect x="645" y="114" width="1" height="23" fill="#00FFFF"/>
<rect x="643" y="126" width="5" height="2" fill="#00FFFF"/>
<rect x="653" y="107" width="1" height="29" fill="#00FFFF"/>
<rect x="651" y="126" width="5" height="1" fill="#00FFFF"/>
<rect x="661" y="113" width="1" height="23" fill="#00FFFF"/>
<rect x="659" y="125" width="5" height="2" fill="#00FFFF"/>
<rect x="669" y="112" width="1" height="23" fill="#00FFFF"/>
<rect x="667" y="124" width="5" height="3" fill="#00FFFF"/>
<rect x="677" y="112" width="1" height="23" fill="#00FFFF"/>
<rect x="675" y="124" width="5" height="2" fill="#00FFFF"/>
<polygon points="52.40,321.40 54.25,325.20 58.46,324.90 56.10,328.40 58.46,331.90 54.25,331.60 52.40,335.40 50.55,331.60 46.34,331.90 48.70,328.40 46.34,324.90 50.55,325.20" fill="#FF1493" shape-rendering="geometricPrecision"/>
<polygon points="61.10,322.10 70.70,331.40 70.70,334.50 62.70,327.30 62.70,343.10 59.30,343.10 59.30,327.30 51.40,334.50 51.40,331.30" fill="#FF1493" shape-rendering="geometricPrecision"/>
<polygon points="132.80,315.60 134.65,319.40 138.86,319.10 136.50,322.60 138.86,326.10 134.65,325.80 132.80,329.60 130.95,325.80 126.74,326.10 129.10,322.60 126.74,319.10 130.95,319.40" fill="#FF1493" shape-rendering="geometricPrecision"/>
<polygon points="141.10,286.90 150.70,296.20 150.70,299.30 142.70,292.10 142.70,307.90 139.30,307.90 139.30,292.10 131.40,299.30 131.40,296.10" fill="#FF1493" shape-rendering="geometricPrecision"/>
<polygon points="244.40,209.30 246.25,213.10 250.46,212.80 248.10,216.30 250.46,219.80 246.25,219.50 244.40,223.30 242.55,219.50 238.34,219.80 240.70,216.30 238.34,212.80 242.55,213.10" fill="#FF1493" shape-rendering="geometricPrecision"/>
<polygon points="253.10,202.60 262.70,211.90 262.70,215.00 254.70,207.80 254.70,223.60 251.30,223.60 251.30,207.80 243.40,215.00 243.40,211.80" fill="#FF1493" shape-rendering="geometricPrecision"/>
<polygon points="676.80,125.50 678.65,129.30 682.86,129.00 680.50,132.50 682.86,136.00 678.65,135.70 676.80,139.50 674.95,135.70 670.74,136.00 673.10,132.50 670.74,129.00 674.95,129.30" fill="#FF1493" shape-rendering="geometricPrecision"/>
</g>
<g clip-path="url(#sc)">
<polyline points="13,412.0 21,412.0 29,420.6 37,420.2 45,419.0 53,413.7 61,413.0 69,403.7 77,401.7 85,402.7 93,408.9 101,415.5 109,419.5 117,423.9 125,421.7 133,411.3 141,403.4 149,396.3 157,391.7 165,388.7 173,390.0 181,395.0 189,400.2 197,404.0 205,410.6 213,420.8 221,417.8 229,417.4 237,417.8 245,416.1 253,408.7 261,408.7 269,406.0 277,402.1 285,399.5 293,396.3 301,393.9 309,397.6 317,400.4 325,410.0 333,421.7 341,426.3 349,431.5 357,434.3 365,435.2 373,439.8 381,457.0 389,473.3 397,485.3 405,500.8 413,510.7 421,512.8 429,510.2 437,510.2 445,509.5 453,509.2 461,493.7 469,486.5 477,462.8 485,445.3 493,430.9 501,424.3 509,414.8 517,420.0 525,419.9 533,415.7 541,410.3 549,409.7 557,400.6 565,397.6 573,400.2 581,403.5 589,403.5 597,402.8 605,414.0 613,420.5 621,426.0 629,441.5 637,462.0 645,465.8 653,468.1 661,474.8 669,470.5 677,461.5" fill="none" stroke="#20B2AA" stroke-width="2" stroke-linejoin="round" shape-rendering="crispEdges"/>
<polyline points="13,443.3 21,430.0 29,421.0 37,417.8 45,416.9 53,416.4 61,416.9 69,413.0 77,409.0 85,406.0 93,405.9 101,407.0 109,409.3 117,414.5 125,417.4 133,417.4 141,416.5 149,410.9 157,404.7 165,398.2 173,393.9 181,393.0 189,393.5 197,395.0 205,400.8 213,406.7 221,412.2 229,415.6 237,417.8 245,417.8 253,415.6 261,413.9 269,410.6 277,408.3 285,405.4 293,403.0 301,400.8 309,398.2 317,397.8 325,400.8 333,405.4 341,411.3 349,417.1 357,423.6 365,429.5 373,432.9 381,438.6 389,447.5 397,458.7 405,470.7 413,484.4 421,497.0 429,504.2 437,508.0 445,510.5 453,510.5 461,508.2 469,502.0 477,492.7 485,479.3 493,462.8 501,446.4 509,435.4 517,427.8 525,421.5 533,417.9 541,415.9 549,415.5 557,411.0 565,407.1 573,404.1 581,403.5 589,401.1 597,400.9 605,405.4 613,409.5 621,412.9 629,421.0 637,432.6 645,441.8 653,451.9 661,461.2 669,468.9 677,468.9" fill="none" stroke="#FF0000" stroke-width="2" stroke-linejoin="round" shape-rendering="crispEdges"/>
</g>
<path d="M15 40 L23 40 L19 44 Z" fill="#FFFFFF"/>
<text x="28" y="45" font-family='"Liberation Sans", sans-serif' font-size="10" fill="#FFFFFF" stroke="#FFFFFF" stroke-width="0.2" text-rendering="geometricPrecision" textLength="50" lengthAdjust="spacingAndGlyphs">USDJPY,H1</text>
<text x="85.5" y="45" font-family='"Liberation Sans", sans-serif' font-size="10" fill="#FFFFFF" stroke="#FFFFFF" stroke-width="0.2" text-rendering="geometricPrecision" textLength="32.5" lengthAdjust="spacingAndGlyphs">144.430</text>
<text x="121.6" y="45" font-family='"Liberation Sans", sans-serif' font-size="10" fill="#FFFFFF" stroke="#FFFFFF" stroke-width="0.2" text-rendering="geometricPrecision" textLength="32.5" lengthAdjust="spacingAndGlyphs">144.439</text>
<text x="157.7" y="45" font-family='"Liberation Sans", sans-serif' font-size="10" fill="#FFFFFF" stroke="#FFFFFF" stroke-width="0.2" text-rendering="geometricPrecision" textLength="32.5" lengthAdjust="spacingAndGlyphs">144.377</text>
<text x="193.8" y="45" font-family='"Liberation Sans", sans-serif' font-size="10" fill="#FFFFFF" stroke="#FFFFFF" stroke-width="0.2" text-rendering="geometricPrecision" textLength="32.5" lengthAdjust="spacingAndGlyphs">144.417</text>
<text x="684.5" y="44" font-family='"Liberation Sans", sans-serif' font-size="10" fill="#FFFFFF" stroke="#FFFFFF" stroke-width="0.2" text-rendering="geometricPrecision" textLength="32.5" lengthAdjust="spacingAndGlyphs">114.660</text>
<text x="684.5" y="77" font-family='"Liberation Sans", sans-serif' font-size="10" fill="#FFFFFF" stroke="#FFFFFF" stroke-width="0.2" text-rendering="geometricPrecision" textLength="32.5" lengthAdjust="spacingAndGlyphs">114.535</text>
<text x="684.5" y="111" font-family='"Liberation Sans", sans-serif' font-size="10" fill="#FFFFFF" stroke="#FFFFFF" stroke-width="0.2" text-rendering="geometricPrecision" textLength="32.5" lengthAdjust="spacingAndGlyphs">114.410</text>
<text x="684.5" y="144" font-family='"Liberation Sans", sans-serif' font-size="10" fill="#FFFFFF" stroke="#FFFFFF" stroke-width="0.2" text-rendering="geometricPrecision" textLength="32.5" lengthAdjust="spacingAndGlyphs">114.285</text>
<text x="684.5" y="178" font-family='"Liberation Sans", sans-serif' font-size="10" fill="#FFFFFF" stroke="#FFFFFF" stroke-width="0.2" text-rendering="geometricPrecision" textLength="32.5" lengthAdjust="spacingAndGlyphs">114.160</text>
<text x="684.5" y="211" font-family='"Liberation Sans", sans-serif' font-size="10" fill="#FFFFFF" stroke="#FFFFFF" stroke-width="0.2" text-rendering="geometricPrecision" textLength="32.5" lengthAdjust="spacingAndGlyphs">114.035</text>
<text x="684.5" y="245" font-family='"Liberation Sans", sans-serif' font-size="10" fill="#FFFFFF" stroke="#FFFFFF" stroke-width="0.2" text-rendering="geometricPrecision" textLength="32.5" lengthAdjust="spacingAndGlyphs">113.910</text>
<text x="684.5" y="278" font-family='"Liberation Sans", sans-serif' font-size="10" fill="#FFFFFF" stroke="#FFFFFF" stroke-width="0.2" text-rendering="geometricPrecision" textLength="32.5" lengthAdjust="spacingAndGlyphs">113.785</text>
<text x="684.5" y="312" font-family='"Liberation Sans", sans-serif' font-size="10" fill="#FFFFFF" stroke="#FFFFFF" stroke-width="0.2" text-rendering="geometricPrecision" textLength="32.5" lengthAdjust="spacingAndGlyphs">113.660</text>
<text x="684.5" y="345" font-family='"Liberation Sans", sans-serif' font-size="10" fill="#FFFFFF" stroke="#FFFFFF" stroke-width="0.2" text-rendering="geometricPrecision" textLength="32.5" lengthAdjust="spacingAndGlyphs">113.535</text>
<text x="684.5" y="379" font-family='"Liberation Sans", sans-serif' font-size="10" fill="#FFFFFF" stroke="#FFFFFF" stroke-width="0.2" text-rendering="geometricPrecision" textLength="32.5" lengthAdjust="spacingAndGlyphs">113.410</text>
<text x="17" y="393" font-family='"Liberation Sans", sans-serif' font-size="10" fill="#FFFFFF" stroke="#FFFFFF" stroke-width="0.2" text-rendering="geometricPrecision" textLength="127" lengthAdjust="spacingAndGlyphs">Stoch(21,5,5) 67.7354 76.1649</text>
<text x="682" y="392" font-family='"Liberation Sans", sans-serif' font-size="10" fill="#FFFFFF" stroke="#FFFFFF" stroke-width="0.2" text-rendering="geometricPrecision" textLength="14.5" lengthAdjust="spacingAndGlyphs">100</text>
<text x="681" y="419" font-family='"Liberation Sans", sans-serif' font-size="10" fill="#FFFFFF" stroke="#FFFFFF" stroke-width="0.2" text-rendering="geometricPrecision" textLength="10" lengthAdjust="spacingAndGlyphs">80</text>
<text x="681" y="521" font-family='"Liberation Sans", sans-serif' font-size="10" fill="#FFFFFF" stroke="#FFFFFF" stroke-width="0.2" text-rendering="geometricPrecision" textLength="10" lengthAdjust="spacingAndGlyphs">20</text>
<text x="682" y="548" font-family='"Liberation Sans", sans-serif' font-size="10" fill="#FFFFFF" stroke="#FFFFFF" stroke-width="0.2" text-rendering="geometricPrecision" textLength="5" lengthAdjust="spacingAndGlyphs">0</text>
<text x="12.5" y="564" font-family='"Liberation Sans", sans-serif' font-size="10" fill="#FFFFFF" stroke="#FFFFFF" stroke-width="0.2" text-rendering="geometricPrecision" textLength="51" lengthAdjust="spacingAndGlyphs">21 Dec 2021</text>
<text x="76.5" y="564" font-family='"Liberation Sans", sans-serif' font-size="10" fill="#FFFFFF" stroke="#FFFFFF" stroke-width="0.2" text-rendering="geometricPrecision" textLength="54.3" lengthAdjust="spacingAndGlyphs">21 Dec 08:00</text>
<text x="140.5" y="564" font-family='"Liberation Sans", sans-serif' font-size="10" fill="#FFFFFF" stroke="#FFFFFF" stroke-width="0.2" text-rendering="geometricPrecision" textLength="54.3" lengthAdjust="spacingAndGlyphs">21 Dec 16:00</text>
<text x="204.5" y="564" font-family='"Liberation Sans", sans-serif' font-size="10" fill="#FFFFFF" stroke="#FFFFFF" stroke-width="0.2" text-rendering="geometricPrecision" textLength="54.3" lengthAdjust="spacingAndGlyphs">22 Dec 00:00</text>
<text x="268.5" y="564" font-family='"Liberation Sans", sans-serif' font-size="10" fill="#FFFFFF" stroke="#FFFFFF" stroke-width="0.2" text-rendering="geometricPrecision" textLength="54.3" lengthAdjust="spacingAndGlyphs">22 Dec 08:00</text>
<text x="332.5" y="564" font-family='"Liberation Sans", sans-serif' font-size="10" fill="#FFFFFF" stroke="#FFFFFF" stroke-width="0.2" text-rendering="geometricPrecision" textLength="54.3" lengthAdjust="spacingAndGlyphs">22 Dec 16:00</text>
<text x="396.5" y="564" font-family='"Liberation Sans", sans-serif' font-size="10" fill="#FFFFFF" stroke="#FFFFFF" stroke-width="0.2" text-rendering="geometricPrecision" textLength="54.3" lengthAdjust="spacingAndGlyphs">23 Dec 00:00</text>
<text x="460.5" y="564" font-family='"Liberation Sans", sans-serif' font-size="10" fill="#FFFFFF" stroke="#FFFFFF" stroke-width="0.2" text-rendering="geometricPrecision" textLength="54.3" lengthAdjust="spacingAndGlyphs">23 Dec 08:00</text>
<text x="524.5" y="564" font-family='"Liberation Sans", sans-serif' font-size="10" fill="#FFFFFF" stroke="#FFFFFF" stroke-width="0.2" text-rendering="geometricPrecision" textLength="54.3" lengthAdjust="spacingAndGlyphs">23 Dec 16:00</text>
<text x="588.5" y="564" font-family='"Liberation Sans", sans-serif' font-size="10" fill="#FFFFFF" stroke="#FFFFFF" stroke-width="0.2" text-rendering="geometricPrecision" textLength="54.3" lengthAdjust="spacingAndGlyphs">24 Dec 00:00</text>
<text x="652.5" y="564" font-family='"Liberation Sans", sans-serif' font-size="10" fill="#FFFFFF" stroke="#FFFFFF" stroke-width="0.2" text-rendering="geometricPrecision" textLength="54.3" lengthAdjust="spacingAndGlyphs">24 Dec 08:00</text>
</svg></body></html>
